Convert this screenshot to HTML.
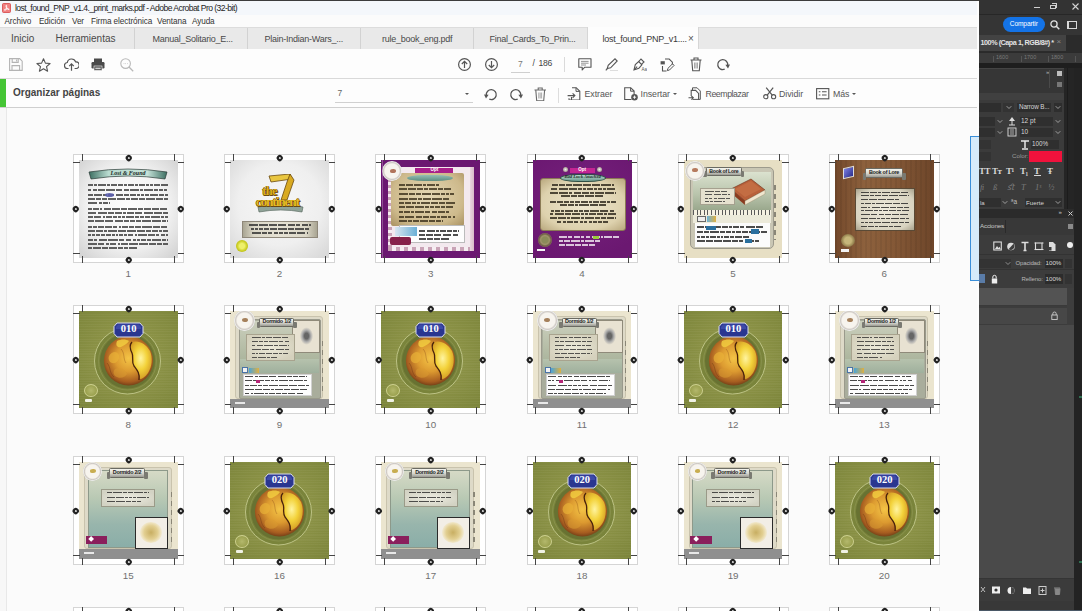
<!DOCTYPE html><html><head><meta charset="utf-8"><style>
*{margin:0;padding:0;box-sizing:border-box}
html,body{width:1082px;height:611px;overflow:hidden;background:#fbfbfb;font-family:"Liberation Sans",sans-serif;position:relative}
.a{position:absolute}
.t{position:absolute;white-space:nowrap;line-height:1}
</style></head><body><div class="a" style="left:0;top:0;width:979px;height:1px;background:#3c3c3c"></div>
<div class="a" style="left:0;top:1px;width:979px;height:14px;background:#f4f7fb"></div>
<div class="a" style="left:0;top:15px;width:979px;height:12px;background:#fbfbfb"></div>
<svg class="a" style="left:1.5px;top:3px" width="9" height="10" viewBox="0 0 9 10"><rect x="0.5" y="0.5" width="8" height="9" rx="1" fill="#f08080" stroke="#d64545" stroke-width="0.8"/><path d="M4.5 2.2c-0.8 0-0.6 1.5 0.2 3 0.7 1.3-2.6 2.7-2.3 1.6 0.3-0.9 3.5-1.4 4.6-0.6 0.7 0.5-1.1 0.6-1.9-0.7-0.7-1.2-0.4-3.3-0.6-3.3z" fill="none" stroke="#fff" stroke-width="0.9"/></svg>
<div class="t" style="left:15px;top:3.5px;font-size:8.6px;letter-spacing:-0.56px;color:#1e1e1e">lost_found_PNP_v1.4._print_marks.pdf - Adobe Acrobat Pro (32-bit)</div>
<div class="t" style="left:4.5px;top:18.2px;font-size:8.2px;letter-spacing:-0.1px;color:#333">Archivo</div>
<div class="t" style="left:39px;top:18.2px;font-size:8.2px;letter-spacing:-0.1px;color:#333">Edición</div>
<div class="t" style="left:72px;top:18.2px;font-size:8.2px;letter-spacing:-0.1px;color:#333">Ver</div>
<div class="t" style="left:91px;top:18.2px;font-size:8.2px;letter-spacing:-0.1px;color:#333">Firma electrónica</div>
<div class="t" style="left:157px;top:18.2px;font-size:8.2px;letter-spacing:-0.1px;color:#333">Ventana</div>
<div class="t" style="left:192px;top:18.2px;font-size:8.2px;letter-spacing:-0.1px;color:#333">Ayuda</div>
<div class="a" style="left:0;top:27px;width:979px;height:22px;background:#e9e9e9;border-top:1px solid #dcdcdc"></div>
<div class="t" style="left:11px;top:34px;font-size:10px;color:#4a4a4a">Inicio</div>
<div class="t" style="left:55.5px;top:34px;font-size:10px;color:#4a4a4a">Herramientas</div>
<div class="a" style="left:134px;top:28px;width:1px;height:21px;background:#d2d2d2"></div>
<div class="a" style="left:247px;top:28px;width:1px;height:21px;background:#d2d2d2"></div>
<div class="a" style="left:360px;top:28px;width:1px;height:21px;background:#d2d2d2"></div>
<div class="a" style="left:473px;top:28px;width:1px;height:21px;background:#d2d2d2"></div>
<div class="t" style="left:152.5px;top:35px;font-size:9px;letter-spacing:-0.25px;color:#4a4a4a">Manual_Solitario_E...</div>
<div class="t" style="left:264.5px;top:35px;font-size:9px;letter-spacing:-0.25px;color:#4a4a4a">Plain-Indian-Wars_...</div>
<div class="t" style="left:382px;top:35px;font-size:9px;letter-spacing:-0.25px;color:#4a4a4a">rule_book_eng.pdf</div>
<div class="t" style="left:489.5px;top:35px;font-size:9px;letter-spacing:-0.25px;color:#4a4a4a">Final_Cards_To_Prin...</div>
<div class="a" style="left:587px;top:27px;width:112px;height:23px;background:#fdfdfd;border-right:1px solid #d6d6d6;border-left:1px solid #d6d6d6"></div>
<div class="t" style="left:602.5px;top:35px;font-size:9px;letter-spacing:-0.25px;color:#3a3a3a">lost_found_PNP_v1....</div>
<div class="t" style="left:688px;top:33.5px;font-size:10px;color:#555">&#215;</div>
<div class="a" style="left:0;top:49px;width:979px;height:29px;background:#fdfdfd"></div>
<div class="a" style="left:0;top:78px;width:979px;height:1px;background:#d9d9d9"></div>
<div class="a" style="left:0;top:79px;width:979px;height:28px;background:#fdfdfd"></div>
<div class="a" style="left:0;top:79px;width:6px;height:28px;background:#45c535"></div>
<div class="a" style="left:0;top:107px;width:979px;height:1px;background:#cfcfcf"></div>
<div class="t" style="left:13px;top:88px;font-size:10px;font-weight:bold;color:#444">Organizar páginas</div>
<svg class="a" style="left:9px;top:58px" width="14" height="13" viewBox="0 0 14 13"><path d="M0.6 0.6h10l2.6 2.6v9.2h-12.6z" fill="none" stroke="#b4b4b4" stroke-width="1.1"/><path d="M3.2 0.8v3.6h6v-3.6M3 12.2v-4.6h7.6v4.6" fill="none" stroke="#b4b4b4" stroke-width="1.1"/><path d="M7.6 1.5v2" stroke="#b4b4b4"/></svg>
<svg class="a" style="left:36px;top:57.5px" width="15" height="14" viewBox="0 0 15 14"><path d="M7.5 0.8l1.9 4.3 4.7 0.4-3.6 3.1 1.1 4.6-4.1-2.5-4.1 2.5 1.1-4.6-3.6-3.1 4.7-0.4z" fill="none" stroke="#555" stroke-width="1.1" stroke-linejoin="round"/></svg>
<svg class="a" style="left:64px;top:58px" width="15" height="13" viewBox="0 0 15 13"><path d="M4.5 10.5h-0.8a3 3 0 0 1-0.4-6 4.3 4.3 0 0 1 8.3-0.6 3.1 3.1 0 0 1 0.6 6.6h-1.6" fill="none" stroke="#555" stroke-width="1.2"/><path d="M7.5 12.8v-6.8M5.2 8.2l2.3-2.3 2.3 2.3" fill="none" stroke="#555" stroke-width="1.2"/></svg>
<svg class="a" style="left:91px;top:57.5px" width="14" height="13" viewBox="0 0 14 13"><rect x="3" y="0.5" width="8" height="3.5" fill="#4a4a4a"/><rect x="0.5" y="4" width="13" height="6.5" rx="1.2" fill="#4a4a4a"/><rect x="3" y="8" width="8" height="4.5" fill="#4a4a4a" stroke="#fdfdfd" stroke-width="0.6"/><rect x="4.3" y="9.6" width="5.4" height="1.6" fill="#cfcfcf"/></svg>
<svg class="a" style="left:120px;top:58px" width="14" height="13.5" viewBox="0 0 14 13.5"><circle cx="5.6" cy="5.6" r="4.8" fill="none" stroke="#b8b8b8" stroke-width="1.1"/><path d="M9 9l4.2 4.2" stroke="#b8b8b8" stroke-width="1.3"/><path d="M3.7 5.6h0.6M5.4 5.6h0.6M7.1 5.6h0.6" stroke="#b8b8b8" stroke-width="0.9"/></svg>
<svg class="a" style="left:457.5px;top:57.5px" width="13" height="13" viewBox="0 0 13 13"><circle cx="6.5" cy="6.5" r="5.9" fill="none" stroke="#555" stroke-width="1.2"/><path d="M6.5 10v-6.6M3.8 6l2.7-2.7 2.7 2.7" fill="none" stroke="#555" stroke-width="1.2"/></svg>
<svg class="a" style="left:484.5px;top:57.5px" width="13" height="13" viewBox="0 0 13 13"><circle cx="6.5" cy="6.5" r="5.9" fill="none" stroke="#555" stroke-width="1.2"/><path d="M6.5 3v6.6M3.8 7l2.7 2.7 2.7-2.7" fill="none" stroke="#555" stroke-width="1.2"/></svg>
<div class="t" style="left:518px;top:59.5px;font-size:8.5px;color:#777">7</div>
<div class="a" style="left:511px;top:71.5px;width:19px;height:1px;background:#cfcfcf"></div>
<div class="t" style="left:532.5px;top:59.3px;font-size:8.6px;letter-spacing:-0.35px;color:#444">/&#160;&#160;186</div>
<div class="a" style="left:564px;top:56.5px;width:1px;height:15.5px;background:#dadada"></div>
<svg class="a" style="left:577.5px;top:58px" width="14" height="13" viewBox="0 0 14 13"><path d="M0.8 0.8h12.2v8.4h-6.2l-2.6 2.8v-2.8h-3.4z" fill="none" stroke="#555" stroke-width="1.1" stroke-linejoin="round"/><path d="M3 3.4h7.6M3 5.2h7.6M3 7h5" stroke="#777" stroke-width="0.8"/></svg>
<svg class="a" style="left:605px;top:58px" width="14" height="13" viewBox="0 0 14 13"><path d="M2.2 10.6l1-3.2 6.8-6.6 2.2 2.2-6.6 6.8z" fill="none" stroke="#555" stroke-width="1.1"/><path d="M0.8 12.4l1.6-1.8" stroke="#555" stroke-width="1.1"/><path d="M5 12.5h8" stroke="#ddd" stroke-width="1"/></svg>
<svg class="a" style="left:632.5px;top:58px" width="14" height="13" viewBox="0 0 14 13"><path d="M1 11.8l1.3-5.2 3.4-3 3.2 3.2-3 3.4z" fill="none" stroke="#555" stroke-width="1.1"/><path d="M5.7 3.6l2.3-2.6 3 3-2.6 2.3M1.2 11.6l3-3" fill="none" stroke="#555" stroke-width="1.1"/><text x="8.6" y="12.6" font-size="4.5" font-family="Liberation Sans" fill="#555">Aa</text></svg>
<svg class="a" style="left:660px;top:57.5px" width="15" height="14" viewBox="0 0 15 14"><rect x="0.6" y="3.2" width="4.2" height="3.2" fill="#555"/><path d="M5 1h4.2l3.2 3.2v2.4M2.5 8v5h4" fill="none" stroke="#555" stroke-width="1.1"/><path d="M7.3 12.6l0.6-2.2 4.6-4.6 1.6 1.6-4.6 4.6z" fill="none" stroke="#555" stroke-width="1"/></svg>
<svg class="a" style="left:689.5px;top:57px" width="12" height="14.5" viewBox="0 0 12 14.5"><path d="M0.5 3h11M4 3v-2h4v2M1.8 3.2l0.9 10.6h6.6l0.9-10.6" fill="none" stroke="#555" stroke-width="1.1"/><path d="M4.6 5.5v6M7.4 5.5v6M6 5.5v6" stroke="#777" stroke-width="0.7"/></svg>
<svg class="a" style="left:715.5px;top:57.5px" width="14" height="13" viewBox="0 0 14 13"><path d="M11.7 7.2 A5 5 0 1 0 8.7 11.2" fill="none" stroke="#555" stroke-width="1.3"/><path d="M14 6.6l-4.6 0.2 2.6 3.8z" fill="#555"/></svg>
<div class="t" style="left:337.5px;top:89px;font-size:8.5px;color:#666">7</div>
<div class="a" style="left:335px;top:101.5px;width:138px;height:1px;background:#d0d0d0"></div>
<div class="a" style="left:465px;top:92.5px;width:0;height:0;border-left:2.3px solid transparent;border-right:2.3px solid transparent;border-top:2.6px solid #555"></div>
<svg class="a" style="left:484px;top:87.5px" width="14" height="13" viewBox="0 0 14 13"><path d="M2.3 7.2 A5 5 0 1 1 5.3 11.2" fill="none" stroke="#555" stroke-width="1.3"/><path d="M0 6.6l4.6 0.2-2.6 3.8z" fill="#555"/></svg>
<svg class="a" style="left:508.5px;top:87.5px" width="14" height="13" viewBox="0 0 14 13"><path d="M11.7 7.2 A5 5 0 1 0 8.7 11.2" fill="none" stroke="#555" stroke-width="1.3"/><path d="M14 6.6l-4.6 0.2 2.6 3.8z" fill="#555"/></svg>
<svg class="a" style="left:534px;top:86.5px" width="12.5" height="14.5" viewBox="0 0 12.5 14.5"><path d="M0.5 3h11.5M4.2 3v-2h4v2M1.8 3.2l0.9 10.6h7l0.9-10.6" fill="none" stroke="#6a6a6a" stroke-width="1.1"/><path d="M4.8 5.5v6M7.6 5.5v6M6.2 5.5v6" stroke="#888" stroke-width="0.7"/></svg>
<div class="a" style="left:558px;top:87.5px;width:1px;height:15px;background:#dddddd"></div>
<svg class="a" style="left:566.5px;top:86.5px" width="14" height="13.5" viewBox="0 0 14 13.5"><path d="M5 0.7h4.2l3.6 3.6v8.8h-8.3v-3" fill="none" stroke="#555" stroke-width="1.1"/><path d="M9 0.8v3.6h3.6" fill="none" stroke="#555" stroke-width="1"/><path d="M0.6 8.6h7.2M5.6 6.3l2.3 2.3-2.3 2.3" fill="none" stroke="#555" stroke-width="1.1"/><path d="M2 11.2v1.8h2" fill="none" stroke="#555" stroke-width="1"/></svg>
<div class="t" style="left:584.5px;top:89.5px;font-size:8.8px;letter-spacing:-0.05px;color:#555">Extraer</div>
<svg class="a" style="left:623.5px;top:86.5px" width="15" height="14" viewBox="0 0 15 14"><path d="M7.5 12.5h-6.8v-11.8h6l3.4 3.4v3.4" fill="none" stroke="#555" stroke-width="1.1"/><path d="M6.6 0.8v3.4h3.4" fill="none" stroke="#555" stroke-width="1"/><circle cx="10.5" cy="10.2" r="3.3" fill="#555"/><path d="M10.5 8.6v3.2M8.9 10.2h3.2" stroke="#fff" stroke-width="0.9"/></svg>
<div class="t" style="left:640.5px;top:89.5px;font-size:8.8px;letter-spacing:-0.05px;color:#555">Insertar</div>
<div class="a" style="left:672.5px;top:92.5px;width:0;height:0;border-left:2.2px solid transparent;border-right:2.2px solid transparent;border-top:2.5px solid #555"></div>
<svg class="a" style="left:688px;top:86.5px" width="15" height="13.5" viewBox="0 0 15 13.5"><path d="M4.5 3.2v-2.4h4.6l3.2 3.2v8.4h-7.8" fill="none" stroke="#555" stroke-width="1"/><path d="M3.2 9v-5.6h4.4l3 3v6.3" fill="none" stroke="#555" stroke-width="1.1"/><path d="M0.5 10.8h4.6M3.4 9l1.9 1.8-1.9 1.8" fill="none" stroke="#555" stroke-width="1.1"/></svg>
<div class="t" style="left:705.5px;top:89.5px;font-size:8.8px;letter-spacing:-0.45px;color:#555">Reemplazar</div>
<svg class="a" style="left:762.5px;top:87px" width="14" height="12.5" viewBox="0 0 14 12.5"><circle cx="2.8" cy="9.7" r="2.1" fill="none" stroke="#555" stroke-width="1.1"/><circle cx="10.6" cy="9.7" r="2.1" fill="none" stroke="#555" stroke-width="1.1"/><path d="M4.2 8.2l6-7.6M9.2 8.2l-6-7.6" stroke="#555" stroke-width="1.2"/></svg>
<div class="t" style="left:779px;top:89.5px;font-size:8.8px;letter-spacing:-0.05px;color:#555">Dividir</div>
<svg class="a" style="left:816px;top:88px" width="13.5" height="11.5" viewBox="0 0 13.5 11.5"><rect x="0.6" y="0.6" width="12.2" height="10.2" fill="none" stroke="#555" stroke-width="1.1"/><path d="M2.8 3.8h1.6M2.8 7h1.6M6 3.8h4.6M6 7h4.6" stroke="#555" stroke-width="1.1"/></svg>
<div class="t" style="left:833px;top:89.5px;font-size:8.8px;letter-spacing:-0.05px;color:#555">Más</div>
<div class="a" style="left:851.5px;top:92.5px;width:0;height:0;border-left:2.2px solid transparent;border-right:2.2px solid transparent;border-top:2.5px solid #555"></div>
<div class="a" style="left:0;top:108px;width:7px;height:503px;background:#f7f7f7;border-right:1px solid #e8e8e8"></div>
<div class="a" style="left:73.0px;top:154px;width:111px;height:109px;background:#ffffff;border:1px solid #d5d5d5"></div><div class="a" style="left:79.0px;top:160px;width:99px;height:98px;overflow:hidden"><div class="a" style="left:0px;top:0px;width:98.5px;height:97.5px;background:radial-gradient(ellipse 66% 66% at 50% 48%,#fdfdfd 0%,#f3f3f3 60%,#d6d6d6 100%)"></div><svg class="a" style="left:9px;top:7px" width="80" height="14" viewBox="0 0 80 14"><defs><linearGradient id="p1g" x1="0" x2="1"><stop offset="0" stop-color="#3d6f62"/><stop offset="0.25" stop-color="#b9dbd0"/><stop offset="0.75" stop-color="#c5e2d8"/><stop offset="1" stop-color="#3d6f62"/></linearGradient></defs><path d="M1 5 Q40 -1 79 5 L77 12 Q40 6 3 12z" fill="url(#p1g)" stroke="#2a3a35" stroke-width="0.7"/></svg><div class="t" style="left:9px;top:10px;width:80px;text-align:center;font-family:Liberation Serif;font-weight:bold;font-style:italic;font-size:6px;color:#1a2a26">Lost &amp; Found</div><div class="a" style="left:9px;top:24px;width:80px;height:1.6px;background:linear-gradient(90deg,#3a3a3a 0.0px 4.8px,transparent 4.8px 5.9px,#3a3a3a 5.9px 9.4px,transparent 9.4px 10.5px,#3a3a3a 10.5px 17.6px,transparent 17.6px 18.7px,#3a3a3a 18.7px 21.7px,transparent 21.7px 22.8px,#3a3a3a 22.8px 29.0px,transparent 29.0px 30.1px,#3a3a3a 30.1px 35.2px,transparent 35.2px 36.3px,#3a3a3a 36.3px 39.2px,transparent 39.2px 40.3px,#3a3a3a 40.3px 46.4px,transparent 46.4px 47.5px,#3a3a3a 47.5px 50.2px,transparent 50.2px 51.3px,#3a3a3a 51.3px 56.9px,transparent 56.9px 58.0px,#3a3a3a 58.0px 60.9px,transparent 60.9px 62.0px,#3a3a3a 62.0px 65.2px,transparent 65.2px 66.3px,#3a3a3a 66.3px 71.7px,transparent 71.7px 72.8px,#3a3a3a 72.8px 80.0px,transparent 80.0px 81.1px);opacity:.8"></div><div class="a" style="left:9px;top:29px;width:80px;height:1.6px;background:linear-gradient(90deg,#3a3a3a 0.0px 3.4px,transparent 3.4px 4.5px,#3a3a3a 4.5px 8.5px,transparent 8.5px 9.6px,#3a3a3a 9.6px 16.5px,transparent 16.5px 17.6px,#3a3a3a 17.6px 26.8px,transparent 26.8px 27.9px,#3a3a3a 27.9px 34.4px,transparent 34.4px 35.5px,#3a3a3a 35.5px 40.8px,transparent 40.8px 41.9px,#3a3a3a 41.9px 51.2px,transparent 51.2px 52.3px,#3a3a3a 52.3px 55.1px,transparent 55.1px 56.2px,#3a3a3a 56.2px 64.7px,transparent 64.7px 65.8px,#3a3a3a 65.8px 70.4px,transparent 70.4px 71.5px,#3a3a3a 71.5px 75.0px,transparent 75.0px 76.1px,#3a3a3a 76.1px 79.4px,transparent 79.4px 80.5px);opacity:.8"></div><div class="a" style="left:9px;top:34px;width:80px;height:1.6px;background:linear-gradient(90deg,#3a3a3a 0.0px 4.7px,transparent 4.7px 5.8px,#3a3a3a 5.8px 14.0px,transparent 14.0px 15.1px,#3a3a3a 15.1px 18.8px,transparent 18.8px 19.9px,#3a3a3a 19.9px 26.5px,transparent 26.5px 27.6px,#3a3a3a 27.6px 34.6px,transparent 34.6px 35.7px,#3a3a3a 35.7px 40.8px,transparent 40.8px 41.9px,#3a3a3a 41.9px 48.2px,transparent 48.2px 49.3px,#3a3a3a 49.3px 52.3px,transparent 52.3px 53.4px,#3a3a3a 53.4px 56.3px,transparent 56.3px 57.4px,#3a3a3a 57.4px 61.3px,transparent 61.3px 62.4px,#3a3a3a 62.4px 69.7px,transparent 69.7px 70.8px,#3a3a3a 70.8px 76.3px,transparent 76.3px 77.4px,#3a3a3a 77.4px 80.0px,transparent 80.0px 81.1px);opacity:.8"></div><div class="a" style="left:9px;top:38px;width:80px;height:1.6px;background:linear-gradient(90deg,#3a3a3a 0.0px 6.6px,transparent 6.6px 7.7px,#3a3a3a 7.7px 13.4px,transparent 13.4px 14.5px,#3a3a3a 14.5px 19.1px,transparent 19.1px 20.2px,#3a3a3a 20.2px 28.2px,transparent 28.2px 29.3px,#3a3a3a 29.3px 36.7px,transparent 36.7px 37.8px,#3a3a3a 37.8px 42.0px,transparent 42.0px 43.1px,#3a3a3a 43.1px 49.7px,transparent 49.7px 50.8px,#3a3a3a 50.8px 56.9px,transparent 56.9px 58.0px,#3a3a3a 58.0px 66.7px,transparent 66.7px 67.8px,#3a3a3a 67.8px 75.4px,transparent 75.4px 76.5px,#3a3a3a 76.5px 80.0px,transparent 80.0px 81.1px);opacity:.8"></div><div class="a" style="left:9px;top:42px;width:22px;height:1.6px;background:linear-gradient(90deg,#3a3a3a 0.0px 9.4px,transparent 9.4px 10.5px,#3a3a3a 10.5px 13.8px,transparent 13.8px 14.9px,#3a3a3a 14.9px 20.3px,transparent 20.3px 21.4px,#3a3a3a 21.4px 22.0px,transparent 22.0px 23.1px);opacity:.8"></div><div class="a" style="left:9px;top:48px;width:80px;height:1.6px;background:linear-gradient(90deg,#3a3a3a 0.0px 3.6px,transparent 3.6px 4.7px,#3a3a3a 4.7px 10.6px,transparent 10.6px 11.7px,#3a3a3a 11.7px 14.5px,transparent 14.5px 15.6px,#3a3a3a 15.6px 22.7px,transparent 22.7px 23.8px,#3a3a3a 23.8px 31.7px,transparent 31.7px 32.8px,#3a3a3a 32.8px 39.3px,transparent 39.3px 40.4px,#3a3a3a 40.4px 49.0px,transparent 49.0px 50.1px,#3a3a3a 50.1px 54.8px,transparent 54.8px 55.9px,#3a3a3a 55.9px 63.3px,transparent 63.3px 64.4px,#3a3a3a 64.4px 71.1px,transparent 71.1px 72.2px,#3a3a3a 72.2px 78.7px,transparent 78.7px 79.8px,#3a3a3a 79.8px 80.0px,transparent 80.0px 81.1px);opacity:.8"></div><div class="a" style="left:9px;top:52px;width:80px;height:1.6px;background:linear-gradient(90deg,#3a3a3a 0.0px 8.4px,transparent 8.4px 9.5px,#3a3a3a 9.5px 18.6px,transparent 18.6px 19.7px,#3a3a3a 19.7px 25.5px,transparent 25.5px 26.6px,#3a3a3a 26.6px 33.8px,transparent 33.8px 34.9px,#3a3a3a 34.9px 37.8px,transparent 37.8px 38.9px,#3a3a3a 38.9px 46.3px,transparent 46.3px 47.4px,#3a3a3a 47.4px 54.4px,transparent 54.4px 55.5px,#3a3a3a 55.5px 65.0px,transparent 65.0px 66.1px,#3a3a3a 66.1px 74.3px,transparent 74.3px 75.4px,#3a3a3a 75.4px 79.9px,transparent 79.9px 81.0px);opacity:.8"></div><div class="a" style="left:9px;top:56px;width:80px;height:1.6px;background:linear-gradient(90deg,#3a3a3a 0.0px 5.2px,transparent 5.2px 6.3px,#3a3a3a 6.3px 13.5px,transparent 13.5px 14.6px,#3a3a3a 14.6px 17.2px,transparent 17.2px 18.3px,#3a3a3a 18.3px 24.1px,transparent 24.1px 25.2px,#3a3a3a 25.2px 28.8px,transparent 28.8px 29.9px,#3a3a3a 29.9px 33.3px,transparent 33.3px 34.4px,#3a3a3a 34.4px 37.3px,transparent 37.3px 38.4px,#3a3a3a 38.4px 46.3px,transparent 46.3px 47.4px,#3a3a3a 47.4px 50.8px,transparent 50.8px 51.9px,#3a3a3a 51.9px 56.1px,transparent 56.1px 57.2px,#3a3a3a 57.2px 62.4px,transparent 62.4px 63.5px,#3a3a3a 63.5px 72.1px,transparent 72.1px 73.2px,#3a3a3a 73.2px 76.3px,transparent 76.3px 77.4px,#3a3a3a 77.4px 80.0px,transparent 80.0px 81.1px);opacity:.8"></div><div class="a" style="left:9px;top:60px;width:80px;height:1.6px;background:linear-gradient(90deg,#3a3a3a 0.0px 6.3px,transparent 6.3px 7.4px,#3a3a3a 7.4px 16.1px,transparent 16.1px 17.2px,#3a3a3a 17.2px 25.5px,transparent 25.5px 26.6px,#3a3a3a 26.6px 35.1px,transparent 35.1px 36.2px,#3a3a3a 36.2px 40.7px,transparent 40.7px 41.8px,#3a3a3a 41.8px 47.2px,transparent 47.2px 48.3px,#3a3a3a 48.3px 53.3px,transparent 53.3px 54.4px,#3a3a3a 54.4px 63.1px,transparent 63.1px 64.2px,#3a3a3a 64.2px 73.4px,transparent 73.4px 74.5px,#3a3a3a 74.5px 78.0px,transparent 78.0px 79.1px,#3a3a3a 79.1px 80.0px,transparent 80.0px 81.1px);opacity:.8"></div><div class="a" style="left:9px;top:66px;width:80px;height:1.6px;background:linear-gradient(90deg,#3a3a3a 0.0px 4.1px,transparent 4.1px 5.2px,#3a3a3a 5.2px 9.4px,transparent 9.4px 10.5px,#3a3a3a 10.5px 16.4px,transparent 16.4px 17.5px,#3a3a3a 17.5px 24.1px,transparent 24.1px 25.2px,#3a3a3a 25.2px 29.5px,transparent 29.5px 30.6px,#3a3a3a 30.6px 33.1px,transparent 33.1px 34.2px,#3a3a3a 34.2px 39.7px,transparent 39.7px 40.8px,#3a3a3a 40.8px 45.9px,transparent 45.9px 47.0px,#3a3a3a 47.0px 53.4px,transparent 53.4px 54.5px,#3a3a3a 54.5px 63.7px,transparent 63.7px 64.8px,#3a3a3a 64.8px 72.1px,transparent 72.1px 73.2px,#3a3a3a 73.2px 79.3px,transparent 79.3px 80.4px);opacity:.8"></div><div class="a" style="left:9px;top:70px;width:80px;height:1.6px;background:linear-gradient(90deg,#3a3a3a 0.0px 6.8px,transparent 6.8px 7.9px,#3a3a3a 7.9px 15.2px,transparent 15.2px 16.3px,#3a3a3a 16.3px 19.1px,transparent 19.1px 20.2px,#3a3a3a 20.2px 29.0px,transparent 29.0px 30.1px,#3a3a3a 30.1px 38.1px,transparent 38.1px 39.2px,#3a3a3a 39.2px 47.8px,transparent 47.8px 48.9px,#3a3a3a 48.9px 57.0px,transparent 57.0px 58.1px,#3a3a3a 58.1px 63.3px,transparent 63.3px 64.4px,#3a3a3a 64.4px 69.7px,transparent 69.7px 70.8px,#3a3a3a 70.8px 74.1px,transparent 74.1px 75.2px,#3a3a3a 75.2px 80.0px,transparent 80.0px 81.1px);opacity:.8"></div><div class="a" style="left:9px;top:74px;width:80px;height:1.6px;background:linear-gradient(90deg,#3a3a3a 0.0px 2.9px,transparent 2.9px 4.0px,#3a3a3a 4.0px 7.0px,transparent 7.0px 8.1px,#3a3a3a 8.1px 12.1px,transparent 12.1px 13.2px,#3a3a3a 13.2px 16.8px,transparent 16.8px 17.9px,#3a3a3a 17.9px 22.8px,transparent 22.8px 23.9px,#3a3a3a 23.9px 26.8px,transparent 26.8px 27.9px,#3a3a3a 27.9px 30.4px,transparent 30.4px 31.5px,#3a3a3a 31.5px 35.0px,transparent 35.0px 36.1px,#3a3a3a 36.1px 39.3px,transparent 39.3px 40.4px,#3a3a3a 40.4px 45.5px,transparent 45.5px 46.6px,#3a3a3a 46.6px 49.2px,transparent 49.2px 50.3px,#3a3a3a 50.3px 59.0px,transparent 59.0px 60.1px,#3a3a3a 60.1px 66.9px,transparent 66.9px 68.0px,#3a3a3a 68.0px 71.5px,transparent 71.5px 72.6px,#3a3a3a 72.6px 76.9px,transparent 76.9px 78.0px,#3a3a3a 78.0px 80.0px,transparent 80.0px 81.1px);opacity:.8"></div><div class="a" style="left:9px;top:79px;width:80px;height:1.6px;background:linear-gradient(90deg,#3a3a3a 0.0px 5.0px,transparent 5.0px 6.1px,#3a3a3a 6.1px 9.5px,transparent 9.5px 10.6px,#3a3a3a 10.6px 19.1px,transparent 19.1px 20.2px,#3a3a3a 20.2px 29.6px,transparent 29.6px 30.7px,#3a3a3a 30.7px 36.5px,transparent 36.5px 37.6px,#3a3a3a 37.6px 43.5px,transparent 43.5px 44.6px,#3a3a3a 44.6px 47.7px,transparent 47.7px 48.8px,#3a3a3a 48.8px 52.0px,transparent 52.0px 53.1px,#3a3a3a 53.1px 58.0px,transparent 58.0px 59.1px,#3a3a3a 59.1px 63.4px,transparent 63.4px 64.5px,#3a3a3a 64.5px 72.8px,transparent 72.8px 73.9px,#3a3a3a 73.9px 77.6px,transparent 77.6px 78.7px,#3a3a3a 78.7px 80.0px,transparent 80.0px 81.1px);opacity:.8"></div><div class="a" style="left:9px;top:83px;width:80px;height:1.6px;background:linear-gradient(90deg,#3a3a3a 0.0px 9.2px,transparent 9.2px 10.3px,#3a3a3a 10.3px 16.5px,transparent 16.5px 17.6px,#3a3a3a 17.6px 21.1px,transparent 21.1px 22.2px,#3a3a3a 22.2px 28.5px,transparent 28.5px 29.6px,#3a3a3a 29.6px 32.3px,transparent 32.3px 33.4px,#3a3a3a 33.4px 39.6px,transparent 39.6px 40.7px,#3a3a3a 40.7px 50.0px,transparent 50.0px 51.1px,#3a3a3a 51.1px 59.7px,transparent 59.7px 60.8px,#3a3a3a 60.8px 68.1px,transparent 68.1px 69.2px,#3a3a3a 69.2px 73.6px,transparent 73.6px 74.7px,#3a3a3a 74.7px 79.7px,transparent 79.7px 80.8px);opacity:.8"></div><div class="a" style="left:9px;top:87px;width:50px;height:1.6px;background:linear-gradient(90deg,#3a3a3a 0.0px 3.7px,transparent 3.7px 4.8px,#3a3a3a 4.8px 12.7px,transparent 12.7px 13.8px,#3a3a3a 13.8px 20.0px,transparent 20.0px 21.1px,#3a3a3a 21.1px 29.1px,transparent 29.1px 30.2px,#3a3a3a 30.2px 35.0px,transparent 35.0px 36.1px,#3a3a3a 36.1px 40.1px,transparent 40.1px 41.2px,#3a3a3a 41.2px 49.4px,transparent 49.4px 50.5px);opacity:.8"></div><div class="a" style="left:26px;top:33px;width:9px;height:3.5px;border-radius:50%;background:#5c5fae;opacity:.9"></div></div><div class="a" style="left:81.5px;top:154.3px;width:1.1px;height:6.4px;background:#454545"></div><div class="a" style="left:81.5px;top:256.2px;width:1.1px;height:6.4px;background:#454545"></div><div class="a" style="left:174.0px;top:154.3px;width:1.1px;height:6.4px;background:#454545"></div><div class="a" style="left:174.0px;top:256.2px;width:1.1px;height:6.4px;background:#454545"></div><div class="a" style="left:73.3px;top:162.1px;width:6.6px;height:1.1px;background:#454545"></div><div class="a" style="left:177.5px;top:162.1px;width:6.3px;height:1.1px;background:#454545"></div><div class="a" style="left:73.3px;top:253.3px;width:6.6px;height:1.1px;background:#454545"></div><div class="a" style="left:177.5px;top:253.3px;width:6.3px;height:1.1px;background:#454545"></div><div class="a" style="left:125.65px;top:154.65px;width:5.5px;height:5.5px;border-radius:45%;transform:rotate(45deg);background:radial-gradient(circle,#c4c4c4 0 0.75px,#222 1.35px)"></div><div class="a" style="left:73.25px;top:205.95px;width:5.5px;height:5.5px;border-radius:45%;transform:rotate(45deg);background:radial-gradient(circle,#c4c4c4 0 0.75px,#222 1.35px)"></div><div class="a" style="left:177.85px;top:205.95px;width:5.5px;height:5.5px;border-radius:45%;transform:rotate(45deg);background:radial-gradient(circle,#c4c4c4 0 0.75px,#222 1.35px)"></div><div class="a" style="left:125.65px;top:256.85px;width:5.5px;height:5.5px;border-radius:45%;transform:rotate(45deg);background:radial-gradient(circle,#c4c4c4 0 0.75px,#222 1.35px)"></div><div class="t" style="left:108.3px;top:268.6px;width:40px;text-align:center;font-size:9.8px;color:#707070">1</div>
<div class="a" style="left:224.2px;top:154px;width:111px;height:109px;background:#ffffff;border:1px solid #d5d5d5"></div><div class="a" style="left:230.2px;top:160px;width:99px;height:98px;overflow:hidden"><div class="a" style="left:0px;top:0px;width:98.5px;height:97.5px;background:radial-gradient(ellipse 70% 70% at 50% 45%,#f7f7f7 0%,#efefef 60%,#d9d9d9 100%)"></div><svg class="a" style="left:26px;top:14px" width="50" height="40" viewBox="0 0 50 40"><path d="M13 2 L34 0 L36 5 L15 8z" fill="#e9c640" stroke="#6b4a10" stroke-width="0.8"/><path d="M34 0 L38 6 L31 26 L25 26 L31 8z" fill="#d9aa22" stroke="#6b4a10" stroke-width="0.8"/><path d="M2 33 Q25 28 47 33 L46 38 Q25 34 3 38z" fill="#8fa398" stroke="#4f5f56" stroke-width="0.6"/></svg><div class="t" style="left:32px;top:25px;font-family:Liberation Serif;font-weight:bold;font-size:12.5px;letter-spacing:-0.6px;color:#dcae1c;text-shadow:0.5px 0 0 #6b4a10,-0.5px 0 0 #6b4a10,0 0.5px 0 #6b4a10,0 -0.5px 0 #6b4a10,0.8px 0.8px 0 #5a3a08">the</div><div class="t" style="left:25.5px;top:34.5px;font-family:Liberation Serif;font-weight:bold;font-size:13.5px;letter-spacing:-1.2px;color:#e6bb22;text-shadow:0.5px 0 0 #6b4a10,-0.5px 0 0 #6b4a10,0 0.5px 0 #6b4a10,0 -0.5px 0 #6b4a10,0.8px 0.8px 0 #5a3a08">continent</div><div class="a" style="left:11.5px;top:60.5px;width:76px;height:17px;background:linear-gradient(90deg,#a9a593,#dcd8c8 15%,#e6e2d4 50%,#dcd8c8 85%,#a9a593);border:0.5px solid #8f887a"></div><div class="a" style="left:18.5px;top:64px;width:62px;height:1.5px;background:linear-gradient(90deg,#2f2f2f 0.0px 9.4px,transparent 9.4px 10.5px,#2f2f2f 10.5px 19.0px,transparent 19.0px 20.1px,#2f2f2f 20.1px 28.2px,transparent 28.2px 29.3px,#2f2f2f 29.3px 37.5px,transparent 37.5px 38.6px,#2f2f2f 38.6px 46.3px,transparent 46.3px 47.4px,#2f2f2f 47.4px 51.5px,transparent 51.5px 52.6px,#2f2f2f 52.6px 58.7px,transparent 58.7px 59.8px,#2f2f2f 59.8px 62.0px,transparent 62.0px 63.1px);opacity:.8"></div><div class="a" style="left:20.5px;top:68px;width:58px;height:1.5px;background:linear-gradient(90deg,#2f2f2f 0.0px 2.7px,transparent 2.7px 3.8px,#2f2f2f 3.8px 6.5px,transparent 6.5px 7.6px,#2f2f2f 7.6px 12.1px,transparent 12.1px 13.2px,#2f2f2f 13.2px 17.5px,transparent 17.5px 18.6px,#2f2f2f 18.6px 25.9px,transparent 25.9px 27.0px,#2f2f2f 27.0px 36.2px,transparent 36.2px 37.3px,#2f2f2f 37.3px 42.9px,transparent 42.9px 44.0px,#2f2f2f 44.0px 53.1px,transparent 53.1px 54.2px,#2f2f2f 54.2px 58.0px,transparent 58.0px 59.1px);opacity:.8"></div><div class="a" style="left:21.5px;top:72px;width:56px;height:1.5px;background:linear-gradient(90deg,#2f2f2f 0.0px 9.2px,transparent 9.2px 10.3px,#2f2f2f 10.3px 15.3px,transparent 15.3px 16.4px,#2f2f2f 16.4px 20.5px,transparent 20.5px 21.6px,#2f2f2f 21.6px 25.7px,transparent 25.7px 26.8px,#2f2f2f 26.8px 30.6px,transparent 30.6px 31.7px,#2f2f2f 31.7px 35.7px,transparent 35.7px 36.8px,#2f2f2f 36.8px 43.6px,transparent 43.6px 44.7px,#2f2f2f 44.7px 53.5px,transparent 53.5px 54.6px,#2f2f2f 54.6px 56.0px,transparent 56.0px 57.1px);opacity:.8"></div><div class="a" style="left:5.5px;top:79.5px;width:12.5px;height:12.5px;border-radius:50%;background:radial-gradient(circle,#eef06a 0 30%,#c9cc20 60%,#a0a616)"></div></div><div class="a" style="left:232.7px;top:154.3px;width:1.1px;height:6.4px;background:#454545"></div><div class="a" style="left:232.7px;top:256.2px;width:1.1px;height:6.4px;background:#454545"></div><div class="a" style="left:325.2px;top:154.3px;width:1.1px;height:6.4px;background:#454545"></div><div class="a" style="left:325.2px;top:256.2px;width:1.1px;height:6.4px;background:#454545"></div><div class="a" style="left:224.5px;top:162.1px;width:6.6px;height:1.1px;background:#454545"></div><div class="a" style="left:328.7px;top:162.1px;width:6.3px;height:1.1px;background:#454545"></div><div class="a" style="left:224.5px;top:253.3px;width:6.6px;height:1.1px;background:#454545"></div><div class="a" style="left:328.7px;top:253.3px;width:6.3px;height:1.1px;background:#454545"></div><div class="a" style="left:276.85px;top:154.65px;width:5.5px;height:5.5px;border-radius:45%;transform:rotate(45deg);background:radial-gradient(circle,#c4c4c4 0 0.75px,#222 1.35px)"></div><div class="a" style="left:224.45px;top:205.95px;width:5.5px;height:5.5px;border-radius:45%;transform:rotate(45deg);background:radial-gradient(circle,#c4c4c4 0 0.75px,#222 1.35px)"></div><div class="a" style="left:329.05px;top:205.95px;width:5.5px;height:5.5px;border-radius:45%;transform:rotate(45deg);background:radial-gradient(circle,#c4c4c4 0 0.75px,#222 1.35px)"></div><div class="a" style="left:276.85px;top:256.85px;width:5.5px;height:5.5px;border-radius:45%;transform:rotate(45deg);background:radial-gradient(circle,#c4c4c4 0 0.75px,#222 1.35px)"></div><div class="t" style="left:259.5px;top:268.6px;width:40px;text-align:center;font-size:9.8px;color:#707070">2</div>
<div class="a" style="left:375.4px;top:154px;width:111px;height:109px;background:#ffffff;border:1px solid #d5d5d5"></div><div class="a" style="left:381.4px;top:160px;width:99px;height:98px;overflow:hidden"><div class="a" style="left:0px;top:0px;width:99.6px;height:98px;background:#6b1871"></div><div class="a" style="left:6.3px;top:7px;width:86.3px;height:84px;background:#f3e9ee;border-radius:2px"></div><div class="a" style="left:6.3px;top:7px;width:4px;height:84px;background:repeating-linear-gradient(#c9a3b6 0 3px,#f6eef2 3px 6px)"></div><div class="a" style="left:6.3px;top:87px;width:86.3px;height:4px;background:repeating-linear-gradient(90deg,#c9a3b6 0 4px,#f6eef2 4px 8px)"></div><div class="a" style="left:88.6px;top:7px;width:4px;height:84px;background:linear-gradient(90deg,#e9d6df,#d9b9c8)"></div><div class="a" style="left:9.5px;top:13px;width:73px;height:53px;background:radial-gradient(ellipse at 50% 45%,#e6d9b7,#cdb98b 70%,#a89060);border-radius:2px"></div><div class="a" style="left:26px;top:14.5px;width:46px;height:6.5px;background:linear-gradient(#93bfb3,#5d8d80);border-radius:40%/50%"></div><div class="a" style="left:34px;top:7.5px;width:38px;height:5px;background:#a8208a"></div><div class="t" style="left:34px;top:7.8px;width:38px;text-align:center;font-weight:bold;font-size:4.5px;color:#fff">Opt</div><div class="a" style="left:18px;top:24px;width:40px;height:1.5px;background:linear-gradient(90deg,#3a2f1a 0.0px 5.9px,transparent 5.9px 7.0px,#3a2f1a 7.0px 14.0px,transparent 14.0px 15.1px,#3a2f1a 15.1px 23.2px,transparent 23.2px 24.3px,#3a2f1a 24.3px 27.4px,transparent 27.4px 28.5px,#3a2f1a 28.5px 35.6px,transparent 35.6px 36.7px,#3a2f1a 36.7px 40.0px,transparent 40.0px 41.1px);opacity:.8"></div><div class="a" style="left:18px;top:28px;width:52px;height:1.5px;background:linear-gradient(90deg,#3a2f1a 0.0px 8.0px,transparent 8.0px 9.1px,#3a2f1a 9.1px 16.8px,transparent 16.8px 17.9px,#3a2f1a 17.9px 23.8px,transparent 23.8px 24.9px,#3a2f1a 24.9px 28.6px,transparent 28.6px 29.7px,#3a2f1a 29.7px 37.7px,transparent 37.7px 38.8px,#3a2f1a 38.8px 43.7px,transparent 43.7px 44.8px,#3a2f1a 44.8px 52.0px,transparent 52.0px 53.1px);opacity:.8"></div><div class="a" style="left:18px;top:33px;width:56px;height:1.5px;background:linear-gradient(90deg,#3a2f1a 0.0px 9.3px,transparent 9.3px 10.4px,#3a2f1a 10.4px 15.7px,transparent 15.7px 16.8px,#3a2f1a 16.8px 22.1px,transparent 22.1px 23.2px,#3a2f1a 23.2px 32.3px,transparent 32.3px 33.4px,#3a2f1a 33.4px 41.0px,transparent 41.0px 42.1px,#3a2f1a 42.1px 45.8px,transparent 45.8px 46.9px,#3a2f1a 46.9px 50.3px,transparent 50.3px 51.4px,#3a2f1a 51.4px 54.9px,transparent 54.9px 56.0px);opacity:.8"></div><div class="a" style="left:18px;top:38px;width:50px;height:1.5px;background:linear-gradient(90deg,#3a2f1a 0.0px 8.8px,transparent 8.8px 9.9px,#3a2f1a 9.9px 18.1px,transparent 18.1px 19.2px,#3a2f1a 19.2px 22.7px,transparent 22.7px 23.8px,#3a2f1a 23.8px 32.1px,transparent 32.1px 33.2px,#3a2f1a 33.2px 42.6px,transparent 42.6px 43.7px,#3a2f1a 43.7px 50.0px,transparent 50.0px 51.1px);opacity:.8"></div><div class="a" style="left:18px;top:42px;width:56px;height:1.5px;background:linear-gradient(90deg,#3a2f1a 0.0px 5.0px,transparent 5.0px 6.1px,#3a2f1a 6.1px 12.4px,transparent 12.4px 13.5px,#3a2f1a 13.5px 16.9px,transparent 16.9px 18.0px,#3a2f1a 18.0px 20.6px,transparent 20.6px 21.7px,#3a2f1a 21.7px 31.0px,transparent 31.0px 32.1px,#3a2f1a 32.1px 39.2px,transparent 39.2px 40.3px,#3a2f1a 40.3px 46.4px,transparent 46.4px 47.5px,#3a2f1a 47.5px 56.0px,transparent 56.0px 57.1px);opacity:.8"></div><div class="a" style="left:18px;top:46px;width:54px;height:1.5px;background:linear-gradient(90deg,#3a2f1a 0.0px 5.5px,transparent 5.5px 6.6px,#3a2f1a 6.6px 15.2px,transparent 15.2px 16.3px,#3a2f1a 16.3px 24.6px,transparent 24.6px 25.7px,#3a2f1a 25.7px 29.7px,transparent 29.7px 30.8px,#3a2f1a 30.8px 35.1px,transparent 35.1px 36.2px,#3a2f1a 36.2px 40.7px,transparent 40.7px 41.8px,#3a2f1a 41.8px 46.0px,transparent 46.0px 47.1px,#3a2f1a 47.1px 53.7px,transparent 53.7px 54.8px);opacity:.8"></div><div class="a" style="left:18px;top:51px;width:50px;height:1.5px;background:linear-gradient(90deg,#3a2f1a 0.0px 4.3px,transparent 4.3px 5.4px,#3a2f1a 5.4px 10.8px,transparent 10.8px 11.9px,#3a2f1a 11.9px 15.4px,transparent 15.4px 16.5px,#3a2f1a 16.5px 25.3px,transparent 25.3px 26.4px,#3a2f1a 26.4px 31.4px,transparent 31.4px 32.5px,#3a2f1a 32.5px 38.2px,transparent 38.2px 39.3px,#3a2f1a 39.3px 45.9px,transparent 45.9px 47.0px,#3a2f1a 47.0px 50.0px,transparent 50.0px 51.1px);opacity:.8"></div><div class="a" style="left:18px;top:56px;width:56px;height:1.5px;background:linear-gradient(90deg,#3a2f1a 0.0px 5.4px,transparent 5.4px 6.5px,#3a2f1a 6.5px 15.5px,transparent 15.5px 16.6px,#3a2f1a 16.6px 22.6px,transparent 22.6px 23.7px,#3a2f1a 23.7px 29.9px,transparent 29.9px 31.0px,#3a2f1a 31.0px 37.2px,transparent 37.2px 38.3px,#3a2f1a 38.3px 40.9px,transparent 40.9px 42.0px,#3a2f1a 42.0px 47.6px,transparent 47.6px 48.7px,#3a2f1a 48.7px 52.5px,transparent 52.5px 53.6px,#3a2f1a 53.6px 56.0px,transparent 56.0px 57.1px);opacity:.8"></div><div class="a" style="left:18px;top:60px;width:44px;height:1.5px;background:linear-gradient(90deg,#3a2f1a 0.0px 8.1px,transparent 8.1px 9.2px,#3a2f1a 9.2px 12.9px,transparent 12.9px 14.0px,#3a2f1a 14.0px 19.8px,transparent 19.8px 20.9px,#3a2f1a 20.9px 28.5px,transparent 28.5px 29.6px,#3a2f1a 29.6px 36.0px,transparent 36.0px 37.1px,#3a2f1a 37.1px 41.9px,transparent 41.9px 43.0px,#3a2f1a 43.0px 44.0px,transparent 44.0px 45.1px);opacity:.8"></div><div class="a" style="left:18px;top:65px;width:66px;height:18px;background:#fdfdfd;border:0.6px solid #bbb"></div><div class="a" style="left:38px;top:70px;width:40px;height:1.7px;background:linear-gradient(90deg,#222 0.0px 6.4px,transparent 6.4px 7.5px,#222 7.5px 15.5px,transparent 15.5px 16.6px,#222 16.6px 19.8px,transparent 19.8px 20.9px,#222 20.9px 27.3px,transparent 27.3px 28.4px,#222 28.4px 32.7px,transparent 32.7px 33.8px,#222 33.8px 38.2px,transparent 38.2px 39.3px,#222 39.3px 40.0px,transparent 40.0px 41.1px);opacity:.8"></div><div class="a" style="left:38px;top:74px;width:40px;height:1.7px;background:linear-gradient(90deg,#222 0.0px 6.1px,transparent 6.1px 7.2px,#222 7.2px 13.6px,transparent 13.6px 14.7px,#222 14.7px 22.5px,transparent 22.5px 23.6px,#222 23.6px 32.5px,transparent 32.5px 33.6px,#222 33.6px 39.2px,transparent 39.2px 40.3px);opacity:.8"></div><div class="a" style="left:38px;top:78px;width:30px;height:1.7px;background:linear-gradient(90deg,#222 0.0px 6.8px,transparent 6.8px 7.9px,#222 7.9px 13.9px,transparent 13.9px 15.0px,#222 15.0px 21.1px,transparent 21.1px 22.2px,#222 22.2px 29.6px,transparent 29.6px 30.7px);opacity:.8"></div><div class="a" style="left:14px;top:66.5px;width:22px;height:9px;background:linear-gradient(90deg,#d9e6f1,#6bb0d6)"></div><div class="a" style="left:9px;top:76.5px;width:21px;height:8.5px;background:#86214a;border-radius:2px"></div><div class="a" style="left:1px;top:1px;width:20px;height:20px;border-radius:50%;background:radial-gradient(circle,#f7f4ee 0 50%,#cfcac4 60%,#eeeeee 68%,#bdbdbd 74%,rgba(240,240,240,.9) 80%,transparent 84%)"></div><div class="a" style="left:8.2px;top:8.6px;width:6.0px;height:4.0px;border-radius:50% 40% 50% 40%;background:#9a4a2a;opacity:.75"></div><div class="a" style="left:0.5px;top:0px;width:1px;height:98px;background:#b88ab9;opacity:.5"></div></div><div class="a" style="left:383.9px;top:154.3px;width:1.1px;height:6.4px;background:#454545"></div><div class="a" style="left:383.9px;top:256.2px;width:1.1px;height:6.4px;background:#454545"></div><div class="a" style="left:476.4px;top:154.3px;width:1.1px;height:6.4px;background:#454545"></div><div class="a" style="left:476.4px;top:256.2px;width:1.1px;height:6.4px;background:#454545"></div><div class="a" style="left:375.7px;top:162.1px;width:6.6px;height:1.1px;background:#454545"></div><div class="a" style="left:479.9px;top:162.1px;width:6.3px;height:1.1px;background:#454545"></div><div class="a" style="left:375.7px;top:253.3px;width:6.6px;height:1.1px;background:#454545"></div><div class="a" style="left:479.9px;top:253.3px;width:6.3px;height:1.1px;background:#454545"></div><div class="a" style="left:428.05px;top:154.65px;width:5.5px;height:5.5px;border-radius:45%;transform:rotate(45deg);background:radial-gradient(circle,#c4c4c4 0 0.75px,#222 1.35px)"></div><div class="a" style="left:375.65px;top:205.95px;width:5.5px;height:5.5px;border-radius:45%;transform:rotate(45deg);background:radial-gradient(circle,#c4c4c4 0 0.75px,#222 1.35px)"></div><div class="a" style="left:480.25px;top:205.95px;width:5.5px;height:5.5px;border-radius:45%;transform:rotate(45deg);background:radial-gradient(circle,#c4c4c4 0 0.75px,#222 1.35px)"></div><div class="a" style="left:428.05px;top:256.85px;width:5.5px;height:5.5px;border-radius:45%;transform:rotate(45deg);background:radial-gradient(circle,#c4c4c4 0 0.75px,#222 1.35px)"></div><div class="t" style="left:410.7px;top:268.6px;width:40px;text-align:center;font-size:9.8px;color:#707070">3</div>
<div class="a" style="left:526.6px;top:154px;width:111px;height:109px;background:#ffffff;border:1px solid #d5d5d5"></div><div class="a" style="left:532.6px;top:160px;width:99px;height:98px;overflow:hidden"><div class="a" style="left:0px;top:0px;width:99.6px;height:98px;background:#6b1871"></div><div class="a" style="left:0px;top:0px;width:99.6px;height:98px;background:radial-gradient(ellipse 70% 60% at 50% 40%,rgba(140,50,150,.35),transparent)"></div><div class="a" style="left:7.6px;top:18px;width:85.5px;height:53px;background:radial-gradient(ellipse at 50% 50%,#efe8d0,#ddd1ad 70%,#b9a87e);border-radius:3px;border:0.6px solid #8a7a55"></div><div class="a" style="left:27px;top:13.5px;width:46px;height:8px;background:linear-gradient(#b4d6cb,#6f9d90);border-radius:40%/50%;border:0.5px solid #2f4f45"></div><div class="t" style="left:27px;top:15.3px;width:46px;text-align:center;font-family:Liberation Serif;font-weight:bold;font-style:italic;font-size:4.6px;color:#1a2a24">Bad Luck Attached</div><div class="a" style="left:37px;top:7.5px;width:25px;height:5px;background:#c32592"></div><div class="t" style="left:37px;top:7.8px;width:25px;text-align:center;font-weight:bold;font-size:4.5px;color:#fff">Opt</div><div class="a" style="left:30px;top:6.5px;width:5px;height:5px;border-radius:50%;background:radial-gradient(circle,#eee,#8a7a6a)"></div><div class="a" style="left:64px;top:6.5px;width:5px;height:5px;border-radius:50%;background:radial-gradient(circle,#eee,#8a7a6a)"></div><div class="a" style="left:19.0px;top:24px;width:62px;height:1.5px;background:linear-gradient(90deg,#2a2418 0.0px 5.7px,transparent 5.7px 6.8px,#2a2418 6.8px 13.0px,transparent 13.0px 14.1px,#2a2418 14.1px 19.9px,transparent 19.9px 21.0px,#2a2418 21.0px 30.1px,transparent 30.1px 31.2px,#2a2418 31.2px 38.6px,transparent 38.6px 39.7px,#2a2418 39.7px 48.4px,transparent 48.4px 49.5px,#2a2418 49.5px 58.6px,transparent 58.6px 59.7px,#2a2418 59.7px 62.0px,transparent 62.0px 63.1px);opacity:.8"></div><div class="a" style="left:18.0px;top:28px;width:64px;height:1.5px;background:linear-gradient(90deg,#2a2418 0.0px 6.4px,transparent 6.4px 7.5px,#2a2418 7.5px 16.6px,transparent 16.6px 17.7px,#2a2418 17.7px 26.1px,transparent 26.1px 27.2px,#2a2418 27.2px 30.7px,transparent 30.7px 31.8px,#2a2418 31.8px 35.1px,transparent 35.1px 36.2px,#2a2418 36.2px 41.8px,transparent 41.8px 42.9px,#2a2418 42.9px 45.9px,transparent 45.9px 47.0px,#2a2418 47.0px 51.2px,transparent 51.2px 52.3px,#2a2418 52.3px 55.3px,transparent 55.3px 56.4px,#2a2418 56.4px 63.6px,transparent 63.6px 64.7px);opacity:.8"></div><div class="a" style="left:17.0px;top:32px;width:66px;height:1.5px;background:linear-gradient(90deg,#2a2418 0.0px 8.0px,transparent 8.0px 9.1px,#2a2418 9.1px 17.9px,transparent 17.9px 19.0px,#2a2418 19.0px 22.5px,transparent 22.5px 23.6px,#2a2418 23.6px 31.2px,transparent 31.2px 32.3px,#2a2418 32.3px 39.4px,transparent 39.4px 40.5px,#2a2418 40.5px 44.0px,transparent 44.0px 45.1px,#2a2418 45.1px 53.8px,transparent 53.8px 54.9px,#2a2418 54.9px 64.1px,transparent 64.1px 65.2px,#2a2418 65.2px 66.0px,transparent 66.0px 67.1px);opacity:.8"></div><div class="a" style="left:28.0px;top:35px;width:44px;height:1.5px;background:linear-gradient(90deg,#2a2418 0.0px 9.2px,transparent 9.2px 10.3px,#2a2418 10.3px 15.6px,transparent 15.6px 16.7px,#2a2418 16.7px 22.6px,transparent 22.6px 23.7px,#2a2418 23.7px 33.1px,transparent 33.1px 34.2px,#2a2418 34.2px 42.5px,transparent 42.5px 43.6px,#2a2418 43.6px 44.0px,transparent 44.0px 45.1px);opacity:.8"></div><div class="a" style="left:17.0px;top:41px;width:66px;height:1.5px;background:linear-gradient(90deg,#2a2418 0.0px 5.5px,transparent 5.5px 6.6px,#2a2418 6.6px 12.7px,transparent 12.7px 13.8px,#2a2418 13.8px 18.7px,transparent 18.7px 19.8px,#2a2418 19.8px 23.7px,transparent 23.7px 24.8px,#2a2418 24.8px 29.5px,transparent 29.5px 30.6px,#2a2418 30.6px 38.2px,transparent 38.2px 39.3px,#2a2418 39.3px 41.9px,transparent 41.9px 43.0px,#2a2418 43.0px 49.4px,transparent 49.4px 50.5px,#2a2418 50.5px 56.1px,transparent 56.1px 57.2px,#2a2418 57.2px 59.8px,transparent 59.8px 60.9px,#2a2418 60.9px 65.7px,transparent 65.7px 66.8px);opacity:.8"></div><div class="a" style="left:27.0px;top:44px;width:46px;height:1.5px;background:linear-gradient(90deg,#2a2418 0.0px 6.9px,transparent 6.9px 8.0px,#2a2418 8.0px 14.1px,transparent 14.1px 15.2px,#2a2418 15.2px 18.1px,transparent 18.1px 19.2px,#2a2418 19.2px 28.6px,transparent 28.6px 29.7px,#2a2418 29.7px 37.7px,transparent 37.7px 38.8px,#2a2418 38.8px 46.0px,transparent 46.0px 47.1px);opacity:.8"></div><div class="a" style="left:18.0px;top:50px;width:64px;height:1.5px;background:linear-gradient(90deg,#2a2418 0.0px 3.2px,transparent 3.2px 4.3px,#2a2418 4.3px 8.7px,transparent 8.7px 9.8px,#2a2418 9.8px 12.6px,transparent 12.6px 13.7px,#2a2418 13.7px 21.6px,transparent 21.6px 22.7px,#2a2418 22.7px 27.1px,transparent 27.1px 28.2px,#2a2418 28.2px 31.6px,transparent 31.6px 32.7px,#2a2418 32.7px 38.2px,transparent 38.2px 39.3px,#2a2418 39.3px 48.2px,transparent 48.2px 49.3px,#2a2418 49.3px 57.5px,transparent 57.5px 58.6px,#2a2418 58.6px 62.9px,transparent 62.9px 64.0px);opacity:.8"></div><div class="a" style="left:17.0px;top:53px;width:66px;height:1.5px;background:linear-gradient(90deg,#2a2418 0.0px 3.5px,transparent 3.5px 4.6px,#2a2418 4.6px 13.6px,transparent 13.6px 14.7px,#2a2418 14.7px 21.2px,transparent 21.2px 22.3px,#2a2418 22.3px 29.7px,transparent 29.7px 30.8px,#2a2418 30.8px 33.9px,transparent 33.9px 35.0px,#2a2418 35.0px 37.9px,transparent 37.9px 39.0px,#2a2418 39.0px 46.3px,transparent 46.3px 47.4px,#2a2418 47.4px 52.9px,transparent 52.9px 54.0px,#2a2418 54.0px 57.0px,transparent 57.0px 58.1px,#2a2418 58.1px 66.0px,transparent 66.0px 67.1px);opacity:.8"></div><div class="a" style="left:17.0px;top:57px;width:66px;height:1.5px;background:linear-gradient(90deg,#2a2418 0.0px 6.9px,transparent 6.9px 8.0px,#2a2418 8.0px 16.2px,transparent 16.2px 17.3px,#2a2418 17.3px 20.3px,transparent 20.3px 21.4px,#2a2418 21.4px 29.9px,transparent 29.9px 31.0px,#2a2418 31.0px 34.0px,transparent 34.0px 35.1px,#2a2418 35.1px 43.6px,transparent 43.6px 44.7px,#2a2418 44.7px 50.4px,transparent 50.4px 51.5px,#2a2418 51.5px 56.4px,transparent 56.4px 57.5px,#2a2418 57.5px 63.9px,transparent 63.9px 65.0px,#2a2418 65.0px 66.0px,transparent 66.0px 67.1px);opacity:.8"></div><div class="a" style="left:24.0px;top:61px;width:52px;height:1.5px;background:linear-gradient(90deg,#2a2418 0.0px 4.4px,transparent 4.4px 5.5px,#2a2418 5.5px 8.9px,transparent 8.9px 10.0px,#2a2418 10.0px 16.2px,transparent 16.2px 17.3px,#2a2418 17.3px 21.4px,transparent 21.4px 22.5px,#2a2418 22.5px 25.8px,transparent 25.8px 26.9px,#2a2418 26.9px 30.5px,transparent 30.5px 31.6px,#2a2418 31.6px 34.5px,transparent 34.5px 35.6px,#2a2418 35.6px 39.5px,transparent 39.5px 40.6px,#2a2418 40.6px 45.3px,transparent 45.3px 46.4px,#2a2418 46.4px 51.0px,transparent 51.0px 52.1px);opacity:.8"></div><div class="a" style="left:5px;top:72.5px;width:14.5px;height:14.5px;border-radius:50%;background:radial-gradient(circle,#8b8b5a 0 30%,#a0946a 45%,#6d5c46 62%,#8a7a5a 72%,#514038 80%,transparent 84%)"></div><div class="a" style="left:26px;top:76px;width:60px;height:1.9px;background:linear-gradient(90deg,#f5eef5 0.0px 7.8px,transparent 7.8px 8.9px,#f5eef5 8.9px 13.4px,transparent 13.4px 14.5px,#f5eef5 14.5px 20.5px,transparent 20.5px 21.6px,#f5eef5 21.6px 25.4px,transparent 25.4px 26.5px,#f5eef5 26.5px 31.4px,transparent 31.4px 32.5px,#f5eef5 32.5px 35.1px,transparent 35.1px 36.2px,#f5eef5 36.2px 40.5px,transparent 40.5px 41.6px,#f5eef5 41.6px 44.2px,transparent 44.2px 45.3px,#f5eef5 45.3px 52.9px,transparent 52.9px 54.0px,#f5eef5 54.0px 60.0px,transparent 60.0px 61.1px);opacity:.8"></div><div class="a" style="left:26px;top:80px;width:42px;height:1.9px;background:linear-gradient(90deg,#f5eef5 0.0px 3.8px,transparent 3.8px 4.9px,#f5eef5 4.9px 10.7px,transparent 10.7px 11.8px,#f5eef5 11.8px 20.9px,transparent 20.9px 22.0px,#f5eef5 22.0px 25.2px,transparent 25.2px 26.3px,#f5eef5 26.3px 34.6px,transparent 34.6px 35.7px,#f5eef5 35.7px 41.2px,transparent 41.2px 42.3px);opacity:.8"></div><div class="a" style="left:26px;top:84px;width:36px;height:1.9px;background:linear-gradient(90deg,#f5eef5 0.0px 6.0px,transparent 6.0px 7.1px,#f5eef5 7.1px 15.4px,transparent 15.4px 16.5px,#f5eef5 16.5px 21.8px,transparent 21.8px 22.9px,#f5eef5 22.9px 28.9px,transparent 28.9px 30.0px,#f5eef5 30.0px 36.0px,transparent 36.0px 37.1px);opacity:.8"></div><div class="a" style="left:60px;top:75.8px;width:6px;height:2.8px;background:#9acb3a"></div><div class="a" style="left:4px;top:88.5px;width:8px;height:2.5px;background:#f4f4f4"></div></div><div class="a" style="left:535.1px;top:154.3px;width:1.1px;height:6.4px;background:#454545"></div><div class="a" style="left:535.1px;top:256.2px;width:1.1px;height:6.4px;background:#454545"></div><div class="a" style="left:627.6px;top:154.3px;width:1.1px;height:6.4px;background:#454545"></div><div class="a" style="left:627.6px;top:256.2px;width:1.1px;height:6.4px;background:#454545"></div><div class="a" style="left:526.9px;top:162.1px;width:6.6px;height:1.1px;background:#454545"></div><div class="a" style="left:631.1px;top:162.1px;width:6.3px;height:1.1px;background:#454545"></div><div class="a" style="left:526.9px;top:253.3px;width:6.6px;height:1.1px;background:#454545"></div><div class="a" style="left:631.1px;top:253.3px;width:6.3px;height:1.1px;background:#454545"></div><div class="a" style="left:579.25px;top:154.65px;width:5.5px;height:5.5px;border-radius:45%;transform:rotate(45deg);background:radial-gradient(circle,#c4c4c4 0 0.75px,#222 1.35px)"></div><div class="a" style="left:526.85px;top:205.95px;width:5.5px;height:5.5px;border-radius:45%;transform:rotate(45deg);background:radial-gradient(circle,#c4c4c4 0 0.75px,#222 1.35px)"></div><div class="a" style="left:631.45px;top:205.95px;width:5.5px;height:5.5px;border-radius:45%;transform:rotate(45deg);background:radial-gradient(circle,#c4c4c4 0 0.75px,#222 1.35px)"></div><div class="a" style="left:579.25px;top:256.85px;width:5.5px;height:5.5px;border-radius:45%;transform:rotate(45deg);background:radial-gradient(circle,#c4c4c4 0 0.75px,#222 1.35px)"></div><div class="t" style="left:561.9px;top:268.6px;width:40px;text-align:center;font-size:9.8px;color:#707070">4</div>
<div class="a" style="left:677.8px;top:154px;width:111px;height:109px;background:#ffffff;border:1px solid #d5d5d5"></div><div class="a" style="left:683.8px;top:160px;width:99px;height:98px;overflow:hidden"><div class="a" style="left:0px;top:0px;width:98.5px;height:98px;background:#e7dfc4"></div><div class="a" style="left:6px;top:7px;width:84px;height:82px;background:#c9c6b4;border-radius:5px;border:1.1px solid #9d9a8c"></div><div class="a" style="left:90.5px;top:25px;width:1.3px;height:55px;background:repeating-linear-gradient(#8a8677 0 5px,transparent 5px 9px)"></div><div class="a" style="left:9.5px;top:11.5px;width:78px;height:38.5px;background:linear-gradient(#dbe2cf,#b8c3ab 60%,#9aa88d)"></div><svg class="a" style="left:45px;top:17px" width="38" height="30" viewBox="0 0 38 30"><path d="M2 12 L22 2 L36 13 L16 24z" fill="#b8603a" stroke="#6a2a14" stroke-width="0.6"/><path d="M2 12 L16 24 L16 28 L2 16z" fill="#8a3a1e"/><path d="M16 24 L36 13 L36 17 L16 28z" fill="#efe6cf" stroke="#9a8a6a" stroke-width="0.4"/><path d="M6 12 L22 4 L32 12 L16 20z" fill="#c9764a" opacity=".6"/></svg><div class="a" style="left:16px;top:27.5px;width:35px;height:17.5px;background:#e6e1cf;border:0.5px solid #a5a08f"></div><div class="a" style="left:21px;top:31px;width:22px;height:1.3px;background:linear-gradient(90deg,#333 0.0px 9.4px,transparent 9.4px 10.5px,#333 10.5px 15.4px,transparent 15.4px 16.5px,#333 16.5px 22.0px,transparent 22.0px 23.1px);opacity:.8"></div><div class="a" style="left:21px;top:34px;width:25px;height:1.3px;background:linear-gradient(90deg,#333 0.0px 7.4px,transparent 7.4px 8.5px,#333 8.5px 15.5px,transparent 15.5px 16.6px,#333 16.6px 21.9px,transparent 21.9px 23.0px,#333 23.0px 25.0px,transparent 25.0px 26.1px);opacity:.8"></div><div class="a" style="left:21px;top:38px;width:25px;height:1.3px;background:linear-gradient(90deg,#333 0.0px 2.9px,transparent 2.9px 4.0px,#333 4.0px 7.4px,transparent 7.4px 8.5px,#333 8.5px 11.5px,transparent 11.5px 12.6px,#333 12.6px 20.3px,transparent 20.3px 21.4px,#333 21.4px 25.0px,transparent 25.0px 26.1px);opacity:.8"></div><div class="a" style="left:21px;top:41px;width:20px;height:1.3px;background:linear-gradient(90deg,#333 0.0px 3.6px,transparent 3.6px 4.7px,#333 4.7px 7.8px,transparent 7.8px 8.9px,#333 8.9px 17.3px,transparent 17.3px 18.4px,#333 18.4px 20.0px,transparent 20.0px 21.1px);opacity:.8"></div><div class="a" style="left:22px;top:7px;width:36px;height:9px;background:linear-gradient(#f4f4ee,#d6d6ce 55%,#9a9a92);border-radius:1.5px;border:0.5px solid #6a6a62"></div><div class="a" style="left:19.5px;top:11.05px;width:3.5px;height:6.3px;background:#7a7a72;border-radius:1px"></div><div class="a" style="left:57px;top:11.05px;width:3.5px;height:6.3px;background:#7a7a72;border-radius:1px"></div><div class="t" style="left:22px;top:8.9px;width:36px;text-align:center;font-family:Liberation Sans;font-weight:bold;font-size:5.2px;letter-spacing:-0.25px;color:#1a1a1a">Book of Lore</div><div class="a" style="left:9.5px;top:50px;width:78px;height:5px;background:repeating-linear-gradient(90deg,#5a5a5a 0 1px,#f5f1e2 1px 3.6px)"></div><div class="a" style="left:9.5px;top:55px;width:78px;height:8px;background:#eceada"></div><div class="a" style="left:11px;top:63px;width:75.5px;height:23.5px;background:#fbfbfb"></div><div class="a" style="left:13px;top:66px;width:66px;height:1.6px;background:linear-gradient(90deg,#1f1f1f 0.0px 7.2px,transparent 7.2px 8.3px,#1f1f1f 8.3px 12.8px,transparent 12.8px 13.9px,#1f1f1f 13.9px 18.1px,transparent 18.1px 19.2px,#1f1f1f 19.2px 23.7px,transparent 23.7px 24.8px,#1f1f1f 24.8px 30.5px,transparent 30.5px 31.6px,#1f1f1f 31.6px 35.2px,transparent 35.2px 36.3px,#1f1f1f 36.3px 42.0px,transparent 42.0px 43.1px,#1f1f1f 43.1px 47.4px,transparent 47.4px 48.5px,#1f1f1f 48.5px 57.7px,transparent 57.7px 58.8px,#1f1f1f 58.8px 66.0px,transparent 66.0px 67.1px);opacity:.8"></div><div class="a" style="left:13px;top:71px;width:70px;height:1.6px;background:linear-gradient(90deg,#1f1f1f 0.0px 6.3px,transparent 6.3px 7.4px,#1f1f1f 7.4px 11.6px,transparent 11.6px 12.7px,#1f1f1f 12.7px 22.0px,transparent 22.0px 23.1px,#1f1f1f 23.1px 27.8px,transparent 27.8px 28.9px,#1f1f1f 28.9px 33.9px,transparent 33.9px 35.0px,#1f1f1f 35.0px 37.5px,transparent 37.5px 38.6px,#1f1f1f 38.6px 43.7px,transparent 43.7px 44.8px,#1f1f1f 44.8px 50.7px,transparent 50.7px 51.8px,#1f1f1f 51.8px 57.8px,transparent 57.8px 58.9px,#1f1f1f 58.9px 62.8px,transparent 62.8px 63.9px,#1f1f1f 63.9px 69.9px,transparent 69.9px 71.0px);opacity:.8"></div><div class="a" style="left:13px;top:76px;width:52px;height:1.6px;background:linear-gradient(90deg,#1f1f1f 0.0px 2.5px,transparent 2.5px 3.6px,#1f1f1f 3.6px 8.0px,transparent 8.0px 9.1px,#1f1f1f 9.1px 12.2px,transparent 12.2px 13.3px,#1f1f1f 13.3px 18.6px,transparent 18.6px 19.7px,#1f1f1f 19.7px 22.5px,transparent 22.5px 23.6px,#1f1f1f 23.6px 26.3px,transparent 26.3px 27.4px,#1f1f1f 27.4px 32.0px,transparent 32.0px 33.1px,#1f1f1f 33.1px 37.2px,transparent 37.2px 38.3px,#1f1f1f 38.3px 44.9px,transparent 44.9px 46.0px,#1f1f1f 46.0px 52.0px,transparent 52.0px 53.1px);opacity:.8"></div><div class="a" style="left:13px;top:80px;width:62px;height:1.6px;background:linear-gradient(90deg,#1f1f1f 0.0px 7.8px,transparent 7.8px 8.9px,#1f1f1f 8.9px 16.0px,transparent 16.0px 17.1px,#1f1f1f 17.1px 24.6px,transparent 24.6px 25.7px,#1f1f1f 25.7px 34.3px,transparent 34.3px 35.4px,#1f1f1f 35.4px 40.6px,transparent 40.6px 41.7px,#1f1f1f 41.7px 46.5px,transparent 46.5px 47.6px,#1f1f1f 47.6px 57.0px,transparent 57.0px 58.1px,#1f1f1f 58.1px 61.7px,transparent 61.7px 62.8px);opacity:.8"></div><div class="a" style="left:22px;top:65.5px;width:10px;height:4px;background:#2a6f9e"></div><div class="a" style="left:67px;top:69px;width:8px;height:5px;background:#2a6f9e"></div><div class="a" style="left:61px;top:79px;width:7px;height:4px;background:#2a6f9e"></div><div class="a" style="left:13px;top:56px;width:9px;height:6px;background:#eee;border:0.6px solid #666"></div><div class="a" style="left:23px;top:56px;width:9px;height:6px;background:linear-gradient(90deg,#6cb2d8,#e0b040)"></div><div class="a" style="left:1.5px;top:0.5px;width:20px;height:20px;border-radius:50%;background:radial-gradient(circle,#f7f4ee 0 50%,#cfcac4 60%,#eeeeee 68%,#bdbdbd 74%,rgba(240,240,240,.9) 80%,transparent 84%)"></div><div class="a" style="left:8.7px;top:8.1px;width:6.0px;height:4.0px;border-radius:50% 40% 50% 40%;background:#a0522d;opacity:.75"></div></div><div class="a" style="left:686.3px;top:154.3px;width:1.1px;height:6.4px;background:#454545"></div><div class="a" style="left:686.3px;top:256.2px;width:1.1px;height:6.4px;background:#454545"></div><div class="a" style="left:778.8px;top:154.3px;width:1.1px;height:6.4px;background:#454545"></div><div class="a" style="left:778.8px;top:256.2px;width:1.1px;height:6.4px;background:#454545"></div><div class="a" style="left:678.1px;top:162.1px;width:6.6px;height:1.1px;background:#454545"></div><div class="a" style="left:782.3px;top:162.1px;width:6.3px;height:1.1px;background:#454545"></div><div class="a" style="left:678.1px;top:253.3px;width:6.6px;height:1.1px;background:#454545"></div><div class="a" style="left:782.3px;top:253.3px;width:6.3px;height:1.1px;background:#454545"></div><div class="a" style="left:730.45px;top:154.65px;width:5.5px;height:5.5px;border-radius:45%;transform:rotate(45deg);background:radial-gradient(circle,#c4c4c4 0 0.75px,#222 1.35px)"></div><div class="a" style="left:678.05px;top:205.95px;width:5.5px;height:5.5px;border-radius:45%;transform:rotate(45deg);background:radial-gradient(circle,#c4c4c4 0 0.75px,#222 1.35px)"></div><div class="a" style="left:782.65px;top:205.95px;width:5.5px;height:5.5px;border-radius:45%;transform:rotate(45deg);background:radial-gradient(circle,#c4c4c4 0 0.75px,#222 1.35px)"></div><div class="a" style="left:730.45px;top:256.85px;width:5.5px;height:5.5px;border-radius:45%;transform:rotate(45deg);background:radial-gradient(circle,#c4c4c4 0 0.75px,#222 1.35px)"></div><div class="t" style="left:713.1px;top:268.6px;width:40px;text-align:center;font-size:9.8px;color:#707070">5</div>
<div class="a" style="left:829.0px;top:154px;width:111px;height:109px;background:#ffffff;border:1px solid #d5d5d5"></div><div class="a" style="left:835.0px;top:160px;width:99px;height:98px;overflow:hidden"><div class="a" style="left:0px;top:0px;width:99px;height:98px;background:linear-gradient(90deg,#74492b,#8d613d 30%,#845836 60%,#6e462a);"></div><div class="a" style="left:0px;top:0px;width:99px;height:98px;background:repeating-linear-gradient(90deg,rgba(0,0,0,.06) 0 2px,transparent 2px 5px)"></div><div class="a" style="left:20px;top:27.5px;width:60px;height:43px;background:radial-gradient(ellipse,#eeeadc,#d8d3c0 75%,#a9a28c);border:0.6px solid #5a4a36"></div><div class="a" style="left:26px;top:32px;width:48px;height:1.4px;background:linear-gradient(90deg,#222 0.0px 7.6px,transparent 7.6px 8.7px,#222 8.7px 15.7px,transparent 15.7px 16.8px,#222 16.8px 19.6px,transparent 19.6px 20.7px,#222 20.7px 29.0px,transparent 29.0px 30.1px,#222 30.1px 38.9px,transparent 38.9px 40.0px,#222 40.0px 46.9px,transparent 46.9px 48.0px,#222 48.0px 48.0px,transparent 48.0px 49.1px);opacity:.8"></div><div class="a" style="left:26px;top:35px;width:48px;height:1.4px;background:linear-gradient(90deg,#222 0.0px 8.2px,transparent 8.2px 9.3px,#222 9.3px 12.8px,transparent 12.8px 13.9px,#222 13.9px 20.0px,transparent 20.0px 21.1px,#222 21.1px 27.2px,transparent 27.2px 28.3px,#222 28.3px 36.6px,transparent 36.6px 37.7px,#222 37.7px 45.8px,transparent 45.8px 46.9px,#222 46.9px 48.0px,transparent 48.0px 49.1px);opacity:.8"></div><div class="a" style="left:26px;top:39px;width:40px;height:1.4px;background:linear-gradient(90deg,#222 0.0px 6.6px,transparent 6.6px 7.7px,#222 7.7px 16.4px,transparent 16.4px 17.5px,#222 17.5px 24.8px,transparent 24.8px 25.9px,#222 25.9px 33.3px,transparent 33.3px 34.4px,#222 34.4px 38.5px,transparent 38.5px 39.6px,#222 39.6px 40.0px,transparent 40.0px 41.1px);opacity:.8"></div><div class="a" style="left:26px;top:43px;width:48px;height:1.4px;background:linear-gradient(90deg,#222 0.0px 3.4px,transparent 3.4px 4.5px,#222 4.5px 9.6px,transparent 9.6px 10.7px,#222 10.7px 13.9px,transparent 13.9px 15.0px,#222 15.0px 23.3px,transparent 23.3px 24.4px,#222 24.4px 30.9px,transparent 30.9px 32.0px,#222 32.0px 38.8px,transparent 38.8px 39.9px,#222 39.9px 46.8px,transparent 46.8px 47.9px,#222 47.9px 48.0px,transparent 48.0px 49.1px);opacity:.8"></div><div class="a" style="left:26px;top:47px;width:48px;height:1.4px;background:linear-gradient(90deg,#222 0.0px 5.9px,transparent 5.9px 7.0px,#222 7.0px 9.5px,transparent 9.5px 10.6px,#222 10.6px 18.7px,transparent 18.7px 19.8px,#222 19.8px 27.6px,transparent 27.6px 28.7px,#222 28.7px 34.7px,transparent 34.7px 35.8px,#222 35.8px 42.0px,transparent 42.0px 43.1px,#222 43.1px 48.0px,transparent 48.0px 49.1px);opacity:.8"></div><div class="a" style="left:26px;top:50px;width:48px;height:1.4px;background:linear-gradient(90deg,#222 0.0px 3.0px,transparent 3.0px 4.1px,#222 4.1px 11.7px,transparent 11.7px 12.8px,#222 12.8px 17.1px,transparent 17.1px 18.2px,#222 18.2px 21.2px,transparent 21.2px 22.3px,#222 22.3px 26.7px,transparent 26.7px 27.8px,#222 27.8px 35.4px,transparent 35.4px 36.5px,#222 36.5px 40.4px,transparent 40.4px 41.5px,#222 41.5px 48.0px,transparent 48.0px 49.1px);opacity:.8"></div><div class="a" style="left:26px;top:54px;width:48px;height:1.4px;background:linear-gradient(90deg,#222 0.0px 9.3px,transparent 9.3px 10.4px,#222 10.4px 16.4px,transparent 16.4px 17.5px,#222 17.5px 22.7px,transparent 22.7px 23.8px,#222 23.8px 29.6px,transparent 29.6px 30.7px,#222 30.7px 38.0px,transparent 38.0px 39.1px,#222 39.1px 47.0px,transparent 47.0px 48.1px);opacity:.8"></div><div class="a" style="left:26px;top:58px;width:48px;height:1.4px;background:linear-gradient(90deg,#222 0.0px 6.8px,transparent 6.8px 7.9px,#222 7.9px 14.9px,transparent 14.9px 16.0px,#222 16.0px 19.1px,transparent 19.1px 20.2px,#222 20.2px 23.7px,transparent 23.7px 24.8px,#222 24.8px 29.1px,transparent 29.1px 30.2px,#222 30.2px 37.9px,transparent 37.9px 39.0px,#222 39.0px 43.6px,transparent 43.6px 44.7px,#222 44.7px 48.0px,transparent 48.0px 49.1px);opacity:.8"></div><div class="a" style="left:26px;top:62px;width:48px;height:1.4px;background:linear-gradient(90deg,#222 0.0px 2.6px,transparent 2.6px 3.7px,#222 3.7px 6.6px,transparent 6.6px 7.7px,#222 7.7px 12.1px,transparent 12.1px 13.2px,#222 13.2px 20.4px,transparent 20.4px 21.5px,#222 21.5px 28.8px,transparent 28.8px 29.9px,#222 29.9px 37.2px,transparent 37.2px 38.3px,#222 38.3px 42.8px,transparent 42.8px 43.9px,#222 43.9px 48.0px,transparent 48.0px 49.1px);opacity:.8"></div><div class="a" style="left:26px;top:66px;width:40px;height:1.4px;background:linear-gradient(90deg,#222 0.0px 5.8px,transparent 5.8px 6.9px,#222 6.9px 12.6px,transparent 12.6px 13.7px,#222 13.7px 17.0px,transparent 17.0px 18.1px,#222 18.1px 26.9px,transparent 26.9px 28.0px,#222 28.0px 31.9px,transparent 31.9px 33.0px,#222 33.0px 40.0px,transparent 40.0px 41.1px);opacity:.8"></div><div class="a" style="left:30px;top:8px;width:38px;height:10px;background:linear-gradient(#f4f4ee,#d6d6ce 55%,#9a9a92);border-radius:1.5px;border:0.5px solid #6a6a62"></div><div class="a" style="left:27.5px;top:12.5px;width:3.5px;height:7.0px;background:#7a7a72;border-radius:1px"></div><div class="a" style="left:67px;top:12.5px;width:3.5px;height:7.0px;background:#7a7a72;border-radius:1px"></div><div class="t" style="left:30px;top:10.3px;width:38px;text-align:center;font-family:Liberation Sans;font-weight:bold;font-size:5.4px;letter-spacing:-0.25px;color:#1a1a1a">Book of Lore</div><div class="a" style="left:7.5px;top:7px;width:11px;height:11px;background:linear-gradient(135deg,#7b7fe0,#2b2f8e);transform:skewY(-12deg);border:0.8px solid #ddd"></div><div class="a" style="left:5.5px;top:74px;width:14px;height:13px;border-radius:50%;background:radial-gradient(circle,#c6b67a 0 35%,#9d8a55 60%,#5d4a30)"></div><div class="a" style="left:5.5px;top:89px;width:8px;height:3px;background:#f4f4f4"></div></div><div class="a" style="left:837.5px;top:154.3px;width:1.1px;height:6.4px;background:#454545"></div><div class="a" style="left:837.5px;top:256.2px;width:1.1px;height:6.4px;background:#454545"></div><div class="a" style="left:930.0px;top:154.3px;width:1.1px;height:6.4px;background:#454545"></div><div class="a" style="left:930.0px;top:256.2px;width:1.1px;height:6.4px;background:#454545"></div><div class="a" style="left:829.3px;top:162.1px;width:6.6px;height:1.1px;background:#454545"></div><div class="a" style="left:933.5px;top:162.1px;width:6.3px;height:1.1px;background:#454545"></div><div class="a" style="left:829.3px;top:253.3px;width:6.6px;height:1.1px;background:#454545"></div><div class="a" style="left:933.5px;top:253.3px;width:6.3px;height:1.1px;background:#454545"></div><div class="a" style="left:881.65px;top:154.65px;width:5.5px;height:5.5px;border-radius:45%;transform:rotate(45deg);background:radial-gradient(circle,#c4c4c4 0 0.75px,#222 1.35px)"></div><div class="a" style="left:829.25px;top:205.95px;width:5.5px;height:5.5px;border-radius:45%;transform:rotate(45deg);background:radial-gradient(circle,#c4c4c4 0 0.75px,#222 1.35px)"></div><div class="a" style="left:933.85px;top:205.95px;width:5.5px;height:5.5px;border-radius:45%;transform:rotate(45deg);background:radial-gradient(circle,#c4c4c4 0 0.75px,#222 1.35px)"></div><div class="a" style="left:881.65px;top:256.85px;width:5.5px;height:5.5px;border-radius:45%;transform:rotate(45deg);background:radial-gradient(circle,#c4c4c4 0 0.75px,#222 1.35px)"></div><div class="t" style="left:864.3px;top:268.6px;width:40px;text-align:center;font-size:9.8px;color:#707070">6</div>
<div class="a" style="left:73.0px;top:305px;width:111px;height:109px;background:#ffffff;border:1px solid #d5d5d5"></div><div class="a" style="left:79.0px;top:311px;width:99px;height:98px;overflow:hidden"><div class="a" style="left:0px;top:0px;width:98.5px;height:97px;background:radial-gradient(ellipse 75% 75% at 50% 48%,#969c50 0%,#8a9145 45%,#7b843a 100%)"></div><div class="a" style="left:0px;top:0px;width:98.5px;height:97px;background:repeating-linear-gradient(rgba(255,255,240,.04) 0 1px,transparent 1px 2.5px)"></div><svg class="a" style="left:0;top:0" width="99" height="98" viewBox="0 0 99 98"><defs><radialGradient id="gb010" cx="0.5" cy="0.45" r="0.6"><stop offset="0" stop-color="#f4c446"/><stop offset="0.45" stop-color="#dc9a30"/><stop offset="0.8" stop-color="#a65c20"/><stop offset="1" stop-color="#5a3012"/></radialGradient><radialGradient id="gy010" cx="0.5" cy="0.45" r="0.65"><stop offset="0" stop-color="#fff4a0"/><stop offset="0.45" stop-color="#f3d23a"/><stop offset="1" stop-color="#c98a1e"/></radialGradient></defs><circle cx="48.5" cy="50" r="33" fill="#7a843b" stroke="#c3c88c" stroke-width="0.9"/><circle cx="48.5" cy="50" r="27.5" fill="#687232"/><circle cx="48.5" cy="50" r="29" fill="none" stroke="#9aa262" stroke-width="0.6" opacity=".7"/><circle cx="49.5" cy="49.8" r="24.6" fill="url(#gb010)"/><path d="M53 31 C60 29 67 33 71 40 C74 47 73 56 69 62 C66 66 63 68 61 68 C61 63 59 60 56 57 C53 55 52 51 53 47 C54 43 51 41 51 37 C50 34 51 32 53 31z" fill="url(#gy010)"/><path d="M38 30 C42 28 47 28 50 30 C48 33 45 34 42 36 C39 37 36 35 38 30z" fill="#f2cc40" opacity=".85"/><path d="M30 45 C33 40 38 40 40 44 C41 49 37 53 33 52 C30 51 29 48 30 45z" fill="#e8b038" opacity=".7"/><path d="M36 58 C40 56 46 58 48 63 C46 67 40 68 36 65 C34 63 34 60 36 58z" fill="#d89a30" opacity=".6"/><path d="M53 31 C50 34 51 38 53 42 C55 46 52 50 55 55 C58 59 61 62 60 69" fill="none" stroke="#4a220c" stroke-width="1.3"/><path d="M28 52 C32 56 30 62 35 66" fill="none" stroke="#6a3414" stroke-width="0.8" opacity=".5"/><path d="M42 38 C46 42 44 48 47 52" fill="none" stroke="#7a3a14" stroke-width="0.7" opacity=".45"/></svg><svg class="a" style="left:34px;top:10.5px" width="31" height="16" viewBox="0 0 31 16"><path d="M4 1h23l3 3.5v7l-3 3.5h-23l-3-3.5v-7z" fill="#2a3690" stroke="#d9dcf0" stroke-width="1"/><path d="M5 2.5h21l2 2.5v2h-25v-2z" fill="#4a58b8" opacity=".6"/></svg><div class="t" style="left:34px;top:13.3px;width:31px;text-align:center;font-family:Liberation Serif;font-weight:bold;font-size:10.5px;color:#fff">010</div><div class="a" style="left:5px;top:72.5px;width:14px;height:13px;border-radius:50%;border:1px solid #cdd08e;background:radial-gradient(circle,#b4b86c,#8f9642)"></div><div class="a" style="left:5.5px;top:88px;width:7px;height:2.6px;background:#f0f2e4;border-radius:1px"></div></div><div class="a" style="left:81.5px;top:305.3px;width:1.1px;height:6.4px;background:#454545"></div><div class="a" style="left:81.5px;top:407.2px;width:1.1px;height:6.4px;background:#454545"></div><div class="a" style="left:174.0px;top:305.3px;width:1.1px;height:6.4px;background:#454545"></div><div class="a" style="left:174.0px;top:407.2px;width:1.1px;height:6.4px;background:#454545"></div><div class="a" style="left:73.3px;top:313.1px;width:6.6px;height:1.1px;background:#454545"></div><div class="a" style="left:177.5px;top:313.1px;width:6.3px;height:1.1px;background:#454545"></div><div class="a" style="left:73.3px;top:404.3px;width:6.6px;height:1.1px;background:#454545"></div><div class="a" style="left:177.5px;top:404.3px;width:6.3px;height:1.1px;background:#454545"></div><div class="a" style="left:125.65px;top:305.65px;width:5.5px;height:5.5px;border-radius:45%;transform:rotate(45deg);background:radial-gradient(circle,#c4c4c4 0 0.75px,#222 1.35px)"></div><div class="a" style="left:73.25px;top:356.95px;width:5.5px;height:5.5px;border-radius:45%;transform:rotate(45deg);background:radial-gradient(circle,#c4c4c4 0 0.75px,#222 1.35px)"></div><div class="a" style="left:177.85px;top:356.95px;width:5.5px;height:5.5px;border-radius:45%;transform:rotate(45deg);background:radial-gradient(circle,#c4c4c4 0 0.75px,#222 1.35px)"></div><div class="a" style="left:125.65px;top:407.85px;width:5.5px;height:5.5px;border-radius:45%;transform:rotate(45deg);background:radial-gradient(circle,#c4c4c4 0 0.75px,#222 1.35px)"></div><div class="t" style="left:108.3px;top:419.6px;width:40px;text-align:center;font-size:9.8px;color:#707070">8</div>
<div class="a" style="left:224.2px;top:305px;width:111px;height:109px;background:#ffffff;border:1px solid #d5d5d5"></div><div class="a" style="left:230.2px;top:311px;width:99px;height:98px;overflow:hidden"><div class="a" style="left:0px;top:0px;width:98.5px;height:97px;background:#ebe5cf"></div><div class="a" style="left:5px;top:5px;width:88px;height:83px;background:#dedac8;border-radius:3px;border:0.6px solid #c9c3ad"></div><div class="a" style="left:8.5px;top:7.5px;width:82px;height:80px;background:#a9ad9c;border-radius:2px;border:0.8px solid #9a9a8c"></div><div class="a" style="left:10px;top:10px;width:79px;height:50px;background:linear-gradient(#cbcfbd,#b5bda6 55%,#a3ae96)"></div><div class="a" style="left:10px;top:48px;width:79px;height:14px;background:linear-gradient(#b6c2ad,#9fb09d)"></div><div class="a" style="left:62px;top:8.5px;width:28px;height:33px;background:#e8e2d2;border:0.6px solid #8f8a7a"></div><div class="a" style="left:69px;top:15px;width:15px;height:20px;background:radial-gradient(ellipse,#666 0 20%,#aaa 40%,transparent 62%)"></div><div class="a" style="left:16px;top:22.5px;width:49px;height:27px;background:radial-gradient(ellipse,#ecead9,#d5d1bd 80%);border:0.5px solid #a8a38e"></div><div class="a" style="left:22px;top:26px;width:36px;height:1.2px;background:linear-gradient(90deg,#303030 0.0px 9.1px,transparent 9.1px 10.2px,#303030 10.2px 12.8px,transparent 12.8px 13.9px,#303030 13.9px 19.6px,transparent 19.6px 20.7px,#303030 20.7px 28.9px,transparent 28.9px 30.0px,#303030 30.0px 36.0px,transparent 36.0px 37.1px);opacity:.8"></div><div class="a" style="left:22px;top:30px;width:37px;height:1.2px;background:linear-gradient(90deg,#303030 0.0px 5.6px,transparent 5.6px 6.7px,#303030 6.7px 11.1px,transparent 11.1px 12.2px,#303030 12.2px 16.2px,transparent 16.2px 17.3px,#303030 17.3px 26.4px,transparent 26.4px 27.5px,#303030 27.5px 31.5px,transparent 31.5px 32.6px,#303030 32.6px 37.0px,transparent 37.0px 38.1px);opacity:.8"></div><div class="a" style="left:22px;top:34px;width:37px;height:1.2px;background:linear-gradient(90deg,#303030 0.0px 3.5px,transparent 3.5px 4.6px,#303030 4.6px 10.8px,transparent 10.8px 11.9px,#303030 11.9px 21.0px,transparent 21.0px 22.1px,#303030 22.1px 25.6px,transparent 25.6px 26.7px,#303030 26.7px 34.9px,transparent 34.9px 36.0px,#303030 36.0px 37.0px,transparent 37.0px 38.1px);opacity:.8"></div><div class="a" style="left:22px;top:38px;width:37px;height:1.2px;background:linear-gradient(90deg,#303030 0.0px 8.7px,transparent 8.7px 9.8px,#303030 9.8px 17.2px,transparent 17.2px 18.3px,#303030 18.3px 22.5px,transparent 22.5px 23.6px,#303030 23.6px 32.3px,transparent 32.3px 33.4px,#303030 33.4px 37.0px,transparent 37.0px 38.1px);opacity:.8"></div><div class="a" style="left:22px;top:42px;width:37px;height:1.2px;background:linear-gradient(90deg,#303030 0.0px 2.7px,transparent 2.7px 3.8px,#303030 3.8px 6.3px,transparent 6.3px 7.4px,#303030 7.4px 13.3px,transparent 13.3px 14.4px,#303030 14.4px 20.1px,transparent 20.1px 21.2px,#303030 21.2px 25.8px,transparent 25.8px 26.9px,#303030 26.9px 30.4px,transparent 30.4px 31.5px,#303030 31.5px 36.4px,transparent 36.4px 37.5px);opacity:.8"></div><div class="a" style="left:22px;top:46px;width:25px;height:1.2px;background:linear-gradient(90deg,#303030 0.0px 4.7px,transparent 4.7px 5.8px,#303030 5.8px 14.2px,transparent 14.2px 15.3px,#303030 15.3px 17.8px,transparent 17.8px 18.9px,#303030 18.9px 25.0px,transparent 25.0px 26.1px);opacity:.8"></div><div class="a" style="left:29px;top:6.5px;width:35px;height:9px;background:linear-gradient(#f4f4ee,#d6d6ce 55%,#9a9a92);border-radius:1.5px;border:0.5px solid #6a6a62"></div><div class="a" style="left:26.5px;top:10.55px;width:3.5px;height:6.3px;background:#7a7a72;border-radius:1px"></div><div class="a" style="left:63px;top:10.55px;width:3.5px;height:6.3px;background:#7a7a72;border-radius:1px"></div><div class="t" style="left:29px;top:8.3px;width:35px;text-align:center;font-family:Liberation Sans;font-weight:bold;font-size:5.4px;letter-spacing:-0.25px;color:#1a1a1a">Dormido 1/2</div><div class="a" style="left:13px;top:62.5px;width:69px;height:22px;background:#fdfdfd;border:0.5px solid #d0d0d0"></div><div class="a" style="left:15px;top:65px;width:62px;height:1.35px;background:linear-gradient(90deg,#1c1c1c 0.0px 8.4px,transparent 8.4px 9.5px,#1c1c1c 9.5px 12.8px,transparent 12.8px 13.9px,#1c1c1c 13.9px 22.9px,transparent 22.9px 24.0px,#1c1c1c 24.0px 31.5px,transparent 31.5px 32.6px,#1c1c1c 32.6px 41.4px,transparent 41.4px 42.5px,#1c1c1c 42.5px 47.0px,transparent 47.0px 48.1px,#1c1c1c 48.1px 53.2px,transparent 53.2px 54.3px,#1c1c1c 54.3px 59.6px,transparent 59.6px 60.7px,#1c1c1c 60.7px 62.0px,transparent 62.0px 63.1px);opacity:.8"></div><div class="a" style="left:15px;top:69px;width:62px;height:1.35px;background:linear-gradient(90deg,#1c1c1c 0.0px 6.6px,transparent 6.6px 7.7px,#1c1c1c 7.7px 12.7px,transparent 12.7px 13.8px,#1c1c1c 13.8px 19.3px,transparent 19.3px 20.4px,#1c1c1c 20.4px 24.9px,transparent 24.9px 26.0px,#1c1c1c 26.0px 28.8px,transparent 28.8px 29.9px,#1c1c1c 29.9px 33.1px,transparent 33.1px 34.2px,#1c1c1c 34.2px 42.6px,transparent 42.6px 43.7px,#1c1c1c 43.7px 48.2px,transparent 48.2px 49.3px,#1c1c1c 49.3px 58.3px,transparent 58.3px 59.4px,#1c1c1c 59.4px 62.0px,transparent 62.0px 63.1px);opacity:.8"></div><div class="a" style="left:15px;top:74px;width:64px;height:1.35px;background:linear-gradient(90deg,#1c1c1c 0.0px 4.4px,transparent 4.4px 5.5px,#1c1c1c 5.5px 11.5px,transparent 11.5px 12.6px,#1c1c1c 12.6px 16.5px,transparent 16.5px 17.6px,#1c1c1c 17.6px 22.7px,transparent 22.7px 23.8px,#1c1c1c 23.8px 33.0px,transparent 33.0px 34.1px,#1c1c1c 34.1px 42.8px,transparent 42.8px 43.9px,#1c1c1c 43.9px 52.0px,transparent 52.0px 53.1px,#1c1c1c 53.1px 60.1px,transparent 60.1px 61.2px,#1c1c1c 61.2px 64.0px,transparent 64.0px 65.1px);opacity:.8"></div><div class="a" style="left:15px;top:78px;width:62px;height:1.35px;background:linear-gradient(90deg,#1c1c1c 0.0px 9.1px,transparent 9.1px 10.2px,#1c1c1c 10.2px 16.5px,transparent 16.5px 17.6px,#1c1c1c 17.6px 25.2px,transparent 25.2px 26.3px,#1c1c1c 26.3px 29.1px,transparent 29.1px 30.2px,#1c1c1c 30.2px 37.8px,transparent 37.8px 38.9px,#1c1c1c 38.9px 44.6px,transparent 44.6px 45.7px,#1c1c1c 45.7px 53.5px,transparent 53.5px 54.6px,#1c1c1c 54.6px 61.6px,transparent 61.6px 62.7px);opacity:.8"></div><div class="a" style="left:15px;top:82px;width:58px;height:1.35px;background:linear-gradient(90deg,#1c1c1c 0.0px 4.5px,transparent 4.5px 5.6px,#1c1c1c 5.6px 8.4px,transparent 8.4px 9.5px,#1c1c1c 9.5px 18.5px,transparent 18.5px 19.6px,#1c1c1c 19.6px 23.0px,transparent 23.0px 24.1px,#1c1c1c 24.1px 29.9px,transparent 29.9px 31.0px,#1c1c1c 31.0px 35.9px,transparent 35.9px 37.0px,#1c1c1c 37.0px 41.6px,transparent 41.6px 42.7px,#1c1c1c 42.7px 50.4px,transparent 50.4px 51.5px,#1c1c1c 51.5px 58.0px,transparent 58.0px 59.1px);opacity:.8"></div><div class="a" style="left:26px;top:68.5px;width:4px;height:3px;background:#b52577"></div><div class="a" style="left:12px;top:56px;width:6px;height:6px;background:#f3f3f3;border:0.6px solid #4a73a8"></div><div class="a" style="left:18.5px;top:56.5px;width:10px;height:5px;background:linear-gradient(90deg,#4aa4d8,#e0b040)"></div><div class="a" style="left:4px;top:-1px;width:21px;height:21px;border-radius:50%;background:radial-gradient(circle,#f7f4ee 0 50%,#cfcac4 60%,#eeeeee 68%,#bdbdbd 74%,rgba(240,240,240,.9) 80%,transparent 84%)"></div><div class="a" style="left:11.559999999999999px;top:6.98px;width:6.3px;height:4.2px;border-radius:50% 40% 50% 40%;background:#8a5a2a;opacity:.75"></div><div class="a" style="left:92px;top:30px;width:1.2px;height:50px;background:repeating-linear-gradient(#8a8677 0 5px,transparent 5px 9px)"></div><div class="a" style="left:0px;top:88px;width:98.5px;height:9px;background:#8f8f8f"></div><div class="a" style="left:5px;top:90.5px;width:10px;height:2px;background:#e8e8e8"></div></div><div class="a" style="left:232.7px;top:305.3px;width:1.1px;height:6.4px;background:#454545"></div><div class="a" style="left:232.7px;top:407.2px;width:1.1px;height:6.4px;background:#454545"></div><div class="a" style="left:325.2px;top:305.3px;width:1.1px;height:6.4px;background:#454545"></div><div class="a" style="left:325.2px;top:407.2px;width:1.1px;height:6.4px;background:#454545"></div><div class="a" style="left:224.5px;top:313.1px;width:6.6px;height:1.1px;background:#454545"></div><div class="a" style="left:328.7px;top:313.1px;width:6.3px;height:1.1px;background:#454545"></div><div class="a" style="left:224.5px;top:404.3px;width:6.6px;height:1.1px;background:#454545"></div><div class="a" style="left:328.7px;top:404.3px;width:6.3px;height:1.1px;background:#454545"></div><div class="a" style="left:276.85px;top:305.65px;width:5.5px;height:5.5px;border-radius:45%;transform:rotate(45deg);background:radial-gradient(circle,#c4c4c4 0 0.75px,#222 1.35px)"></div><div class="a" style="left:224.45px;top:356.95px;width:5.5px;height:5.5px;border-radius:45%;transform:rotate(45deg);background:radial-gradient(circle,#c4c4c4 0 0.75px,#222 1.35px)"></div><div class="a" style="left:329.05px;top:356.95px;width:5.5px;height:5.5px;border-radius:45%;transform:rotate(45deg);background:radial-gradient(circle,#c4c4c4 0 0.75px,#222 1.35px)"></div><div class="a" style="left:276.85px;top:407.85px;width:5.5px;height:5.5px;border-radius:45%;transform:rotate(45deg);background:radial-gradient(circle,#c4c4c4 0 0.75px,#222 1.35px)"></div><div class="t" style="left:259.5px;top:419.6px;width:40px;text-align:center;font-size:9.8px;color:#707070">9</div>
<div class="a" style="left:375.4px;top:305px;width:111px;height:109px;background:#ffffff;border:1px solid #d5d5d5"></div><div class="a" style="left:381.4px;top:311px;width:99px;height:98px;overflow:hidden"><div class="a" style="left:0px;top:0px;width:98.5px;height:97px;background:radial-gradient(ellipse 75% 75% at 50% 48%,#969c50 0%,#8a9145 45%,#7b843a 100%)"></div><div class="a" style="left:0px;top:0px;width:98.5px;height:97px;background:repeating-linear-gradient(rgba(255,255,240,.04) 0 1px,transparent 1px 2.5px)"></div><svg class="a" style="left:0;top:0" width="99" height="98" viewBox="0 0 99 98"><defs><radialGradient id="gb010" cx="0.5" cy="0.45" r="0.6"><stop offset="0" stop-color="#f4c446"/><stop offset="0.45" stop-color="#dc9a30"/><stop offset="0.8" stop-color="#a65c20"/><stop offset="1" stop-color="#5a3012"/></radialGradient><radialGradient id="gy010" cx="0.5" cy="0.45" r="0.65"><stop offset="0" stop-color="#fff4a0"/><stop offset="0.45" stop-color="#f3d23a"/><stop offset="1" stop-color="#c98a1e"/></radialGradient></defs><circle cx="48.5" cy="50" r="33" fill="#7a843b" stroke="#c3c88c" stroke-width="0.9"/><circle cx="48.5" cy="50" r="27.5" fill="#687232"/><circle cx="48.5" cy="50" r="29" fill="none" stroke="#9aa262" stroke-width="0.6" opacity=".7"/><circle cx="49.5" cy="49.8" r="24.6" fill="url(#gb010)"/><path d="M53 31 C60 29 67 33 71 40 C74 47 73 56 69 62 C66 66 63 68 61 68 C61 63 59 60 56 57 C53 55 52 51 53 47 C54 43 51 41 51 37 C50 34 51 32 53 31z" fill="url(#gy010)"/><path d="M38 30 C42 28 47 28 50 30 C48 33 45 34 42 36 C39 37 36 35 38 30z" fill="#f2cc40" opacity=".85"/><path d="M30 45 C33 40 38 40 40 44 C41 49 37 53 33 52 C30 51 29 48 30 45z" fill="#e8b038" opacity=".7"/><path d="M36 58 C40 56 46 58 48 63 C46 67 40 68 36 65 C34 63 34 60 36 58z" fill="#d89a30" opacity=".6"/><path d="M53 31 C50 34 51 38 53 42 C55 46 52 50 55 55 C58 59 61 62 60 69" fill="none" stroke="#4a220c" stroke-width="1.3"/><path d="M28 52 C32 56 30 62 35 66" fill="none" stroke="#6a3414" stroke-width="0.8" opacity=".5"/><path d="M42 38 C46 42 44 48 47 52" fill="none" stroke="#7a3a14" stroke-width="0.7" opacity=".45"/></svg><svg class="a" style="left:34px;top:10.5px" width="31" height="16" viewBox="0 0 31 16"><path d="M4 1h23l3 3.5v7l-3 3.5h-23l-3-3.5v-7z" fill="#2a3690" stroke="#d9dcf0" stroke-width="1"/><path d="M5 2.5h21l2 2.5v2h-25v-2z" fill="#4a58b8" opacity=".6"/></svg><div class="t" style="left:34px;top:13.3px;width:31px;text-align:center;font-family:Liberation Serif;font-weight:bold;font-size:10.5px;color:#fff">010</div><div class="a" style="left:5px;top:72.5px;width:14px;height:13px;border-radius:50%;border:1px solid #cdd08e;background:radial-gradient(circle,#b4b86c,#8f9642)"></div><div class="a" style="left:5.5px;top:88px;width:7px;height:2.6px;background:#f0f2e4;border-radius:1px"></div></div><div class="a" style="left:383.9px;top:305.3px;width:1.1px;height:6.4px;background:#454545"></div><div class="a" style="left:383.9px;top:407.2px;width:1.1px;height:6.4px;background:#454545"></div><div class="a" style="left:476.4px;top:305.3px;width:1.1px;height:6.4px;background:#454545"></div><div class="a" style="left:476.4px;top:407.2px;width:1.1px;height:6.4px;background:#454545"></div><div class="a" style="left:375.7px;top:313.1px;width:6.6px;height:1.1px;background:#454545"></div><div class="a" style="left:479.9px;top:313.1px;width:6.3px;height:1.1px;background:#454545"></div><div class="a" style="left:375.7px;top:404.3px;width:6.6px;height:1.1px;background:#454545"></div><div class="a" style="left:479.9px;top:404.3px;width:6.3px;height:1.1px;background:#454545"></div><div class="a" style="left:428.05px;top:305.65px;width:5.5px;height:5.5px;border-radius:45%;transform:rotate(45deg);background:radial-gradient(circle,#c4c4c4 0 0.75px,#222 1.35px)"></div><div class="a" style="left:375.65px;top:356.95px;width:5.5px;height:5.5px;border-radius:45%;transform:rotate(45deg);background:radial-gradient(circle,#c4c4c4 0 0.75px,#222 1.35px)"></div><div class="a" style="left:480.25px;top:356.95px;width:5.5px;height:5.5px;border-radius:45%;transform:rotate(45deg);background:radial-gradient(circle,#c4c4c4 0 0.75px,#222 1.35px)"></div><div class="a" style="left:428.05px;top:407.85px;width:5.5px;height:5.5px;border-radius:45%;transform:rotate(45deg);background:radial-gradient(circle,#c4c4c4 0 0.75px,#222 1.35px)"></div><div class="t" style="left:410.7px;top:419.6px;width:40px;text-align:center;font-size:9.8px;color:#707070">10</div>
<div class="a" style="left:526.6px;top:305px;width:111px;height:109px;background:#ffffff;border:1px solid #d5d5d5"></div><div class="a" style="left:532.6px;top:311px;width:99px;height:98px;overflow:hidden"><div class="a" style="left:0px;top:0px;width:98.5px;height:97px;background:#ebe5cf"></div><div class="a" style="left:5px;top:5px;width:88px;height:83px;background:#dedac8;border-radius:3px;border:0.6px solid #c9c3ad"></div><div class="a" style="left:8.5px;top:7.5px;width:82px;height:80px;background:#a9ad9c;border-radius:2px;border:0.8px solid #9a9a8c"></div><div class="a" style="left:10px;top:10px;width:79px;height:50px;background:linear-gradient(#cbcfbd,#b5bda6 55%,#a3ae96)"></div><div class="a" style="left:10px;top:48px;width:79px;height:14px;background:linear-gradient(#b6c2ad,#9fb09d)"></div><div class="a" style="left:62px;top:8.5px;width:28px;height:33px;background:#e8e2d2;border:0.6px solid #8f8a7a"></div><div class="a" style="left:69px;top:15px;width:15px;height:20px;background:radial-gradient(ellipse,#666 0 20%,#aaa 40%,transparent 62%)"></div><div class="a" style="left:16px;top:22.5px;width:49px;height:27px;background:radial-gradient(ellipse,#ecead9,#d5d1bd 80%);border:0.5px solid #a8a38e"></div><div class="a" style="left:22px;top:26px;width:36px;height:1.2px;background:linear-gradient(90deg,#303030 0.0px 4.3px,transparent 4.3px 5.4px,#303030 5.4px 12.5px,transparent 12.5px 13.6px,#303030 13.6px 18.2px,transparent 18.2px 19.3px,#303030 19.3px 25.7px,transparent 25.7px 26.8px,#303030 26.8px 32.1px,transparent 32.1px 33.2px,#303030 33.2px 36.0px,transparent 36.0px 37.1px);opacity:.8"></div><div class="a" style="left:22px;top:30px;width:37px;height:1.2px;background:linear-gradient(90deg,#303030 0.0px 3.6px,transparent 3.6px 4.7px,#303030 4.7px 8.7px,transparent 8.7px 9.8px,#303030 9.8px 18.6px,transparent 18.6px 19.7px,#303030 19.7px 25.7px,transparent 25.7px 26.8px,#303030 26.8px 30.8px,transparent 30.8px 31.9px,#303030 31.9px 37.0px,transparent 37.0px 38.1px);opacity:.8"></div><div class="a" style="left:22px;top:34px;width:37px;height:1.2px;background:linear-gradient(90deg,#303030 0.0px 9.5px,transparent 9.5px 10.6px,#303030 10.6px 16.2px,transparent 16.2px 17.3px,#303030 17.3px 20.8px,transparent 20.8px 21.9px,#303030 21.9px 25.7px,transparent 25.7px 26.8px,#303030 26.8px 30.0px,transparent 30.0px 31.1px,#303030 31.1px 36.0px,transparent 36.0px 37.1px);opacity:.8"></div><div class="a" style="left:22px;top:38px;width:37px;height:1.2px;background:linear-gradient(90deg,#303030 0.0px 3.1px,transparent 3.1px 4.2px,#303030 4.2px 8.4px,transparent 8.4px 9.5px,#303030 9.5px 13.8px,transparent 13.8px 14.9px,#303030 14.9px 21.4px,transparent 21.4px 22.5px,#303030 22.5px 31.2px,transparent 31.2px 32.3px,#303030 32.3px 37.0px,transparent 37.0px 38.1px);opacity:.8"></div><div class="a" style="left:22px;top:42px;width:37px;height:1.2px;background:linear-gradient(90deg,#303030 0.0px 5.4px,transparent 5.4px 6.5px,#303030 6.5px 11.9px,transparent 11.9px 13.0px,#303030 13.0px 19.2px,transparent 19.2px 20.3px,#303030 20.3px 25.4px,transparent 25.4px 26.5px,#303030 26.5px 31.4px,transparent 31.4px 32.5px,#303030 32.5px 35.4px,transparent 35.4px 36.5px,#303030 36.5px 37.0px,transparent 37.0px 38.1px);opacity:.8"></div><div class="a" style="left:22px;top:46px;width:25px;height:1.2px;background:linear-gradient(90deg,#303030 0.0px 9.3px,transparent 9.3px 10.4px,#303030 10.4px 13.8px,transparent 13.8px 14.9px,#303030 14.9px 20.9px,transparent 20.9px 22.0px,#303030 22.0px 25.0px,transparent 25.0px 26.1px);opacity:.8"></div><div class="a" style="left:29px;top:6.5px;width:35px;height:9px;background:linear-gradient(#f4f4ee,#d6d6ce 55%,#9a9a92);border-radius:1.5px;border:0.5px solid #6a6a62"></div><div class="a" style="left:26.5px;top:10.55px;width:3.5px;height:6.3px;background:#7a7a72;border-radius:1px"></div><div class="a" style="left:63px;top:10.55px;width:3.5px;height:6.3px;background:#7a7a72;border-radius:1px"></div><div class="t" style="left:29px;top:8.3px;width:35px;text-align:center;font-family:Liberation Sans;font-weight:bold;font-size:5.4px;letter-spacing:-0.25px;color:#1a1a1a">Dormido 1/2</div><div class="a" style="left:13px;top:62.5px;width:69px;height:22px;background:#fdfdfd;border:0.5px solid #d0d0d0"></div><div class="a" style="left:15px;top:65px;width:62px;height:1.35px;background:linear-gradient(90deg,#1c1c1c 0.0px 8.5px,transparent 8.5px 9.6px,#1c1c1c 9.6px 13.7px,transparent 13.7px 14.8px,#1c1c1c 14.8px 19.1px,transparent 19.1px 20.2px,#1c1c1c 20.2px 24.5px,transparent 24.5px 25.6px,#1c1c1c 25.6px 30.9px,transparent 30.9px 32.0px,#1c1c1c 32.0px 37.6px,transparent 37.6px 38.7px,#1c1c1c 38.7px 47.9px,transparent 47.9px 49.0px,#1c1c1c 49.0px 57.4px,transparent 57.4px 58.5px,#1c1c1c 58.5px 62.0px,transparent 62.0px 63.1px);opacity:.8"></div><div class="a" style="left:15px;top:69px;width:62px;height:1.35px;background:linear-gradient(90deg,#1c1c1c 0.0px 2.7px,transparent 2.7px 3.8px,#1c1c1c 3.8px 6.5px,transparent 6.5px 7.6px,#1c1c1c 7.6px 15.0px,transparent 15.0px 16.1px,#1c1c1c 16.1px 24.9px,transparent 24.9px 26.0px,#1c1c1c 26.0px 31.8px,transparent 31.8px 32.9px,#1c1c1c 32.9px 39.5px,transparent 39.5px 40.6px,#1c1c1c 40.6px 43.1px,transparent 43.1px 44.2px,#1c1c1c 44.2px 49.5px,transparent 49.5px 50.6px,#1c1c1c 50.6px 59.6px,transparent 59.6px 60.7px,#1c1c1c 60.7px 62.0px,transparent 62.0px 63.1px);opacity:.8"></div><div class="a" style="left:15px;top:74px;width:64px;height:1.35px;background:linear-gradient(90deg,#1c1c1c 0.0px 8.5px,transparent 8.5px 9.6px,#1c1c1c 9.6px 18.9px,transparent 18.9px 20.0px,#1c1c1c 20.0px 24.2px,transparent 24.2px 25.3px,#1c1c1c 25.3px 28.6px,transparent 28.6px 29.7px,#1c1c1c 29.7px 33.3px,transparent 33.3px 34.4px,#1c1c1c 34.4px 40.5px,transparent 40.5px 41.6px,#1c1c1c 41.6px 48.9px,transparent 48.9px 50.0px,#1c1c1c 50.0px 59.1px,transparent 59.1px 60.2px,#1c1c1c 60.2px 64.0px,transparent 64.0px 65.1px);opacity:.8"></div><div class="a" style="left:15px;top:78px;width:62px;height:1.35px;background:linear-gradient(90deg,#1c1c1c 0.0px 7.0px,transparent 7.0px 8.1px,#1c1c1c 8.1px 16.0px,transparent 16.0px 17.1px,#1c1c1c 17.1px 22.8px,transparent 22.8px 23.9px,#1c1c1c 23.9px 30.2px,transparent 30.2px 31.3px,#1c1c1c 31.3px 34.1px,transparent 34.1px 35.2px,#1c1c1c 35.2px 43.2px,transparent 43.2px 44.3px,#1c1c1c 44.3px 48.4px,transparent 48.4px 49.5px,#1c1c1c 49.5px 58.5px,transparent 58.5px 59.6px,#1c1c1c 59.6px 62.0px,transparent 62.0px 63.1px);opacity:.8"></div><div class="a" style="left:15px;top:82px;width:58px;height:1.35px;background:linear-gradient(90deg,#1c1c1c 0.0px 4.6px,transparent 4.6px 5.7px,#1c1c1c 5.7px 9.1px,transparent 9.1px 10.2px,#1c1c1c 10.2px 14.5px,transparent 14.5px 15.6px,#1c1c1c 15.6px 22.5px,transparent 22.5px 23.6px,#1c1c1c 23.6px 31.0px,transparent 31.0px 32.1px,#1c1c1c 32.1px 35.4px,transparent 35.4px 36.5px,#1c1c1c 36.5px 39.5px,transparent 39.5px 40.6px,#1c1c1c 40.6px 46.8px,transparent 46.8px 47.9px,#1c1c1c 47.9px 54.5px,transparent 54.5px 55.6px,#1c1c1c 55.6px 58.0px,transparent 58.0px 59.1px);opacity:.8"></div><div class="a" style="left:26px;top:68.5px;width:4px;height:3px;background:#b52577"></div><div class="a" style="left:12px;top:56px;width:6px;height:6px;background:#f3f3f3;border:0.6px solid #4a73a8"></div><div class="a" style="left:18.5px;top:56.5px;width:10px;height:5px;background:linear-gradient(90deg,#4aa4d8,#e0b040)"></div><div class="a" style="left:4px;top:-1px;width:21px;height:21px;border-radius:50%;background:radial-gradient(circle,#f7f4ee 0 50%,#cfcac4 60%,#eeeeee 68%,#bdbdbd 74%,rgba(240,240,240,.9) 80%,transparent 84%)"></div><div class="a" style="left:11.559999999999999px;top:6.98px;width:6.3px;height:4.2px;border-radius:50% 40% 50% 40%;background:#8a5a2a;opacity:.75"></div><div class="a" style="left:92px;top:30px;width:1.2px;height:50px;background:repeating-linear-gradient(#8a8677 0 5px,transparent 5px 9px)"></div><div class="a" style="left:0px;top:88px;width:98.5px;height:9px;background:#8f8f8f"></div><div class="a" style="left:5px;top:90.5px;width:10px;height:2px;background:#e8e8e8"></div></div><div class="a" style="left:535.1px;top:305.3px;width:1.1px;height:6.4px;background:#454545"></div><div class="a" style="left:535.1px;top:407.2px;width:1.1px;height:6.4px;background:#454545"></div><div class="a" style="left:627.6px;top:305.3px;width:1.1px;height:6.4px;background:#454545"></div><div class="a" style="left:627.6px;top:407.2px;width:1.1px;height:6.4px;background:#454545"></div><div class="a" style="left:526.9px;top:313.1px;width:6.6px;height:1.1px;background:#454545"></div><div class="a" style="left:631.1px;top:313.1px;width:6.3px;height:1.1px;background:#454545"></div><div class="a" style="left:526.9px;top:404.3px;width:6.6px;height:1.1px;background:#454545"></div><div class="a" style="left:631.1px;top:404.3px;width:6.3px;height:1.1px;background:#454545"></div><div class="a" style="left:579.25px;top:305.65px;width:5.5px;height:5.5px;border-radius:45%;transform:rotate(45deg);background:radial-gradient(circle,#c4c4c4 0 0.75px,#222 1.35px)"></div><div class="a" style="left:526.85px;top:356.95px;width:5.5px;height:5.5px;border-radius:45%;transform:rotate(45deg);background:radial-gradient(circle,#c4c4c4 0 0.75px,#222 1.35px)"></div><div class="a" style="left:631.45px;top:356.95px;width:5.5px;height:5.5px;border-radius:45%;transform:rotate(45deg);background:radial-gradient(circle,#c4c4c4 0 0.75px,#222 1.35px)"></div><div class="a" style="left:579.25px;top:407.85px;width:5.5px;height:5.5px;border-radius:45%;transform:rotate(45deg);background:radial-gradient(circle,#c4c4c4 0 0.75px,#222 1.35px)"></div><div class="t" style="left:561.9px;top:419.6px;width:40px;text-align:center;font-size:9.8px;color:#707070">11</div>
<div class="a" style="left:677.8px;top:305px;width:111px;height:109px;background:#ffffff;border:1px solid #d5d5d5"></div><div class="a" style="left:683.8px;top:311px;width:99px;height:98px;overflow:hidden"><div class="a" style="left:0px;top:0px;width:98.5px;height:97px;background:radial-gradient(ellipse 75% 75% at 50% 48%,#969c50 0%,#8a9145 45%,#7b843a 100%)"></div><div class="a" style="left:0px;top:0px;width:98.5px;height:97px;background:repeating-linear-gradient(rgba(255,255,240,.04) 0 1px,transparent 1px 2.5px)"></div><svg class="a" style="left:0;top:0" width="99" height="98" viewBox="0 0 99 98"><defs><radialGradient id="gb010" cx="0.5" cy="0.45" r="0.6"><stop offset="0" stop-color="#f4c446"/><stop offset="0.45" stop-color="#dc9a30"/><stop offset="0.8" stop-color="#a65c20"/><stop offset="1" stop-color="#5a3012"/></radialGradient><radialGradient id="gy010" cx="0.5" cy="0.45" r="0.65"><stop offset="0" stop-color="#fff4a0"/><stop offset="0.45" stop-color="#f3d23a"/><stop offset="1" stop-color="#c98a1e"/></radialGradient></defs><circle cx="48.5" cy="50" r="33" fill="#7a843b" stroke="#c3c88c" stroke-width="0.9"/><circle cx="48.5" cy="50" r="27.5" fill="#687232"/><circle cx="48.5" cy="50" r="29" fill="none" stroke="#9aa262" stroke-width="0.6" opacity=".7"/><circle cx="49.5" cy="49.8" r="24.6" fill="url(#gb010)"/><path d="M53 31 C60 29 67 33 71 40 C74 47 73 56 69 62 C66 66 63 68 61 68 C61 63 59 60 56 57 C53 55 52 51 53 47 C54 43 51 41 51 37 C50 34 51 32 53 31z" fill="url(#gy010)"/><path d="M38 30 C42 28 47 28 50 30 C48 33 45 34 42 36 C39 37 36 35 38 30z" fill="#f2cc40" opacity=".85"/><path d="M30 45 C33 40 38 40 40 44 C41 49 37 53 33 52 C30 51 29 48 30 45z" fill="#e8b038" opacity=".7"/><path d="M36 58 C40 56 46 58 48 63 C46 67 40 68 36 65 C34 63 34 60 36 58z" fill="#d89a30" opacity=".6"/><path d="M53 31 C50 34 51 38 53 42 C55 46 52 50 55 55 C58 59 61 62 60 69" fill="none" stroke="#4a220c" stroke-width="1.3"/><path d="M28 52 C32 56 30 62 35 66" fill="none" stroke="#6a3414" stroke-width="0.8" opacity=".5"/><path d="M42 38 C46 42 44 48 47 52" fill="none" stroke="#7a3a14" stroke-width="0.7" opacity=".45"/></svg><svg class="a" style="left:34px;top:10.5px" width="31" height="16" viewBox="0 0 31 16"><path d="M4 1h23l3 3.5v7l-3 3.5h-23l-3-3.5v-7z" fill="#2a3690" stroke="#d9dcf0" stroke-width="1"/><path d="M5 2.5h21l2 2.5v2h-25v-2z" fill="#4a58b8" opacity=".6"/></svg><div class="t" style="left:34px;top:13.3px;width:31px;text-align:center;font-family:Liberation Serif;font-weight:bold;font-size:10.5px;color:#fff">010</div><div class="a" style="left:5px;top:72.5px;width:14px;height:13px;border-radius:50%;border:1px solid #cdd08e;background:radial-gradient(circle,#b4b86c,#8f9642)"></div><div class="a" style="left:5.5px;top:88px;width:7px;height:2.6px;background:#f0f2e4;border-radius:1px"></div></div><div class="a" style="left:686.3px;top:305.3px;width:1.1px;height:6.4px;background:#454545"></div><div class="a" style="left:686.3px;top:407.2px;width:1.1px;height:6.4px;background:#454545"></div><div class="a" style="left:778.8px;top:305.3px;width:1.1px;height:6.4px;background:#454545"></div><div class="a" style="left:778.8px;top:407.2px;width:1.1px;height:6.4px;background:#454545"></div><div class="a" style="left:678.1px;top:313.1px;width:6.6px;height:1.1px;background:#454545"></div><div class="a" style="left:782.3px;top:313.1px;width:6.3px;height:1.1px;background:#454545"></div><div class="a" style="left:678.1px;top:404.3px;width:6.6px;height:1.1px;background:#454545"></div><div class="a" style="left:782.3px;top:404.3px;width:6.3px;height:1.1px;background:#454545"></div><div class="a" style="left:730.45px;top:305.65px;width:5.5px;height:5.5px;border-radius:45%;transform:rotate(45deg);background:radial-gradient(circle,#c4c4c4 0 0.75px,#222 1.35px)"></div><div class="a" style="left:678.05px;top:356.95px;width:5.5px;height:5.5px;border-radius:45%;transform:rotate(45deg);background:radial-gradient(circle,#c4c4c4 0 0.75px,#222 1.35px)"></div><div class="a" style="left:782.65px;top:356.95px;width:5.5px;height:5.5px;border-radius:45%;transform:rotate(45deg);background:radial-gradient(circle,#c4c4c4 0 0.75px,#222 1.35px)"></div><div class="a" style="left:730.45px;top:407.85px;width:5.5px;height:5.5px;border-radius:45%;transform:rotate(45deg);background:radial-gradient(circle,#c4c4c4 0 0.75px,#222 1.35px)"></div><div class="t" style="left:713.1px;top:419.6px;width:40px;text-align:center;font-size:9.8px;color:#707070">12</div>
<div class="a" style="left:829.0px;top:305px;width:111px;height:109px;background:#ffffff;border:1px solid #d5d5d5"></div><div class="a" style="left:835.0px;top:311px;width:99px;height:98px;overflow:hidden"><div class="a" style="left:0px;top:0px;width:98.5px;height:97px;background:#ebe5cf"></div><div class="a" style="left:5px;top:5px;width:88px;height:83px;background:#dedac8;border-radius:3px;border:0.6px solid #c9c3ad"></div><div class="a" style="left:8.5px;top:7.5px;width:82px;height:80px;background:#a9ad9c;border-radius:2px;border:0.8px solid #9a9a8c"></div><div class="a" style="left:10px;top:10px;width:79px;height:50px;background:linear-gradient(#cbcfbd,#b5bda6 55%,#a3ae96)"></div><div class="a" style="left:10px;top:48px;width:79px;height:14px;background:linear-gradient(#b6c2ad,#9fb09d)"></div><div class="a" style="left:62px;top:8.5px;width:28px;height:33px;background:#e8e2d2;border:0.6px solid #8f8a7a"></div><div class="a" style="left:69px;top:15px;width:15px;height:20px;background:radial-gradient(ellipse,#666 0 20%,#aaa 40%,transparent 62%)"></div><div class="a" style="left:16px;top:22.5px;width:49px;height:27px;background:radial-gradient(ellipse,#ecead9,#d5d1bd 80%);border:0.5px solid #a8a38e"></div><div class="a" style="left:22px;top:26px;width:36px;height:1.2px;background:linear-gradient(90deg,#303030 0.0px 4.1px,transparent 4.1px 5.2px,#303030 5.2px 11.9px,transparent 11.9px 13.0px,#303030 13.0px 15.5px,transparent 15.5px 16.6px,#303030 16.6px 21.3px,transparent 21.3px 22.4px,#303030 22.4px 28.1px,transparent 28.1px 29.2px,#303030 29.2px 36.0px,transparent 36.0px 37.1px);opacity:.8"></div><div class="a" style="left:22px;top:30px;width:37px;height:1.2px;background:linear-gradient(90deg,#303030 0.0px 7.0px,transparent 7.0px 8.1px,#303030 8.1px 16.8px,transparent 16.8px 17.9px,#303030 17.9px 23.7px,transparent 23.7px 24.8px,#303030 24.8px 29.0px,transparent 29.0px 30.1px,#303030 30.1px 34.3px,transparent 34.3px 35.4px,#303030 35.4px 37.0px,transparent 37.0px 38.1px);opacity:.8"></div><div class="a" style="left:22px;top:34px;width:37px;height:1.2px;background:linear-gradient(90deg,#303030 0.0px 7.4px,transparent 7.4px 8.5px,#303030 8.5px 13.2px,transparent 13.2px 14.3px,#303030 14.3px 16.9px,transparent 16.9px 18.0px,#303030 18.0px 24.0px,transparent 24.0px 25.1px,#303030 25.1px 32.3px,transparent 32.3px 33.4px,#303030 33.4px 37.0px,transparent 37.0px 38.1px);opacity:.8"></div><div class="a" style="left:22px;top:38px;width:37px;height:1.2px;background:linear-gradient(90deg,#303030 0.0px 4.3px,transparent 4.3px 5.4px,#303030 5.4px 12.6px,transparent 12.6px 13.7px,#303030 13.7px 22.6px,transparent 22.6px 23.7px,#303030 23.7px 27.8px,transparent 27.8px 28.9px,#303030 28.9px 31.7px,transparent 31.7px 32.8px,#303030 32.8px 37.0px,transparent 37.0px 38.1px);opacity:.8"></div><div class="a" style="left:22px;top:42px;width:37px;height:1.2px;background:linear-gradient(90deg,#303030 0.0px 5.4px,transparent 5.4px 6.5px,#303030 6.5px 13.8px,transparent 13.8px 14.9px,#303030 14.9px 18.8px,transparent 18.8px 19.9px,#303030 19.9px 28.0px,transparent 28.0px 29.1px,#303030 29.1px 36.8px,transparent 36.8px 37.9px);opacity:.8"></div><div class="a" style="left:22px;top:46px;width:25px;height:1.2px;background:linear-gradient(90deg,#303030 0.0px 6.0px,transparent 6.0px 7.1px,#303030 7.1px 11.1px,transparent 11.1px 12.2px,#303030 12.2px 21.5px,transparent 21.5px 22.6px,#303030 22.6px 25.0px,transparent 25.0px 26.1px);opacity:.8"></div><div class="a" style="left:29px;top:6.5px;width:35px;height:9px;background:linear-gradient(#f4f4ee,#d6d6ce 55%,#9a9a92);border-radius:1.5px;border:0.5px solid #6a6a62"></div><div class="a" style="left:26.5px;top:10.55px;width:3.5px;height:6.3px;background:#7a7a72;border-radius:1px"></div><div class="a" style="left:63px;top:10.55px;width:3.5px;height:6.3px;background:#7a7a72;border-radius:1px"></div><div class="t" style="left:29px;top:8.3px;width:35px;text-align:center;font-family:Liberation Sans;font-weight:bold;font-size:5.4px;letter-spacing:-0.25px;color:#1a1a1a">Dormido 1/2</div><div class="a" style="left:13px;top:62.5px;width:69px;height:22px;background:#fdfdfd;border:0.5px solid #d0d0d0"></div><div class="a" style="left:15px;top:65px;width:62px;height:1.35px;background:linear-gradient(90deg,#1c1c1c 0.0px 8.2px,transparent 8.2px 9.3px,#1c1c1c 9.3px 13.5px,transparent 13.5px 14.6px,#1c1c1c 14.6px 18.6px,transparent 18.6px 19.7px,#1c1c1c 19.7px 27.5px,transparent 27.5px 28.6px,#1c1c1c 28.6px 33.2px,transparent 33.2px 34.3px,#1c1c1c 34.3px 43.5px,transparent 43.5px 44.6px,#1c1c1c 44.6px 50.5px,transparent 50.5px 51.6px,#1c1c1c 51.6px 55.4px,transparent 55.4px 56.5px,#1c1c1c 56.5px 60.6px,transparent 60.6px 61.7px,#1c1c1c 61.7px 62.0px,transparent 62.0px 63.1px);opacity:.8"></div><div class="a" style="left:15px;top:69px;width:62px;height:1.35px;background:linear-gradient(90deg,#1c1c1c 0.0px 7.2px,transparent 7.2px 8.3px,#1c1c1c 8.3px 17.4px,transparent 17.4px 18.5px,#1c1c1c 18.5px 22.0px,transparent 22.0px 23.1px,#1c1c1c 23.1px 28.4px,transparent 28.4px 29.5px,#1c1c1c 29.5px 33.5px,transparent 33.5px 34.6px,#1c1c1c 34.6px 43.9px,transparent 43.9px 45.0px,#1c1c1c 45.0px 48.5px,transparent 48.5px 49.6px,#1c1c1c 49.6px 52.4px,transparent 52.4px 53.5px,#1c1c1c 53.5px 56.5px,transparent 56.5px 57.6px,#1c1c1c 57.6px 62.0px,transparent 62.0px 63.1px);opacity:.8"></div><div class="a" style="left:15px;top:74px;width:64px;height:1.35px;background:linear-gradient(90deg,#1c1c1c 0.0px 8.8px,transparent 8.8px 9.9px,#1c1c1c 9.9px 18.6px,transparent 18.6px 19.7px,#1c1c1c 19.7px 27.3px,transparent 27.3px 28.4px,#1c1c1c 28.4px 37.9px,transparent 37.9px 39.0px,#1c1c1c 39.0px 48.0px,transparent 48.0px 49.1px,#1c1c1c 49.1px 53.9px,transparent 53.9px 55.0px,#1c1c1c 55.0px 58.8px,transparent 58.8px 59.9px,#1c1c1c 59.9px 64.0px,transparent 64.0px 65.1px);opacity:.8"></div><div class="a" style="left:15px;top:78px;width:62px;height:1.35px;background:linear-gradient(90deg,#1c1c1c 0.0px 7.7px,transparent 7.7px 8.8px,#1c1c1c 8.8px 11.5px,transparent 11.5px 12.6px,#1c1c1c 12.6px 19.8px,transparent 19.8px 20.9px,#1c1c1c 20.9px 26.0px,transparent 26.0px 27.1px,#1c1c1c 27.1px 32.3px,transparent 32.3px 33.4px,#1c1c1c 33.4px 38.2px,transparent 38.2px 39.3px,#1c1c1c 39.3px 43.0px,transparent 43.0px 44.1px,#1c1c1c 44.1px 46.6px,transparent 46.6px 47.7px,#1c1c1c 47.7px 52.2px,transparent 52.2px 53.3px,#1c1c1c 53.3px 58.2px,transparent 58.2px 59.3px,#1c1c1c 59.3px 62.0px,transparent 62.0px 63.1px);opacity:.8"></div><div class="a" style="left:15px;top:82px;width:58px;height:1.35px;background:linear-gradient(90deg,#1c1c1c 0.0px 3.4px,transparent 3.4px 4.5px,#1c1c1c 4.5px 13.7px,transparent 13.7px 14.8px,#1c1c1c 14.8px 18.8px,transparent 18.8px 19.9px,#1c1c1c 19.9px 24.9px,transparent 24.9px 26.0px,#1c1c1c 26.0px 34.2px,transparent 34.2px 35.3px,#1c1c1c 35.3px 43.6px,transparent 43.6px 44.7px,#1c1c1c 44.7px 50.2px,transparent 50.2px 51.3px,#1c1c1c 51.3px 54.1px,transparent 54.1px 55.2px,#1c1c1c 55.2px 58.0px,transparent 58.0px 59.1px);opacity:.8"></div><div class="a" style="left:26px;top:68.5px;width:4px;height:3px;background:#b52577"></div><div class="a" style="left:12px;top:56px;width:6px;height:6px;background:#f3f3f3;border:0.6px solid #4a73a8"></div><div class="a" style="left:18.5px;top:56.5px;width:10px;height:5px;background:linear-gradient(90deg,#4aa4d8,#e0b040)"></div><div class="a" style="left:4px;top:-1px;width:21px;height:21px;border-radius:50%;background:radial-gradient(circle,#f7f4ee 0 50%,#cfcac4 60%,#eeeeee 68%,#bdbdbd 74%,rgba(240,240,240,.9) 80%,transparent 84%)"></div><div class="a" style="left:11.559999999999999px;top:6.98px;width:6.3px;height:4.2px;border-radius:50% 40% 50% 40%;background:#8a5a2a;opacity:.75"></div><div class="a" style="left:92px;top:30px;width:1.2px;height:50px;background:repeating-linear-gradient(#8a8677 0 5px,transparent 5px 9px)"></div><div class="a" style="left:0px;top:88px;width:98.5px;height:9px;background:#8f8f8f"></div><div class="a" style="left:5px;top:90.5px;width:10px;height:2px;background:#e8e8e8"></div></div><div class="a" style="left:837.5px;top:305.3px;width:1.1px;height:6.4px;background:#454545"></div><div class="a" style="left:837.5px;top:407.2px;width:1.1px;height:6.4px;background:#454545"></div><div class="a" style="left:930.0px;top:305.3px;width:1.1px;height:6.4px;background:#454545"></div><div class="a" style="left:930.0px;top:407.2px;width:1.1px;height:6.4px;background:#454545"></div><div class="a" style="left:829.3px;top:313.1px;width:6.6px;height:1.1px;background:#454545"></div><div class="a" style="left:933.5px;top:313.1px;width:6.3px;height:1.1px;background:#454545"></div><div class="a" style="left:829.3px;top:404.3px;width:6.6px;height:1.1px;background:#454545"></div><div class="a" style="left:933.5px;top:404.3px;width:6.3px;height:1.1px;background:#454545"></div><div class="a" style="left:881.65px;top:305.65px;width:5.5px;height:5.5px;border-radius:45%;transform:rotate(45deg);background:radial-gradient(circle,#c4c4c4 0 0.75px,#222 1.35px)"></div><div class="a" style="left:829.25px;top:356.95px;width:5.5px;height:5.5px;border-radius:45%;transform:rotate(45deg);background:radial-gradient(circle,#c4c4c4 0 0.75px,#222 1.35px)"></div><div class="a" style="left:933.85px;top:356.95px;width:5.5px;height:5.5px;border-radius:45%;transform:rotate(45deg);background:radial-gradient(circle,#c4c4c4 0 0.75px,#222 1.35px)"></div><div class="a" style="left:881.65px;top:407.85px;width:5.5px;height:5.5px;border-radius:45%;transform:rotate(45deg);background:radial-gradient(circle,#c4c4c4 0 0.75px,#222 1.35px)"></div><div class="t" style="left:864.3px;top:419.6px;width:40px;text-align:center;font-size:9.8px;color:#707070">13</div>
<div class="a" style="left:73.0px;top:456px;width:111px;height:109px;background:#ffffff;border:1px solid #d5d5d5"></div><div class="a" style="left:79.0px;top:462px;width:99px;height:98px;overflow:hidden"><div class="a" style="left:0px;top:0px;width:98.5px;height:97px;background:#ebe5cf"></div><div class="a" style="left:5px;top:5px;width:88px;height:82px;background:#dedac8;border-radius:3px;border:0.6px solid #c9c3ad"></div><div class="a" style="left:8.6px;top:8px;width:80.4px;height:78px;background:linear-gradient(#d6dac6 0%,#b9c9b4 35%,#98b5ac 70%,#8aaea8 100%);border:0.8px solid #8d998a"></div><div class="a" style="left:22.4px;top:26.5px;width:54px;height:18.5px;background:radial-gradient(ellipse,#eeede2,#d3d3c4 80%);border:0.5px solid #9a9a88"></div><div class="a" style="left:28px;top:30px;width:42px;height:1.25px;background:linear-gradient(90deg,#282828 0.0px 5.1px,transparent 5.1px 6.2px,#282828 6.2px 15.1px,transparent 15.1px 16.2px,#282828 16.2px 20.1px,transparent 20.1px 21.2px,#282828 21.2px 26.2px,transparent 26.2px 27.3px,#282828 27.3px 36.1px,transparent 36.1px 37.2px,#282828 37.2px 39.9px,transparent 39.9px 41.0px,#282828 41.0px 42.0px,transparent 42.0px 43.1px);opacity:.8"></div><div class="a" style="left:28px;top:35px;width:42px;height:1.25px;background:linear-gradient(90deg,#282828 0.0px 8.2px,transparent 8.2px 9.3px,#282828 9.3px 17.1px,transparent 17.1px 18.2px,#282828 18.2px 21.0px,transparent 21.0px 22.1px,#282828 22.1px 24.9px,transparent 24.9px 26.0px,#282828 26.0px 28.9px,transparent 28.9px 30.0px,#282828 30.0px 39.0px,transparent 39.0px 40.1px,#282828 40.1px 42.0px,transparent 42.0px 43.1px);opacity:.8"></div><div class="a" style="left:28px;top:39px;width:34px;height:1.25px;background:linear-gradient(90deg,#282828 0.0px 7.7px,transparent 7.7px 8.8px,#282828 8.8px 17.6px,transparent 17.6px 18.7px,#282828 18.7px 23.6px,transparent 23.6px 24.7px,#282828 24.7px 29.1px,transparent 29.1px 30.2px,#282828 30.2px 34.0px,transparent 34.0px 35.1px);opacity:.8"></div><div class="a" style="left:56px;top:55px;width:33px;height:32px;background:#f2eee6;border:1.5px solid #2a2a2a"></div><div class="a" style="left:61px;top:60px;width:22px;height:21px;border-radius:50%;background:radial-gradient(circle,#c8ae62,#e2cf92 45%,#efe4c2 65%,#f2eee6 78%)"></div><div class="a" style="left:6.6px;top:73.5px;width:21.5px;height:8px;background:#8a1f5c"></div><div class="a" style="left:10px;top:75.3px;width:4.3px;height:4.3px;background:#fff;transform:rotate(45deg)"></div><div class="a" style="left:30px;top:6px;width:36px;height:9.5px;background:linear-gradient(#f4f4ee,#d6d6ce 55%,#9a9a92);border-radius:1.5px;border:0.5px solid #6a6a62"></div><div class="a" style="left:27.5px;top:10.275px;width:3.5px;height:6.6499999999999995px;background:#7a7a72;border-radius:1px"></div><div class="a" style="left:65px;top:10.275px;width:3.5px;height:6.6499999999999995px;background:#7a7a72;border-radius:1px"></div><div class="t" style="left:30px;top:8.1px;width:36px;text-align:center;font-family:Liberation Sans;font-weight:bold;font-size:5.4px;letter-spacing:-0.25px;color:#1a1a1a">Dormido 2/2</div><div class="a" style="left:4px;top:0px;width:19px;height:19px;border-radius:50%;background:radial-gradient(circle,#f7f4ee 0 50%,#cfcac4 60%,#eeeeee 68%,#bdbdbd 74%,rgba(240,240,240,.9) 80%,transparent 84%)"></div><div class="a" style="left:10.84px;top:7.22px;width:5.7px;height:3.8000000000000003px;border-radius:50% 40% 50% 40%;background:#b8961c;opacity:.75"></div><div class="a" style="left:92px;top:30px;width:1.2px;height:50px;background:repeating-linear-gradient(#8a8677 0 5px,transparent 5px 9px)"></div><div class="a" style="left:0px;top:87px;width:98.5px;height:10px;background:#8f8f8f"></div><div class="a" style="left:5px;top:89.5px;width:10px;height:2px;background:#e8e8e8"></div></div><div class="a" style="left:81.5px;top:456.3px;width:1.1px;height:6.4px;background:#454545"></div><div class="a" style="left:81.5px;top:558.2px;width:1.1px;height:6.4px;background:#454545"></div><div class="a" style="left:174.0px;top:456.3px;width:1.1px;height:6.4px;background:#454545"></div><div class="a" style="left:174.0px;top:558.2px;width:1.1px;height:6.4px;background:#454545"></div><div class="a" style="left:73.3px;top:464.1px;width:6.6px;height:1.1px;background:#454545"></div><div class="a" style="left:177.5px;top:464.1px;width:6.3px;height:1.1px;background:#454545"></div><div class="a" style="left:73.3px;top:555.3px;width:6.6px;height:1.1px;background:#454545"></div><div class="a" style="left:177.5px;top:555.3px;width:6.3px;height:1.1px;background:#454545"></div><div class="a" style="left:125.65px;top:456.65px;width:5.5px;height:5.5px;border-radius:45%;transform:rotate(45deg);background:radial-gradient(circle,#c4c4c4 0 0.75px,#222 1.35px)"></div><div class="a" style="left:73.25px;top:507.95px;width:5.5px;height:5.5px;border-radius:45%;transform:rotate(45deg);background:radial-gradient(circle,#c4c4c4 0 0.75px,#222 1.35px)"></div><div class="a" style="left:177.85px;top:507.95px;width:5.5px;height:5.5px;border-radius:45%;transform:rotate(45deg);background:radial-gradient(circle,#c4c4c4 0 0.75px,#222 1.35px)"></div><div class="a" style="left:125.65px;top:558.85px;width:5.5px;height:5.5px;border-radius:45%;transform:rotate(45deg);background:radial-gradient(circle,#c4c4c4 0 0.75px,#222 1.35px)"></div><div class="t" style="left:108.3px;top:570.6px;width:40px;text-align:center;font-size:9.8px;color:#707070">15</div>
<div class="a" style="left:224.2px;top:456px;width:111px;height:109px;background:#ffffff;border:1px solid #d5d5d5"></div><div class="a" style="left:230.2px;top:462px;width:99px;height:98px;overflow:hidden"><div class="a" style="left:0px;top:0px;width:98.5px;height:97px;background:radial-gradient(ellipse 75% 75% at 50% 48%,#969c50 0%,#8a9145 45%,#7b843a 100%)"></div><div class="a" style="left:0px;top:0px;width:98.5px;height:97px;background:repeating-linear-gradient(rgba(255,255,240,.04) 0 1px,transparent 1px 2.5px)"></div><svg class="a" style="left:0;top:0" width="99" height="98" viewBox="0 0 99 98"><defs><radialGradient id="gb020" cx="0.5" cy="0.45" r="0.6"><stop offset="0" stop-color="#f4c446"/><stop offset="0.45" stop-color="#dc9a30"/><stop offset="0.8" stop-color="#a65c20"/><stop offset="1" stop-color="#5a3012"/></radialGradient><radialGradient id="gy020" cx="0.5" cy="0.45" r="0.65"><stop offset="0" stop-color="#fff4a0"/><stop offset="0.45" stop-color="#f3d23a"/><stop offset="1" stop-color="#c98a1e"/></radialGradient></defs><circle cx="48.5" cy="50" r="33" fill="#7a843b" stroke="#c3c88c" stroke-width="0.9"/><circle cx="48.5" cy="50" r="27.5" fill="#687232"/><circle cx="48.5" cy="50" r="29" fill="none" stroke="#9aa262" stroke-width="0.6" opacity=".7"/><circle cx="49.5" cy="49.8" r="24.6" fill="url(#gb020)"/><path d="M53 31 C60 29 67 33 71 40 C74 47 73 56 69 62 C66 66 63 68 61 68 C61 63 59 60 56 57 C53 55 52 51 53 47 C54 43 51 41 51 37 C50 34 51 32 53 31z" fill="url(#gy020)"/><path d="M38 30 C42 28 47 28 50 30 C48 33 45 34 42 36 C39 37 36 35 38 30z" fill="#f2cc40" opacity=".85"/><path d="M30 45 C33 40 38 40 40 44 C41 49 37 53 33 52 C30 51 29 48 30 45z" fill="#e8b038" opacity=".7"/><path d="M36 58 C40 56 46 58 48 63 C46 67 40 68 36 65 C34 63 34 60 36 58z" fill="#d89a30" opacity=".6"/><path d="M53 31 C50 34 51 38 53 42 C55 46 52 50 55 55 C58 59 61 62 60 69" fill="none" stroke="#4a220c" stroke-width="1.3"/><path d="M28 52 C32 56 30 62 35 66" fill="none" stroke="#6a3414" stroke-width="0.8" opacity=".5"/><path d="M42 38 C46 42 44 48 47 52" fill="none" stroke="#7a3a14" stroke-width="0.7" opacity=".45"/></svg><svg class="a" style="left:34px;top:10.5px" width="31" height="16" viewBox="0 0 31 16"><path d="M4 1h23l3 3.5v7l-3 3.5h-23l-3-3.5v-7z" fill="#2a3690" stroke="#d9dcf0" stroke-width="1"/><path d="M5 2.5h21l2 2.5v2h-25v-2z" fill="#4a58b8" opacity=".6"/></svg><div class="t" style="left:34px;top:13.3px;width:31px;text-align:center;font-family:Liberation Serif;font-weight:bold;font-size:10.5px;color:#fff">020</div><div class="a" style="left:5px;top:72.5px;width:14px;height:13px;border-radius:50%;border:1px solid #cdd08e;background:radial-gradient(circle,#b4b86c,#8f9642)"></div><div class="a" style="left:5.5px;top:88px;width:7px;height:2.6px;background:#f0f2e4;border-radius:1px"></div></div><div class="a" style="left:232.7px;top:456.3px;width:1.1px;height:6.4px;background:#454545"></div><div class="a" style="left:232.7px;top:558.2px;width:1.1px;height:6.4px;background:#454545"></div><div class="a" style="left:325.2px;top:456.3px;width:1.1px;height:6.4px;background:#454545"></div><div class="a" style="left:325.2px;top:558.2px;width:1.1px;height:6.4px;background:#454545"></div><div class="a" style="left:224.5px;top:464.1px;width:6.6px;height:1.1px;background:#454545"></div><div class="a" style="left:328.7px;top:464.1px;width:6.3px;height:1.1px;background:#454545"></div><div class="a" style="left:224.5px;top:555.3px;width:6.6px;height:1.1px;background:#454545"></div><div class="a" style="left:328.7px;top:555.3px;width:6.3px;height:1.1px;background:#454545"></div><div class="a" style="left:276.85px;top:456.65px;width:5.5px;height:5.5px;border-radius:45%;transform:rotate(45deg);background:radial-gradient(circle,#c4c4c4 0 0.75px,#222 1.35px)"></div><div class="a" style="left:224.45px;top:507.95px;width:5.5px;height:5.5px;border-radius:45%;transform:rotate(45deg);background:radial-gradient(circle,#c4c4c4 0 0.75px,#222 1.35px)"></div><div class="a" style="left:329.05px;top:507.95px;width:5.5px;height:5.5px;border-radius:45%;transform:rotate(45deg);background:radial-gradient(circle,#c4c4c4 0 0.75px,#222 1.35px)"></div><div class="a" style="left:276.85px;top:558.85px;width:5.5px;height:5.5px;border-radius:45%;transform:rotate(45deg);background:radial-gradient(circle,#c4c4c4 0 0.75px,#222 1.35px)"></div><div class="t" style="left:259.5px;top:570.6px;width:40px;text-align:center;font-size:9.8px;color:#707070">16</div>
<div class="a" style="left:375.4px;top:456px;width:111px;height:109px;background:#ffffff;border:1px solid #d5d5d5"></div><div class="a" style="left:381.4px;top:462px;width:99px;height:98px;overflow:hidden"><div class="a" style="left:0px;top:0px;width:98.5px;height:97px;background:#ebe5cf"></div><div class="a" style="left:5px;top:5px;width:88px;height:82px;background:#dedac8;border-radius:3px;border:0.6px solid #c9c3ad"></div><div class="a" style="left:8.6px;top:8px;width:80.4px;height:78px;background:linear-gradient(#d6dac6 0%,#b9c9b4 35%,#98b5ac 70%,#8aaea8 100%);border:0.8px solid #8d998a"></div><div class="a" style="left:22.4px;top:26.5px;width:54px;height:18.5px;background:radial-gradient(ellipse,#eeede2,#d3d3c4 80%);border:0.5px solid #9a9a88"></div><div class="a" style="left:28px;top:30px;width:42px;height:1.25px;background:linear-gradient(90deg,#282828 0.0px 6.8px,transparent 6.8px 7.9px,#282828 7.9px 12.3px,transparent 12.3px 13.4px,#282828 13.4px 20.9px,transparent 20.9px 22.0px,#282828 22.0px 26.7px,transparent 26.7px 27.8px,#282828 27.8px 32.2px,transparent 32.2px 33.3px,#282828 33.3px 35.8px,transparent 35.8px 36.9px,#282828 36.9px 42.0px,transparent 42.0px 43.1px);opacity:.8"></div><div class="a" style="left:28px;top:35px;width:42px;height:1.25px;background:linear-gradient(90deg,#282828 0.0px 8.9px,transparent 8.9px 10.0px,#282828 10.0px 17.0px,transparent 17.0px 18.1px,#282828 18.1px 27.2px,transparent 27.2px 28.3px,#282828 28.3px 30.9px,transparent 30.9px 32.0px,#282828 32.0px 36.2px,transparent 36.2px 37.3px,#282828 37.3px 42.0px,transparent 42.0px 43.1px);opacity:.8"></div><div class="a" style="left:28px;top:39px;width:34px;height:1.25px;background:linear-gradient(90deg,#282828 0.0px 9.2px,transparent 9.2px 10.3px,#282828 10.3px 19.5px,transparent 19.5px 20.6px,#282828 20.6px 25.8px,transparent 25.8px 26.9px,#282828 26.9px 31.1px,transparent 31.1px 32.2px,#282828 32.2px 34.0px,transparent 34.0px 35.1px);opacity:.8"></div><div class="a" style="left:56px;top:55px;width:33px;height:32px;background:#f2eee6;border:1.5px solid #2a2a2a"></div><div class="a" style="left:61px;top:60px;width:22px;height:21px;border-radius:50%;background:radial-gradient(circle,#c8ae62,#e2cf92 45%,#efe4c2 65%,#f2eee6 78%)"></div><div class="a" style="left:6.6px;top:73.5px;width:21.5px;height:8px;background:#8a1f5c"></div><div class="a" style="left:10px;top:75.3px;width:4.3px;height:4.3px;background:#fff;transform:rotate(45deg)"></div><div class="a" style="left:30px;top:6px;width:36px;height:9.5px;background:linear-gradient(#f4f4ee,#d6d6ce 55%,#9a9a92);border-radius:1.5px;border:0.5px solid #6a6a62"></div><div class="a" style="left:27.5px;top:10.275px;width:3.5px;height:6.6499999999999995px;background:#7a7a72;border-radius:1px"></div><div class="a" style="left:65px;top:10.275px;width:3.5px;height:6.6499999999999995px;background:#7a7a72;border-radius:1px"></div><div class="t" style="left:30px;top:8.1px;width:36px;text-align:center;font-family:Liberation Sans;font-weight:bold;font-size:5.4px;letter-spacing:-0.25px;color:#1a1a1a">Dormido 2/2</div><div class="a" style="left:4px;top:0px;width:19px;height:19px;border-radius:50%;background:radial-gradient(circle,#f7f4ee 0 50%,#cfcac4 60%,#eeeeee 68%,#bdbdbd 74%,rgba(240,240,240,.9) 80%,transparent 84%)"></div><div class="a" style="left:10.84px;top:7.22px;width:5.7px;height:3.8000000000000003px;border-radius:50% 40% 50% 40%;background:#b8961c;opacity:.75"></div><div class="a" style="left:92px;top:30px;width:1.2px;height:50px;background:repeating-linear-gradient(#8a8677 0 5px,transparent 5px 9px)"></div><div class="a" style="left:0px;top:87px;width:98.5px;height:10px;background:#8f8f8f"></div><div class="a" style="left:5px;top:89.5px;width:10px;height:2px;background:#e8e8e8"></div></div><div class="a" style="left:383.9px;top:456.3px;width:1.1px;height:6.4px;background:#454545"></div><div class="a" style="left:383.9px;top:558.2px;width:1.1px;height:6.4px;background:#454545"></div><div class="a" style="left:476.4px;top:456.3px;width:1.1px;height:6.4px;background:#454545"></div><div class="a" style="left:476.4px;top:558.2px;width:1.1px;height:6.4px;background:#454545"></div><div class="a" style="left:375.7px;top:464.1px;width:6.6px;height:1.1px;background:#454545"></div><div class="a" style="left:479.9px;top:464.1px;width:6.3px;height:1.1px;background:#454545"></div><div class="a" style="left:375.7px;top:555.3px;width:6.6px;height:1.1px;background:#454545"></div><div class="a" style="left:479.9px;top:555.3px;width:6.3px;height:1.1px;background:#454545"></div><div class="a" style="left:428.05px;top:456.65px;width:5.5px;height:5.5px;border-radius:45%;transform:rotate(45deg);background:radial-gradient(circle,#c4c4c4 0 0.75px,#222 1.35px)"></div><div class="a" style="left:375.65px;top:507.95px;width:5.5px;height:5.5px;border-radius:45%;transform:rotate(45deg);background:radial-gradient(circle,#c4c4c4 0 0.75px,#222 1.35px)"></div><div class="a" style="left:480.25px;top:507.95px;width:5.5px;height:5.5px;border-radius:45%;transform:rotate(45deg);background:radial-gradient(circle,#c4c4c4 0 0.75px,#222 1.35px)"></div><div class="a" style="left:428.05px;top:558.85px;width:5.5px;height:5.5px;border-radius:45%;transform:rotate(45deg);background:radial-gradient(circle,#c4c4c4 0 0.75px,#222 1.35px)"></div><div class="t" style="left:410.7px;top:570.6px;width:40px;text-align:center;font-size:9.8px;color:#707070">17</div>
<div class="a" style="left:526.6px;top:456px;width:111px;height:109px;background:#ffffff;border:1px solid #d5d5d5"></div><div class="a" style="left:532.6px;top:462px;width:99px;height:98px;overflow:hidden"><div class="a" style="left:0px;top:0px;width:98.5px;height:97px;background:radial-gradient(ellipse 75% 75% at 50% 48%,#969c50 0%,#8a9145 45%,#7b843a 100%)"></div><div class="a" style="left:0px;top:0px;width:98.5px;height:97px;background:repeating-linear-gradient(rgba(255,255,240,.04) 0 1px,transparent 1px 2.5px)"></div><svg class="a" style="left:0;top:0" width="99" height="98" viewBox="0 0 99 98"><defs><radialGradient id="gb020" cx="0.5" cy="0.45" r="0.6"><stop offset="0" stop-color="#f4c446"/><stop offset="0.45" stop-color="#dc9a30"/><stop offset="0.8" stop-color="#a65c20"/><stop offset="1" stop-color="#5a3012"/></radialGradient><radialGradient id="gy020" cx="0.5" cy="0.45" r="0.65"><stop offset="0" stop-color="#fff4a0"/><stop offset="0.45" stop-color="#f3d23a"/><stop offset="1" stop-color="#c98a1e"/></radialGradient></defs><circle cx="48.5" cy="50" r="33" fill="#7a843b" stroke="#c3c88c" stroke-width="0.9"/><circle cx="48.5" cy="50" r="27.5" fill="#687232"/><circle cx="48.5" cy="50" r="29" fill="none" stroke="#9aa262" stroke-width="0.6" opacity=".7"/><circle cx="49.5" cy="49.8" r="24.6" fill="url(#gb020)"/><path d="M53 31 C60 29 67 33 71 40 C74 47 73 56 69 62 C66 66 63 68 61 68 C61 63 59 60 56 57 C53 55 52 51 53 47 C54 43 51 41 51 37 C50 34 51 32 53 31z" fill="url(#gy020)"/><path d="M38 30 C42 28 47 28 50 30 C48 33 45 34 42 36 C39 37 36 35 38 30z" fill="#f2cc40" opacity=".85"/><path d="M30 45 C33 40 38 40 40 44 C41 49 37 53 33 52 C30 51 29 48 30 45z" fill="#e8b038" opacity=".7"/><path d="M36 58 C40 56 46 58 48 63 C46 67 40 68 36 65 C34 63 34 60 36 58z" fill="#d89a30" opacity=".6"/><path d="M53 31 C50 34 51 38 53 42 C55 46 52 50 55 55 C58 59 61 62 60 69" fill="none" stroke="#4a220c" stroke-width="1.3"/><path d="M28 52 C32 56 30 62 35 66" fill="none" stroke="#6a3414" stroke-width="0.8" opacity=".5"/><path d="M42 38 C46 42 44 48 47 52" fill="none" stroke="#7a3a14" stroke-width="0.7" opacity=".45"/></svg><svg class="a" style="left:34px;top:10.5px" width="31" height="16" viewBox="0 0 31 16"><path d="M4 1h23l3 3.5v7l-3 3.5h-23l-3-3.5v-7z" fill="#2a3690" stroke="#d9dcf0" stroke-width="1"/><path d="M5 2.5h21l2 2.5v2h-25v-2z" fill="#4a58b8" opacity=".6"/></svg><div class="t" style="left:34px;top:13.3px;width:31px;text-align:center;font-family:Liberation Serif;font-weight:bold;font-size:10.5px;color:#fff">020</div><div class="a" style="left:5px;top:72.5px;width:14px;height:13px;border-radius:50%;border:1px solid #cdd08e;background:radial-gradient(circle,#b4b86c,#8f9642)"></div><div class="a" style="left:5.5px;top:88px;width:7px;height:2.6px;background:#f0f2e4;border-radius:1px"></div></div><div class="a" style="left:535.1px;top:456.3px;width:1.1px;height:6.4px;background:#454545"></div><div class="a" style="left:535.1px;top:558.2px;width:1.1px;height:6.4px;background:#454545"></div><div class="a" style="left:627.6px;top:456.3px;width:1.1px;height:6.4px;background:#454545"></div><div class="a" style="left:627.6px;top:558.2px;width:1.1px;height:6.4px;background:#454545"></div><div class="a" style="left:526.9px;top:464.1px;width:6.6px;height:1.1px;background:#454545"></div><div class="a" style="left:631.1px;top:464.1px;width:6.3px;height:1.1px;background:#454545"></div><div class="a" style="left:526.9px;top:555.3px;width:6.6px;height:1.1px;background:#454545"></div><div class="a" style="left:631.1px;top:555.3px;width:6.3px;height:1.1px;background:#454545"></div><div class="a" style="left:579.25px;top:456.65px;width:5.5px;height:5.5px;border-radius:45%;transform:rotate(45deg);background:radial-gradient(circle,#c4c4c4 0 0.75px,#222 1.35px)"></div><div class="a" style="left:526.85px;top:507.95px;width:5.5px;height:5.5px;border-radius:45%;transform:rotate(45deg);background:radial-gradient(circle,#c4c4c4 0 0.75px,#222 1.35px)"></div><div class="a" style="left:631.45px;top:507.95px;width:5.5px;height:5.5px;border-radius:45%;transform:rotate(45deg);background:radial-gradient(circle,#c4c4c4 0 0.75px,#222 1.35px)"></div><div class="a" style="left:579.25px;top:558.85px;width:5.5px;height:5.5px;border-radius:45%;transform:rotate(45deg);background:radial-gradient(circle,#c4c4c4 0 0.75px,#222 1.35px)"></div><div class="t" style="left:561.9px;top:570.6px;width:40px;text-align:center;font-size:9.8px;color:#707070">18</div>
<div class="a" style="left:677.8px;top:456px;width:111px;height:109px;background:#ffffff;border:1px solid #d5d5d5"></div><div class="a" style="left:683.8px;top:462px;width:99px;height:98px;overflow:hidden"><div class="a" style="left:0px;top:0px;width:98.5px;height:97px;background:#ebe5cf"></div><div class="a" style="left:5px;top:5px;width:88px;height:82px;background:#dedac8;border-radius:3px;border:0.6px solid #c9c3ad"></div><div class="a" style="left:8.6px;top:8px;width:80.4px;height:78px;background:linear-gradient(#d6dac6 0%,#b9c9b4 35%,#98b5ac 70%,#8aaea8 100%);border:0.8px solid #8d998a"></div><div class="a" style="left:22.4px;top:26.5px;width:54px;height:18.5px;background:radial-gradient(ellipse,#eeede2,#d3d3c4 80%);border:0.5px solid #9a9a88"></div><div class="a" style="left:28px;top:30px;width:42px;height:1.25px;background:linear-gradient(90deg,#282828 0.0px 6.0px,transparent 6.0px 7.1px,#282828 7.1px 16.1px,transparent 16.1px 17.2px,#282828 17.2px 20.9px,transparent 20.9px 22.0px,#282828 22.0px 30.1px,transparent 30.1px 31.2px,#282828 31.2px 38.9px,transparent 38.9px 40.0px,#282828 40.0px 42.0px,transparent 42.0px 43.1px);opacity:.8"></div><div class="a" style="left:28px;top:35px;width:42px;height:1.25px;background:linear-gradient(90deg,#282828 0.0px 7.9px,transparent 7.9px 9.0px,#282828 9.0px 15.8px,transparent 15.8px 16.9px,#282828 16.9px 21.7px,transparent 21.7px 22.8px,#282828 22.8px 27.5px,transparent 27.5px 28.6px,#282828 28.6px 33.6px,transparent 33.6px 34.7px,#282828 34.7px 42.0px,transparent 42.0px 43.1px);opacity:.8"></div><div class="a" style="left:28px;top:39px;width:34px;height:1.25px;background:linear-gradient(90deg,#282828 0.0px 3.1px,transparent 3.1px 4.2px,#282828 4.2px 8.0px,transparent 8.0px 9.1px,#282828 9.1px 16.9px,transparent 16.9px 18.0px,#282828 18.0px 22.2px,transparent 22.2px 23.3px,#282828 23.3px 26.3px,transparent 26.3px 27.4px,#282828 27.4px 30.1px,transparent 30.1px 31.2px,#282828 31.2px 34.0px,transparent 34.0px 35.1px);opacity:.8"></div><div class="a" style="left:56px;top:55px;width:33px;height:32px;background:#f2eee6;border:1.5px solid #2a2a2a"></div><div class="a" style="left:61px;top:60px;width:22px;height:21px;border-radius:50%;background:radial-gradient(circle,#c8ae62,#e2cf92 45%,#efe4c2 65%,#f2eee6 78%)"></div><div class="a" style="left:6.6px;top:73.5px;width:21.5px;height:8px;background:#8a1f5c"></div><div class="a" style="left:10px;top:75.3px;width:4.3px;height:4.3px;background:#fff;transform:rotate(45deg)"></div><div class="a" style="left:30px;top:6px;width:36px;height:9.5px;background:linear-gradient(#f4f4ee,#d6d6ce 55%,#9a9a92);border-radius:1.5px;border:0.5px solid #6a6a62"></div><div class="a" style="left:27.5px;top:10.275px;width:3.5px;height:6.6499999999999995px;background:#7a7a72;border-radius:1px"></div><div class="a" style="left:65px;top:10.275px;width:3.5px;height:6.6499999999999995px;background:#7a7a72;border-radius:1px"></div><div class="t" style="left:30px;top:8.1px;width:36px;text-align:center;font-family:Liberation Sans;font-weight:bold;font-size:5.4px;letter-spacing:-0.25px;color:#1a1a1a">Dormido 2/2</div><div class="a" style="left:4px;top:0px;width:19px;height:19px;border-radius:50%;background:radial-gradient(circle,#f7f4ee 0 50%,#cfcac4 60%,#eeeeee 68%,#bdbdbd 74%,rgba(240,240,240,.9) 80%,transparent 84%)"></div><div class="a" style="left:10.84px;top:7.22px;width:5.7px;height:3.8000000000000003px;border-radius:50% 40% 50% 40%;background:#b8961c;opacity:.75"></div><div class="a" style="left:92px;top:30px;width:1.2px;height:50px;background:repeating-linear-gradient(#8a8677 0 5px,transparent 5px 9px)"></div><div class="a" style="left:0px;top:87px;width:98.5px;height:10px;background:#8f8f8f"></div><div class="a" style="left:5px;top:89.5px;width:10px;height:2px;background:#e8e8e8"></div></div><div class="a" style="left:686.3px;top:456.3px;width:1.1px;height:6.4px;background:#454545"></div><div class="a" style="left:686.3px;top:558.2px;width:1.1px;height:6.4px;background:#454545"></div><div class="a" style="left:778.8px;top:456.3px;width:1.1px;height:6.4px;background:#454545"></div><div class="a" style="left:778.8px;top:558.2px;width:1.1px;height:6.4px;background:#454545"></div><div class="a" style="left:678.1px;top:464.1px;width:6.6px;height:1.1px;background:#454545"></div><div class="a" style="left:782.3px;top:464.1px;width:6.3px;height:1.1px;background:#454545"></div><div class="a" style="left:678.1px;top:555.3px;width:6.6px;height:1.1px;background:#454545"></div><div class="a" style="left:782.3px;top:555.3px;width:6.3px;height:1.1px;background:#454545"></div><div class="a" style="left:730.45px;top:456.65px;width:5.5px;height:5.5px;border-radius:45%;transform:rotate(45deg);background:radial-gradient(circle,#c4c4c4 0 0.75px,#222 1.35px)"></div><div class="a" style="left:678.05px;top:507.95px;width:5.5px;height:5.5px;border-radius:45%;transform:rotate(45deg);background:radial-gradient(circle,#c4c4c4 0 0.75px,#222 1.35px)"></div><div class="a" style="left:782.65px;top:507.95px;width:5.5px;height:5.5px;border-radius:45%;transform:rotate(45deg);background:radial-gradient(circle,#c4c4c4 0 0.75px,#222 1.35px)"></div><div class="a" style="left:730.45px;top:558.85px;width:5.5px;height:5.5px;border-radius:45%;transform:rotate(45deg);background:radial-gradient(circle,#c4c4c4 0 0.75px,#222 1.35px)"></div><div class="t" style="left:713.1px;top:570.6px;width:40px;text-align:center;font-size:9.8px;color:#707070">19</div>
<div class="a" style="left:829.0px;top:456px;width:111px;height:109px;background:#ffffff;border:1px solid #d5d5d5"></div><div class="a" style="left:835.0px;top:462px;width:99px;height:98px;overflow:hidden"><div class="a" style="left:0px;top:0px;width:98.5px;height:97px;background:radial-gradient(ellipse 75% 75% at 50% 48%,#969c50 0%,#8a9145 45%,#7b843a 100%)"></div><div class="a" style="left:0px;top:0px;width:98.5px;height:97px;background:repeating-linear-gradient(rgba(255,255,240,.04) 0 1px,transparent 1px 2.5px)"></div><svg class="a" style="left:0;top:0" width="99" height="98" viewBox="0 0 99 98"><defs><radialGradient id="gb020" cx="0.5" cy="0.45" r="0.6"><stop offset="0" stop-color="#f4c446"/><stop offset="0.45" stop-color="#dc9a30"/><stop offset="0.8" stop-color="#a65c20"/><stop offset="1" stop-color="#5a3012"/></radialGradient><radialGradient id="gy020" cx="0.5" cy="0.45" r="0.65"><stop offset="0" stop-color="#fff4a0"/><stop offset="0.45" stop-color="#f3d23a"/><stop offset="1" stop-color="#c98a1e"/></radialGradient></defs><circle cx="48.5" cy="50" r="33" fill="#7a843b" stroke="#c3c88c" stroke-width="0.9"/><circle cx="48.5" cy="50" r="27.5" fill="#687232"/><circle cx="48.5" cy="50" r="29" fill="none" stroke="#9aa262" stroke-width="0.6" opacity=".7"/><circle cx="49.5" cy="49.8" r="24.6" fill="url(#gb020)"/><path d="M53 31 C60 29 67 33 71 40 C74 47 73 56 69 62 C66 66 63 68 61 68 C61 63 59 60 56 57 C53 55 52 51 53 47 C54 43 51 41 51 37 C50 34 51 32 53 31z" fill="url(#gy020)"/><path d="M38 30 C42 28 47 28 50 30 C48 33 45 34 42 36 C39 37 36 35 38 30z" fill="#f2cc40" opacity=".85"/><path d="M30 45 C33 40 38 40 40 44 C41 49 37 53 33 52 C30 51 29 48 30 45z" fill="#e8b038" opacity=".7"/><path d="M36 58 C40 56 46 58 48 63 C46 67 40 68 36 65 C34 63 34 60 36 58z" fill="#d89a30" opacity=".6"/><path d="M53 31 C50 34 51 38 53 42 C55 46 52 50 55 55 C58 59 61 62 60 69" fill="none" stroke="#4a220c" stroke-width="1.3"/><path d="M28 52 C32 56 30 62 35 66" fill="none" stroke="#6a3414" stroke-width="0.8" opacity=".5"/><path d="M42 38 C46 42 44 48 47 52" fill="none" stroke="#7a3a14" stroke-width="0.7" opacity=".45"/></svg><svg class="a" style="left:34px;top:10.5px" width="31" height="16" viewBox="0 0 31 16"><path d="M4 1h23l3 3.5v7l-3 3.5h-23l-3-3.5v-7z" fill="#2a3690" stroke="#d9dcf0" stroke-width="1"/><path d="M5 2.5h21l2 2.5v2h-25v-2z" fill="#4a58b8" opacity=".6"/></svg><div class="t" style="left:34px;top:13.3px;width:31px;text-align:center;font-family:Liberation Serif;font-weight:bold;font-size:10.5px;color:#fff">020</div><div class="a" style="left:5px;top:72.5px;width:14px;height:13px;border-radius:50%;border:1px solid #cdd08e;background:radial-gradient(circle,#b4b86c,#8f9642)"></div><div class="a" style="left:5.5px;top:88px;width:7px;height:2.6px;background:#f0f2e4;border-radius:1px"></div></div><div class="a" style="left:837.5px;top:456.3px;width:1.1px;height:6.4px;background:#454545"></div><div class="a" style="left:837.5px;top:558.2px;width:1.1px;height:6.4px;background:#454545"></div><div class="a" style="left:930.0px;top:456.3px;width:1.1px;height:6.4px;background:#454545"></div><div class="a" style="left:930.0px;top:558.2px;width:1.1px;height:6.4px;background:#454545"></div><div class="a" style="left:829.3px;top:464.1px;width:6.6px;height:1.1px;background:#454545"></div><div class="a" style="left:933.5px;top:464.1px;width:6.3px;height:1.1px;background:#454545"></div><div class="a" style="left:829.3px;top:555.3px;width:6.6px;height:1.1px;background:#454545"></div><div class="a" style="left:933.5px;top:555.3px;width:6.3px;height:1.1px;background:#454545"></div><div class="a" style="left:881.65px;top:456.65px;width:5.5px;height:5.5px;border-radius:45%;transform:rotate(45deg);background:radial-gradient(circle,#c4c4c4 0 0.75px,#222 1.35px)"></div><div class="a" style="left:829.25px;top:507.95px;width:5.5px;height:5.5px;border-radius:45%;transform:rotate(45deg);background:radial-gradient(circle,#c4c4c4 0 0.75px,#222 1.35px)"></div><div class="a" style="left:933.85px;top:507.95px;width:5.5px;height:5.5px;border-radius:45%;transform:rotate(45deg);background:radial-gradient(circle,#c4c4c4 0 0.75px,#222 1.35px)"></div><div class="a" style="left:881.65px;top:558.85px;width:5.5px;height:5.5px;border-radius:45%;transform:rotate(45deg);background:radial-gradient(circle,#c4c4c4 0 0.75px,#222 1.35px)"></div><div class="t" style="left:864.3px;top:570.6px;width:40px;text-align:center;font-size:9.8px;color:#707070">20</div>
<div class="a" style="left:73.0px;top:607px;width:111px;height:109px;background:#ffffff;border:1px solid #d5d5d5"></div><div class="a" style="left:81.5px;top:607.3px;width:1.1px;height:6.4px;background:#454545"></div><div class="a" style="left:81.5px;top:709.2px;width:1.1px;height:6.4px;background:#454545"></div><div class="a" style="left:174.0px;top:607.3px;width:1.1px;height:6.4px;background:#454545"></div><div class="a" style="left:174.0px;top:709.2px;width:1.1px;height:6.4px;background:#454545"></div><div class="a" style="left:73.3px;top:615.1px;width:6.6px;height:1.1px;background:#454545"></div><div class="a" style="left:177.5px;top:615.1px;width:6.3px;height:1.1px;background:#454545"></div><div class="a" style="left:73.3px;top:706.3px;width:6.6px;height:1.1px;background:#454545"></div><div class="a" style="left:177.5px;top:706.3px;width:6.3px;height:1.1px;background:#454545"></div><div class="a" style="left:125.65px;top:607.65px;width:5.5px;height:5.5px;border-radius:45%;transform:rotate(45deg);background:radial-gradient(circle,#c4c4c4 0 0.75px,#222 1.35px)"></div><div class="a" style="left:73.25px;top:658.95px;width:5.5px;height:5.5px;border-radius:45%;transform:rotate(45deg);background:radial-gradient(circle,#c4c4c4 0 0.75px,#222 1.35px)"></div><div class="a" style="left:177.85px;top:658.95px;width:5.5px;height:5.5px;border-radius:45%;transform:rotate(45deg);background:radial-gradient(circle,#c4c4c4 0 0.75px,#222 1.35px)"></div><div class="a" style="left:125.65px;top:709.85px;width:5.5px;height:5.5px;border-radius:45%;transform:rotate(45deg);background:radial-gradient(circle,#c4c4c4 0 0.75px,#222 1.35px)"></div><div class="t" style="left:108.3px;top:721.6px;width:40px;text-align:center;font-size:9.8px;color:#707070">22</div>
<div class="a" style="left:224.2px;top:607px;width:111px;height:109px;background:#ffffff;border:1px solid #d5d5d5"></div><div class="a" style="left:232.7px;top:607.3px;width:1.1px;height:6.4px;background:#454545"></div><div class="a" style="left:232.7px;top:709.2px;width:1.1px;height:6.4px;background:#454545"></div><div class="a" style="left:325.2px;top:607.3px;width:1.1px;height:6.4px;background:#454545"></div><div class="a" style="left:325.2px;top:709.2px;width:1.1px;height:6.4px;background:#454545"></div><div class="a" style="left:224.5px;top:615.1px;width:6.6px;height:1.1px;background:#454545"></div><div class="a" style="left:328.7px;top:615.1px;width:6.3px;height:1.1px;background:#454545"></div><div class="a" style="left:224.5px;top:706.3px;width:6.6px;height:1.1px;background:#454545"></div><div class="a" style="left:328.7px;top:706.3px;width:6.3px;height:1.1px;background:#454545"></div><div class="a" style="left:276.85px;top:607.65px;width:5.5px;height:5.5px;border-radius:45%;transform:rotate(45deg);background:radial-gradient(circle,#c4c4c4 0 0.75px,#222 1.35px)"></div><div class="a" style="left:224.45px;top:658.95px;width:5.5px;height:5.5px;border-radius:45%;transform:rotate(45deg);background:radial-gradient(circle,#c4c4c4 0 0.75px,#222 1.35px)"></div><div class="a" style="left:329.05px;top:658.95px;width:5.5px;height:5.5px;border-radius:45%;transform:rotate(45deg);background:radial-gradient(circle,#c4c4c4 0 0.75px,#222 1.35px)"></div><div class="a" style="left:276.85px;top:709.85px;width:5.5px;height:5.5px;border-radius:45%;transform:rotate(45deg);background:radial-gradient(circle,#c4c4c4 0 0.75px,#222 1.35px)"></div><div class="t" style="left:259.5px;top:721.6px;width:40px;text-align:center;font-size:9.8px;color:#707070">23</div>
<div class="a" style="left:375.4px;top:607px;width:111px;height:109px;background:#ffffff;border:1px solid #d5d5d5"></div><div class="a" style="left:383.9px;top:607.3px;width:1.1px;height:6.4px;background:#454545"></div><div class="a" style="left:383.9px;top:709.2px;width:1.1px;height:6.4px;background:#454545"></div><div class="a" style="left:476.4px;top:607.3px;width:1.1px;height:6.4px;background:#454545"></div><div class="a" style="left:476.4px;top:709.2px;width:1.1px;height:6.4px;background:#454545"></div><div class="a" style="left:375.7px;top:615.1px;width:6.6px;height:1.1px;background:#454545"></div><div class="a" style="left:479.9px;top:615.1px;width:6.3px;height:1.1px;background:#454545"></div><div class="a" style="left:375.7px;top:706.3px;width:6.6px;height:1.1px;background:#454545"></div><div class="a" style="left:479.9px;top:706.3px;width:6.3px;height:1.1px;background:#454545"></div><div class="a" style="left:428.05px;top:607.65px;width:5.5px;height:5.5px;border-radius:45%;transform:rotate(45deg);background:radial-gradient(circle,#c4c4c4 0 0.75px,#222 1.35px)"></div><div class="a" style="left:375.65px;top:658.95px;width:5.5px;height:5.5px;border-radius:45%;transform:rotate(45deg);background:radial-gradient(circle,#c4c4c4 0 0.75px,#222 1.35px)"></div><div class="a" style="left:480.25px;top:658.95px;width:5.5px;height:5.5px;border-radius:45%;transform:rotate(45deg);background:radial-gradient(circle,#c4c4c4 0 0.75px,#222 1.35px)"></div><div class="a" style="left:428.05px;top:709.85px;width:5.5px;height:5.5px;border-radius:45%;transform:rotate(45deg);background:radial-gradient(circle,#c4c4c4 0 0.75px,#222 1.35px)"></div><div class="t" style="left:410.7px;top:721.6px;width:40px;text-align:center;font-size:9.8px;color:#707070">24</div>
<div class="a" style="left:526.6px;top:607px;width:111px;height:109px;background:#ffffff;border:1px solid #d5d5d5"></div><div class="a" style="left:535.1px;top:607.3px;width:1.1px;height:6.4px;background:#454545"></div><div class="a" style="left:535.1px;top:709.2px;width:1.1px;height:6.4px;background:#454545"></div><div class="a" style="left:627.6px;top:607.3px;width:1.1px;height:6.4px;background:#454545"></div><div class="a" style="left:627.6px;top:709.2px;width:1.1px;height:6.4px;background:#454545"></div><div class="a" style="left:526.9px;top:615.1px;width:6.6px;height:1.1px;background:#454545"></div><div class="a" style="left:631.1px;top:615.1px;width:6.3px;height:1.1px;background:#454545"></div><div class="a" style="left:526.9px;top:706.3px;width:6.6px;height:1.1px;background:#454545"></div><div class="a" style="left:631.1px;top:706.3px;width:6.3px;height:1.1px;background:#454545"></div><div class="a" style="left:579.25px;top:607.65px;width:5.5px;height:5.5px;border-radius:45%;transform:rotate(45deg);background:radial-gradient(circle,#c4c4c4 0 0.75px,#222 1.35px)"></div><div class="a" style="left:526.85px;top:658.95px;width:5.5px;height:5.5px;border-radius:45%;transform:rotate(45deg);background:radial-gradient(circle,#c4c4c4 0 0.75px,#222 1.35px)"></div><div class="a" style="left:631.45px;top:658.95px;width:5.5px;height:5.5px;border-radius:45%;transform:rotate(45deg);background:radial-gradient(circle,#c4c4c4 0 0.75px,#222 1.35px)"></div><div class="a" style="left:579.25px;top:709.85px;width:5.5px;height:5.5px;border-radius:45%;transform:rotate(45deg);background:radial-gradient(circle,#c4c4c4 0 0.75px,#222 1.35px)"></div><div class="t" style="left:561.9px;top:721.6px;width:40px;text-align:center;font-size:9.8px;color:#707070">25</div>
<div class="a" style="left:677.8px;top:607px;width:111px;height:109px;background:#ffffff;border:1px solid #d5d5d5"></div><div class="a" style="left:686.3px;top:607.3px;width:1.1px;height:6.4px;background:#454545"></div><div class="a" style="left:686.3px;top:709.2px;width:1.1px;height:6.4px;background:#454545"></div><div class="a" style="left:778.8px;top:607.3px;width:1.1px;height:6.4px;background:#454545"></div><div class="a" style="left:778.8px;top:709.2px;width:1.1px;height:6.4px;background:#454545"></div><div class="a" style="left:678.1px;top:615.1px;width:6.6px;height:1.1px;background:#454545"></div><div class="a" style="left:782.3px;top:615.1px;width:6.3px;height:1.1px;background:#454545"></div><div class="a" style="left:678.1px;top:706.3px;width:6.6px;height:1.1px;background:#454545"></div><div class="a" style="left:782.3px;top:706.3px;width:6.3px;height:1.1px;background:#454545"></div><div class="a" style="left:730.45px;top:607.65px;width:5.5px;height:5.5px;border-radius:45%;transform:rotate(45deg);background:radial-gradient(circle,#c4c4c4 0 0.75px,#222 1.35px)"></div><div class="a" style="left:678.05px;top:658.95px;width:5.5px;height:5.5px;border-radius:45%;transform:rotate(45deg);background:radial-gradient(circle,#c4c4c4 0 0.75px,#222 1.35px)"></div><div class="a" style="left:782.65px;top:658.95px;width:5.5px;height:5.5px;border-radius:45%;transform:rotate(45deg);background:radial-gradient(circle,#c4c4c4 0 0.75px,#222 1.35px)"></div><div class="a" style="left:730.45px;top:709.85px;width:5.5px;height:5.5px;border-radius:45%;transform:rotate(45deg);background:radial-gradient(circle,#c4c4c4 0 0.75px,#222 1.35px)"></div><div class="t" style="left:713.1px;top:721.6px;width:40px;text-align:center;font-size:9.8px;color:#707070">26</div>
<div class="a" style="left:829.0px;top:607px;width:111px;height:109px;background:#ffffff;border:1px solid #d5d5d5"></div><div class="a" style="left:837.5px;top:607.3px;width:1.1px;height:6.4px;background:#454545"></div><div class="a" style="left:837.5px;top:709.2px;width:1.1px;height:6.4px;background:#454545"></div><div class="a" style="left:930.0px;top:607.3px;width:1.1px;height:6.4px;background:#454545"></div><div class="a" style="left:930.0px;top:709.2px;width:1.1px;height:6.4px;background:#454545"></div><div class="a" style="left:829.3px;top:615.1px;width:6.6px;height:1.1px;background:#454545"></div><div class="a" style="left:933.5px;top:615.1px;width:6.3px;height:1.1px;background:#454545"></div><div class="a" style="left:829.3px;top:706.3px;width:6.6px;height:1.1px;background:#454545"></div><div class="a" style="left:933.5px;top:706.3px;width:6.3px;height:1.1px;background:#454545"></div><div class="a" style="left:881.65px;top:607.65px;width:5.5px;height:5.5px;border-radius:45%;transform:rotate(45deg);background:radial-gradient(circle,#c4c4c4 0 0.75px,#222 1.35px)"></div><div class="a" style="left:829.25px;top:658.95px;width:5.5px;height:5.5px;border-radius:45%;transform:rotate(45deg);background:radial-gradient(circle,#c4c4c4 0 0.75px,#222 1.35px)"></div><div class="a" style="left:933.85px;top:658.95px;width:5.5px;height:5.5px;border-radius:45%;transform:rotate(45deg);background:radial-gradient(circle,#c4c4c4 0 0.75px,#222 1.35px)"></div><div class="a" style="left:881.65px;top:709.85px;width:5.5px;height:5.5px;border-radius:45%;transform:rotate(45deg);background:radial-gradient(circle,#c4c4c4 0 0.75px,#222 1.35px)"></div><div class="t" style="left:864.3px;top:721.6px;width:40px;text-align:center;font-size:9.8px;color:#707070">27</div>
<div class="a" style="left:979px;top:0px;width:103px;height:611px;background:#2a2a2a"></div>
<div class="a" style="left:979px;top:0px;width:103px;height:14px;background:#333333"></div>
<div class="a" style="left:979px;top:13.5px;width:103px;height:1px;background:#272727"></div>
<div class="a" style="left:1034px;top:7px;width:6px;height:1.2px;background:#d0d0d0"></div>
<div class="a" style="left:1050px;top:4.5px;width:5.5px;height:4.5px;border:1px solid #cfcfcf"></div>
<div class="a" style="left:1051.8px;top:3px;width:5.5px;height:4.5px;border-top:1px solid #cfcfcf;border-right:1px solid #cfcfcf"></div>
<svg class="a" style="left:1071.5px;top:2.5px" width="7" height="7" viewBox="0 0 7 7"><path d="M0.5 0.5l6 6M6.5 0.5l-6 6" stroke="#d4d4d4" stroke-width="1.1"/></svg>
<div class="a" style="left:979px;top:14.5px;width:103px;height:20px;background:#353535"></div>
<div class="a" style="left:1002.5px;top:16.5px;width:42.5px;height:15.5px;background:#1473e6;border-radius:8px"></div>
<div class="t" style="left:1002.5px;top:20.5px;width:42.5px;text-align:center;font-size:6.6px;color:#fff;letter-spacing:-0.1px">Compartir</div>
<svg class="a" style="left:1050px;top:20px" width="10" height="10" viewBox="0 0 10 10"><circle cx="4" cy="4" r="3.1" fill="none" stroke="#e0e0e0" stroke-width="1.3"/><path d="M6.3 6.3l3 3" stroke="#e0e0e0" stroke-width="1.5"/></svg>
<div class="a" style="left:1067px;top:21px;width:10px;height:8px;border:1.1px solid #d8d8d8;border-left-width:2px"></div>
<div class="a" style="left:979px;top:34.5px;width:103px;height:17px;background:#2b2b2b"></div>
<div class="a" style="left:979px;top:34.5px;width:87px;height:16.5px;background:#434343"></div>
<div class="t" style="left:980.5px;top:39.2px;font-size:7.2px;font-weight:bold;letter-spacing:-0.45px;color:#e4e4e4">100% (Capa 1, RGB/8#) *</div>
<div class="t" style="left:1056.5px;top:38px;font-size:8px;color:#8a8a8a">&#215;</div>
<div class="a" style="left:979px;top:51.5px;width:103px;height:11px;background:#3b3b3b;border-top:1px solid #2a2a2a"></div>
<div class="t" style="left:996px;top:54.5px;font-size:5.5px;color:#7a7a7a">1600</div>
<div class="t" style="left:1024px;top:54.5px;font-size:5.5px;color:#7a7a7a">1700</div>
<div class="t" style="left:1051px;top:54.5px;font-size:5.5px;color:#7a7a7a">1800</div>
<div class="a" style="left:993px;top:56px;width:0.6px;height:6px;background:#555"></div>
<div class="a" style="left:1021px;top:56px;width:0.6px;height:6px;background:#555"></div>
<div class="a" style="left:1048px;top:56px;width:0.6px;height:6px;background:#555"></div>
<div class="a" style="left:1075px;top:56px;width:0.6px;height:6px;background:#555"></div>
<div class="a" style="left:979px;top:62.5px;width:103px;height:5px;background:#1e1e1e"></div>
<div class="a" style="left:1064px;top:67.5px;width:18px;height:543.5px;background:#252525"></div>
<div class="a" style="left:1066.5px;top:67.5px;width:1px;height:143px;background:#1c1c1c"></div>
<div class="a" style="left:979px;top:67.5px;width:85px;height:141px;background:#3b3b3b"></div>
<div class="a" style="left:979px;top:67.5px;width:85px;height:25px;background:#363636;border-top:1px solid #444"></div>
<div class="t" style="left:1046px;top:69px;font-size:6px;color:#bbb">&#187;</div>
<div class="a" style="left:1057px;top:71px;width:4.5px;height:4.5px;background:#bdbdbd"></div>
<div class="a" style="left:1056.5px;top:82px;width:5.5px;height:5px;background:#777"></div>
<div class="a" style="left:1049px;top:70px;width:0.8px;height:18px;background:#4a4a4a"></div>
<div class="a" style="left:979px;top:92.5px;width:85px;height:7.5px;background:#404040"></div>
<div class="a" style="left:979px;top:102.5px;width:22px;height:9px;background:#2e2e2e"></div>
<div class="a" style="left:1003px;top:102.5px;width:11px;height:9px;background:#333"></div>
<svg class="a" style="left:1006px;top:104.5px" width="6" height="5" viewBox="0 0 6 5"><path d="M0.7 1.2l2.3 2.3 2.3-2.3" fill="none" stroke="#aaa" stroke-width="0.9"/></svg>
<div class="a" style="left:1017px;top:102.5px;width:34px;height:9px;background:#2e2e2e"></div>
<div class="t" style="left:1019px;top:104.3px;font-size:6.3px;color:#d6d6d6;letter-spacing:-0.1px">Narrow B...</div>
<div class="a" style="left:1054px;top:102.5px;width:8px;height:9px;background:#2e2e2e"></div>
<svg class="a" style="left:1055px;top:104.5px" width="6" height="5" viewBox="0 0 6 5"><path d="M0.7 1.2l2.3 2.3 2.3-2.3" fill="none" stroke="#aaa" stroke-width="0.9"/></svg>
<div class="a" style="left:979px;top:116.5px;width:16px;height:9px;background:#2f2f2f"></div>
<svg class="a" style="left:997px;top:119.0px" width="6" height="5" viewBox="0 0 6 5"><path d="M0.7 1.2l2.3 2.3 2.3-2.3" fill="none" stroke="#aaa" stroke-width="0.9"/></svg>
<div class="a" style="left:1019.5px;top:116.5px;width:33px;height:9px;background:#2f2f2f"></div>
<div class="t" style="left:1021px;top:118.3px;font-size:6.5px;color:#d8d8d8">12 pt</div>
<svg class="a" style="left:1054.5px;top:119.0px" width="6" height="5" viewBox="0 0 6 5"><path d="M0.7 1.2l2.3 2.3 2.3-2.3" fill="none" stroke="#aaa" stroke-width="0.9"/></svg>
<div class="a" style="left:979px;top:127.5px;width:16px;height:9px;background:#2f2f2f"></div>
<svg class="a" style="left:997px;top:130.0px" width="6" height="5" viewBox="0 0 6 5"><path d="M0.7 1.2l2.3 2.3 2.3-2.3" fill="none" stroke="#aaa" stroke-width="0.9"/></svg>
<div class="a" style="left:1019.5px;top:127.5px;width:33px;height:9px;background:#2f2f2f"></div>
<div class="t" style="left:1021px;top:129.3px;font-size:6.5px;color:#d8d8d8">10</div>
<svg class="a" style="left:1054.5px;top:130.0px" width="6" height="5" viewBox="0 0 6 5"><path d="M0.7 1.2l2.3 2.3 2.3-2.3" fill="none" stroke="#aaa" stroke-width="0.9"/></svg>
<svg class="a" style="left:1007px;top:116px" width="10" height="21" viewBox="0 0 10 21"><path d="M5 1l-3 4h6z" fill="#ddd"/><path d="M2 9h6M5 5v4" stroke="#ddd"/><rect x="1" y="12" width="8" height="8" fill="none" stroke="#ddd" stroke-width="0.9"/><path d="M3 14h4M3 16h4M3 18h4" stroke="#ddd" stroke-width="0.7"/></svg>
<div class="a" style="left:979px;top:140px;width:12px;height:9px;background:#333"></div>
<svg class="a" style="left:1019.5px;top:139.5px" width="10" height="10" viewBox="0 0 10 10"><path d="M1 1h8M5 1v7M2 9h6" stroke="#e6e6e6" stroke-width="1.5"/></svg>
<div class="a" style="left:1030.5px;top:140px;width:28.5px;height:8.5px;background:#2f2f2f"></div>
<div class="t" style="left:1032px;top:141.2px;font-size:6.3px;color:#d8d8d8">100%</div>
<div class="a" style="left:979px;top:151.5px;width:12px;height:9px;background:#333"></div>
<div class="t" style="left:1012px;top:153.2px;font-size:6.2px;color:#9a9a9a">Color:</div>
<div class="a" style="left:1029px;top:151.3px;width:33px;height:11px;background:#f0123c"></div>
<div class="t" style="left:979px;top:166.5px;font-family:Liberation Serif;font-weight:bold;font-size:9px;color:#d8d8d8;letter-spacing:-0.5px">TT</div>
<div class="t" style="left:992px;top:166.5px;font-family:Liberation Serif;font-weight:bold;font-size:9px;color:#d8d8d8;letter-spacing:-0.5px">Tт</div>
<div class="t" style="left:1006px;top:166.5px;font-family:Liberation Serif;font-weight:bold;font-size:9px;color:#d8d8d8;letter-spacing:-0.5px">T¹</div>
<div class="t" style="left:1020px;top:166.5px;font-family:Liberation Serif;font-weight:bold;font-size:9px;color:#d8d8d8;letter-spacing:-0.5px">T₁</div>
<div class="t" style="left:1034px;top:166.5px;font-family:Liberation Serif;font-weight:bold;font-size:9px;color:#d8d8d8;letter-spacing:-0.5px">T</div>
<div class="t" style="left:1047px;top:166.5px;font-family:Liberation Serif;font-weight:bold;font-size:9px;color:#d8d8d8;letter-spacing:-0.5px">Ŧ</div>
<div class="a" style="left:1034px;top:175px;width:7px;height:0.8px;background:#d8d8d8"></div>
<div class="t" style="left:980px;top:182.5px;font-family:Liberation Serif;font-style:italic;font-size:8.5px;color:#7a7a7a">ﬁ</div>
<div class="t" style="left:993px;top:182.5px;font-family:Liberation Serif;font-style:italic;font-size:8.5px;color:#7a7a7a">ß</div>
<div class="t" style="left:1007px;top:182.5px;font-family:Liberation Serif;font-style:italic;font-size:8.5px;color:#7a7a7a">ﬆ</div>
<div class="t" style="left:1021px;top:182.5px;font-family:Liberation Serif;font-style:italic;font-size:8.5px;color:#7a7a7a">T</div>
<div class="t" style="left:1035px;top:182.5px;font-family:Liberation Serif;font-style:italic;font-size:8.5px;color:#7a7a7a">1ˢ</div>
<div class="t" style="left:1048px;top:182.5px;font-family:Liberation Serif;font-style:italic;font-size:8.5px;color:#7a7a7a">½</div>
<div class="a" style="left:979px;top:198px;width:22px;height:9px;background:#2f2f2f"></div>
<div class="t" style="left:980px;top:199.5px;font-size:6px;color:#cfcfcf">la</div>
<svg class="a" style="left:1002px;top:200px" width="6" height="5" viewBox="0 0 6 5"><path d="M0.7 1.2l2.3 2.3 2.3-2.3" fill="none" stroke="#aaa" stroke-width="0.9"/></svg>
<div class="t" style="left:1011px;top:198.5px;font-size:6.5px;color:#bdbdbd">ªa</div>
<div class="a" style="left:1024.5px;top:198px;width:37.5px;height:9px;background:#2f2f2f"></div>
<div class="t" style="left:1026px;top:199.8px;font-size:6.2px;color:#d6d6d6">Fuerte</div>
<svg class="a" style="left:1055px;top:200px" width="6" height="5" viewBox="0 0 6 5"><path d="M0.7 1.2l2.3 2.3 2.3-2.3" fill="none" stroke="#aaa" stroke-width="0.9"/></svg>
<div class="a" style="left:979px;top:208.5px;width:95px;height:9px;background:#2b2b2b"></div>
<div class="t" style="left:1058.5px;top:209px;font-size:6px;color:#ccc">&#187;</div>
<svg class="a" style="left:1068px;top:210.5px" width="5" height="5" viewBox="0 0 5 5"><path d="M0.5 0.5l4 4M4.5 0.5l-4 4" stroke="#ccc" stroke-width="1"/></svg>
<div class="a" style="left:979px;top:217.5px;width:95px;height:17px;background:#383838"></div>
<div class="t" style="left:980px;top:223px;font-size:6.2px;letter-spacing:-0.15px;color:#c8c8c8">Acciones</div>
<div class="a" style="left:1005px;top:219.5px;width:0.8px;height:13px;background:#2a2a2a"></div>
<div class="a" style="left:1067.5px;top:223.5px;width:5px;height:5px;background:#8a8a8a"></div>
<div class="a" style="left:979px;top:234.5px;width:95px;height:360px;background:#3c3c3c"></div>
<svg class="a" style="left:993px;top:241px" width="64" height="11" viewBox="0 0 64 11"><rect x="0.8" y="1" width="7.5" height="8" fill="none" stroke="#ddd" stroke-width="1.1"/><path d="M2 8l2-3 1.5 2 1-1.2 1.2 2.2z" fill="#ddd"/><circle cx="18" cy="5.5" r="3.8" fill="#ddd"/><path d="M15.5 8.3l5-5.6a3.8 3.8 0 0 1 -5 5.6z" fill="#3c3c3c"/><path d="M28.5 1.5h7M32 1.5v8M30.5 9.5h3" stroke="#ddd" stroke-width="1.6"/><rect x="42.5" y="2" width="6.5" height="6.5" fill="none" stroke="#ddd" stroke-width="1.1"/><path d="M41.5 2h1.5M49 2h1.5M41.5 8.5h1.5M49 8.5h1.5" stroke="#ddd"/><path d="M56 1h4l2.5 2.5v6.5h-6.5z" fill="#ddd"/><rect x="55" y="6" width="3.5" height="3.5" fill="#3c3c3c"/></svg>
<div class="a" style="left:1067px;top:242px;width:6px;height:6px;border-radius:50%;background:#eee"></div>
<div class="a" style="left:979px;top:253.5px;width:95px;height:1px;background:#333"></div>
<div class="a" style="left:979px;top:258.5px;width:32px;height:9.5px;background:#333"></div>
<svg class="a" style="left:1005px;top:261px" width="6" height="5" viewBox="0 0 6 5"><path d="M0.7 1.2l2.3 2.3 2.3-2.3" fill="none" stroke="#999" stroke-width="0.9"/></svg>
<div class="t" style="left:1015.5px;top:260.3px;font-size:6px;letter-spacing:-0.15px;color:#b8b8b8">Opacidad:</div>
<div class="a" style="left:1045px;top:258.5px;width:17.5px;height:9.5px;background:#2c2c2c"></div>
<div class="t" style="left:1045.5px;top:260.2px;font-size:6.2px;color:#d8d8d8">100%</div>
<div class="a" style="left:1064.5px;top:258.5px;width:7px;height:9.5px;background:#333"></div>
<div class="a" style="left:979px;top:269px;width:95px;height:1px;background:#333"></div>
<div class="a" style="left:979px;top:274px;width:6px;height:9px;background:#5a7ca8"></div>
<svg class="a" style="left:990.5px;top:273.5px" width="7" height="10" viewBox="0 0 7 10"><path d="M1.8 4.5v-1.5a1.7 1.7 0 0 1 3.4 0v1.5" fill="none" stroke="#eee" stroke-width="1"/><rect x="0.8" y="4.5" width="5.4" height="5" fill="#eee"/></svg>
<div class="t" style="left:1021.5px;top:275.8px;font-size:6px;letter-spacing:-0.1px;color:#b8b8b8">Relleno:</div>
<div class="a" style="left:1045px;top:274px;width:17.5px;height:9.5px;background:#2c2c2c"></div>
<div class="t" style="left:1045.5px;top:275.7px;font-size:6.2px;color:#d8d8d8">100%</div>
<div class="a" style="left:1064.5px;top:274px;width:7px;height:9.5px;background:#333"></div>
<div class="a" style="left:979px;top:288px;width:88px;height:17px;background:#535353"></div>
<div class="a" style="left:979px;top:305px;width:88px;height:1.2px;background:#3a3a3a"></div>
<div class="a" style="left:979px;top:308px;width:88px;height:15.5px;background:#474747"></div>
<svg class="a" style="left:1051px;top:311px" width="7" height="9" viewBox="0 0 7 9"><path d="M1.8 4v-1.3a1.7 1.7 0 0 1 3.4 0v1.3" fill="none" stroke="#ccc" stroke-width="0.9"/><rect x="0.8" y="4" width="5.4" height="4.5" fill="none" stroke="#ccc" stroke-width="0.9"/></svg>
<div class="a" style="left:979px;top:325px;width:95px;height:253px;background:#4a4a4a"></div>
<div class="a" style="left:1066.5px;top:288px;width:7.5px;height:37px;background:#3e3e3e"></div>
<div class="a" style="left:979px;top:577.5px;width:95px;height:1px;background:#353535"></div>
<div class="a" style="left:979px;top:578.5px;width:95px;height:22px;background:#3b3b3b"></div>
<svg class="a" style="left:979px;top:585px" width="90" height="12" viewBox="0 0 90 12"><path d="M2 2l4 5M6 2l-4 5" stroke="#bbb" stroke-width="1"/><rect x="13" y="1.5" width="8" height="7" fill="#eee"/><circle cx="17" cy="5" r="1.6" fill="#333"/><circle cx="32" cy="5.5" r="3.5" fill="#eee"/><path d="M32 2v7a3.5 3.5 0 0 0 0-7" fill="#444"/><path d="M44 2.5h3l1 1h4v5.5h-8z" fill="#eee"/><rect x="60" y="1.5" width="7" height="8" fill="none" stroke="#ccc" stroke-width="1"/><path d="M63.5 3.5v4M61.5 5.5h4" stroke="#ccc"/><path d="M75 3h6M76 3.5l0.5 6h4l0.5-6" fill="#888" stroke="#888"/></svg>
<div class="a" style="left:979px;top:600.5px;width:103px;height:10.5px;background:#383838"></div>
<div class="a" style="left:1074px;top:67.5px;width:8px;height:543px;background:#232323"></div>
<div class="a" style="left:1078.5px;top:396px;width:3px;height:1.5px;background:#2f6f52"></div>
<div class="a" style="left:1078.5px;top:561px;width:3px;height:1.5px;background:#2f6f52"></div>
<div class="a" style="left:979px;top:609.5px;width:103px;height:1.5px;background:#4a5866"></div>
<div class="a" style="left:976.5px;top:1px;width:2.5px;height:610px;background:#fdfdfd"></div>
<div class="a" style="left:970px;top:136px;width:9px;height:145px;background:#d6ebfa;border:1.8px solid #3b8fd9;border-right:none"></div></body></html>
